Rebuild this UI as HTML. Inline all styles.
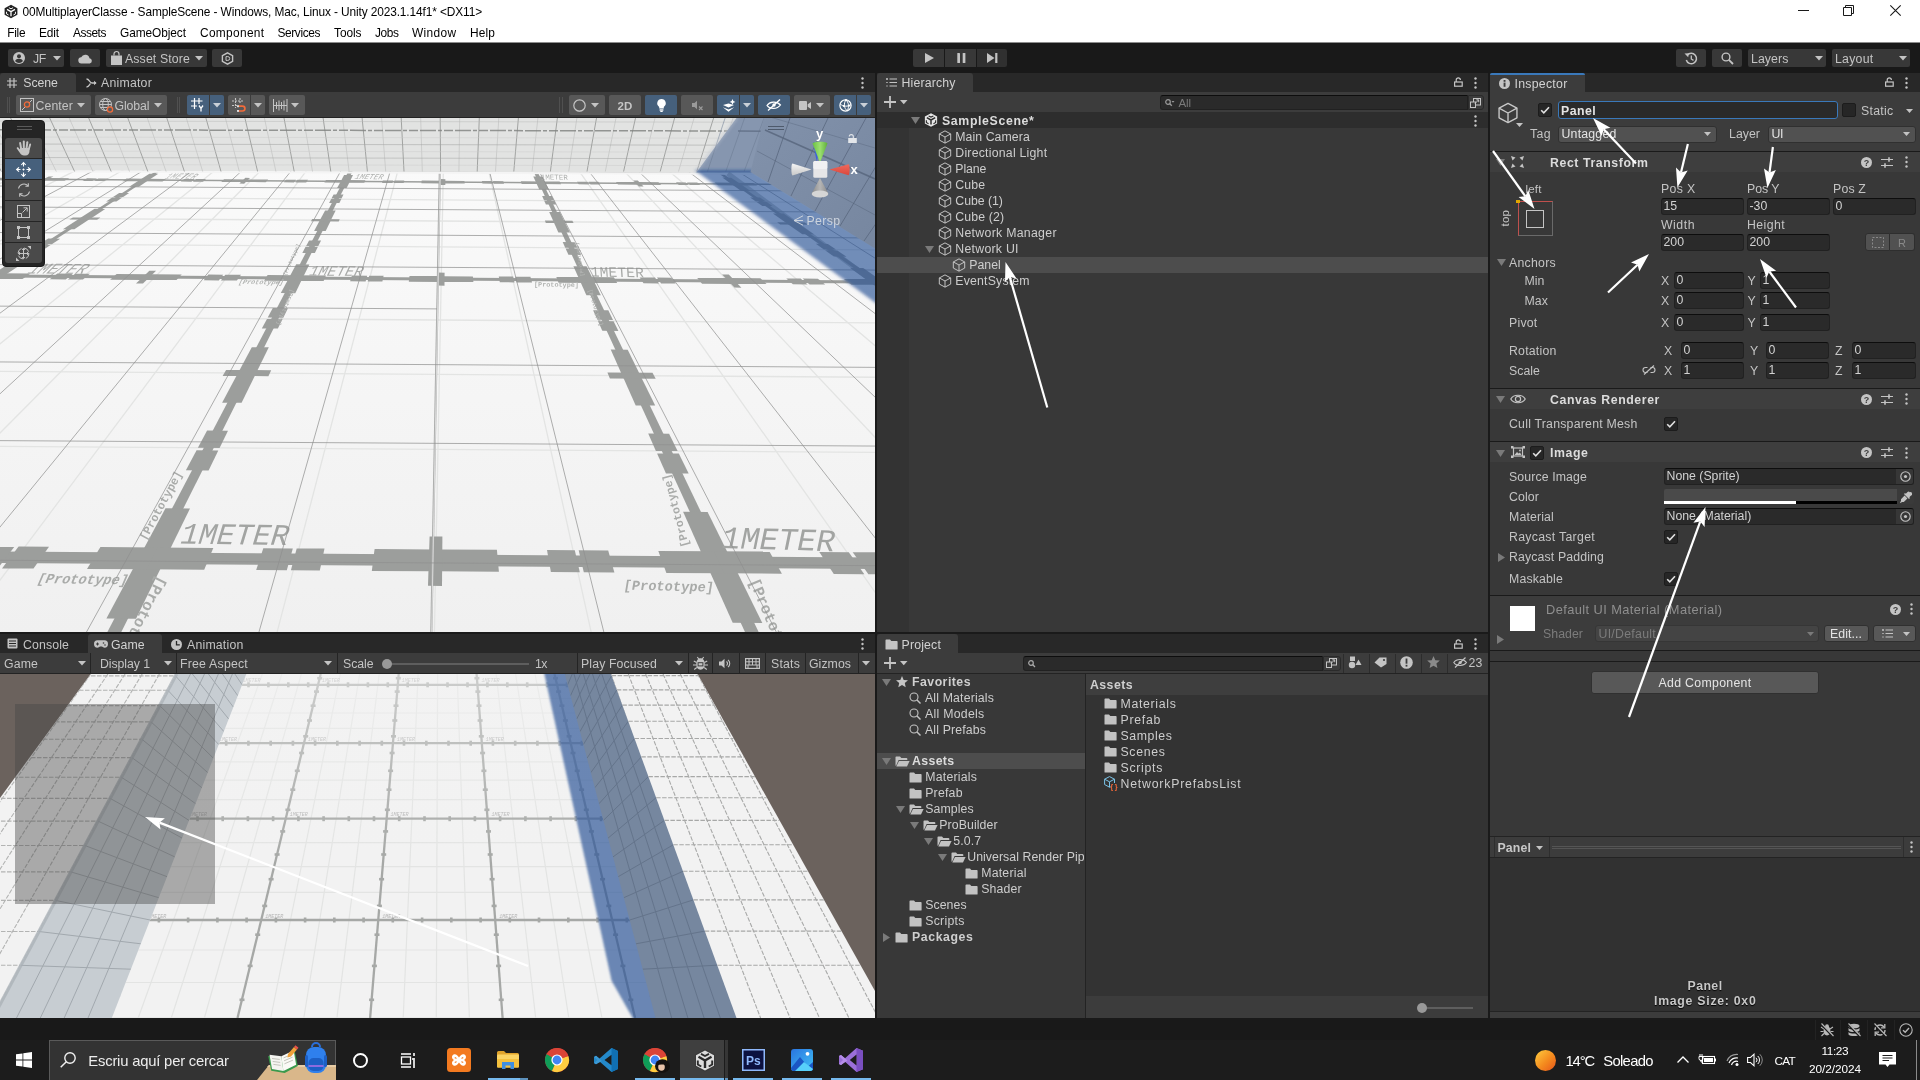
<!DOCTYPE html>
<html><head><meta charset="utf-8"><title>Unity</title>
<style>
*{box-sizing:border-box;margin:0;padding:0}
html,body{width:1920px;height:1080px;overflow:hidden;background:#191919}
body{will-change:transform;font-family:"Liberation Sans",sans-serif;font-size:12px;color:#c8c8c8;position:relative;line-height:1}
.a{position:absolute}
.t{position:absolute;white-space:nowrap;line-height:16px;height:16px;font-size:12.3px;color:#c9c9c9}
.b{font-weight:bold;color:#d4d4d4}
.tb{position:absolute;background:#585858;border-radius:2px}
.tbsel{position:absolute;background:#46607c;border-radius:2px}
.fld{position:absolute;background:#2a2a2a;border:1px solid #212121;border-top-color:#0d0d0d;border-radius:3px;height:17px;font-size:12.3px;line-height:15px;padding-left:2px;color:#d2d2d2;white-space:nowrap;overflow:hidden}
.dd{position:absolute;background:#515151;border:1px solid #303030;border-radius:3px;height:17px;font-size:12.3px;line-height:15px;padding-left:3px;color:#e4e4e4;white-space:nowrap}
.tabbar{position:absolute;background:#282828;height:20px}
.tab{position:absolute;background:#3c3c3c;height:20px;border-radius:3px 3px 0 0}
.panel{position:absolute;background:#383838}
.hdr{position:absolute;left:1490px;width:430px;height:21px;background:#3e3e3e;border-top:1px solid #1a1a1a}
.sep{position:absolute;left:1490px;width:430px;height:1px;background:#1a1a1a}
.cb{position:absolute;width:14px;height:14px;background:#262626;border:1px solid #1c1c1c;border-radius:2px}
svg{position:absolute;overflow:visible}
</style></head><body>
<!-- top -->
<div class="a" style="left:0.0px;top:0.0px;width:1920.0px;height:42.0px;background:#ffffff;"></div>
<div class="a" style="left:0.0px;top:42.0px;width:1920.0px;height:1.0px;background:#8c8c8c;"></div>
<svg style="left:3.5px;top:4.0px;" width="14" height="15" viewBox="0 0 16 16"><path d="M8 .3L15.300 4.200V11.800L8 15.700 .7 11.800V4.200Z" fill="#222"/><path d="M8 8.200V13.300M8 8.200L3.400 5.600M8 8.200L12.600 5.600" stroke="#fff" stroke-width="1.500"/><path d="M5.600 3.600L8 4.900 10.400 3.600M2.900 8.300V10.700L5.200 12M13.100 8.300V10.700L10.800 12" fill="none" stroke="#fff" stroke-width="1.100"/></svg>
<div class="t" style="left:22.5px;top:4.1px;font-size:11.9px;letter-spacing:-0.115px;color:#000;">00MultiplayerClasse - SampleScene - Windows, Mac, Linux - Unity 2023.1.14f1* &lt;DX11&gt;</div>
<div class="a" style="left:1798.0px;top:10.0px;width:11.0px;height:1.0px;background:#1a1a1a;"></div>
<svg style="left:1843.0px;top:5.0px;" width="11" height="11" viewBox="0 0 11 11"><path d="M0.5 2.5H8.5V10.5H0.5Z M2.5 2.5V0.5H10.5V8.5H8.5" fill="none" stroke="#1a1a1a" stroke-width="1"/></svg>
<svg style="left:1890.0px;top:5.0px;" width="11" height="11" viewBox="0 0 11 11"><path d="M0.3 0.3L10.7 10.7M10.7 0.3L0.3 10.7" stroke="#1a1a1a" stroke-width="1.1"/></svg>
<div class="t" style="left:7.3px;top:25.1px;font-size:11.9px;letter-spacing:-0.296px;color:#000;">File</div>
<div class="t" style="left:39.0px;top:25.1px;font-size:11.9px;letter-spacing:-0.128px;color:#000;">Edit</div>
<div class="t" style="left:73.0px;top:25.1px;font-size:11.9px;letter-spacing:-0.453px;color:#000;">Assets</div>
<div class="t" style="left:120.0px;top:25.1px;font-size:11.9px;letter-spacing:-0.081px;color:#000;">GameObject</div>
<div class="t" style="left:200.0px;top:25.1px;font-size:11.9px;letter-spacing:0.329px;color:#000;">Component</div>
<div class="t" style="left:277.5px;top:25.1px;font-size:11.9px;letter-spacing:-0.392px;color:#000;">Services</div>
<div class="t" style="left:334.0px;top:25.1px;font-size:11.9px;letter-spacing:-0.058px;color:#000;">Tools</div>
<div class="t" style="left:375.0px;top:25.1px;font-size:11.9px;letter-spacing:-0.410px;color:#000;">Jobs</div>
<div class="t" style="left:412.0px;top:25.1px;font-size:11.9px;letter-spacing:0.361px;color:#000;">Window</div>
<div class="t" style="left:470.0px;top:25.1px;font-size:11.9px;letter-spacing:0.130px;color:#000;">Help</div>
<div class="a" style="left:0.0px;top:43.0px;width:1920.0px;height:30.0px;background:#191919;"></div>
<div class="a" style="left:8.0px;top:49.0px;width:56.0px;height:18.0px;background:#383838;border-radius:2px"></div>
<div class="a" style="left:70.0px;top:49.0px;width:30.0px;height:18.0px;background:#383838;border-radius:2px"></div>
<div class="a" style="left:106.0px;top:49.0px;width:101.0px;height:18.0px;background:#383838;border-radius:2px"></div>
<div class="a" style="left:212.0px;top:49.0px;width:30.0px;height:18.0px;background:#383838;border-radius:2px"></div>
<svg style="left:13.0px;top:52.0px;" width="12" height="12" viewBox="0 0 12 12"><circle cx="6" cy="6" r="6" fill="#c4c4c4"/><circle cx="6" cy="4.3" r="2" fill="#383838"/><path d="M2.2 9.3 a3.8 2.6 0 0 1 7.6 0 a5 5 0 0 1 -7.6 0Z" fill="#383838"/></svg>
<div class="t" style="left:33.0px;top:50.6px;font-size:12.3px;letter-spacing:-0.332px;color:#c4c4c4;">JF</div>
<svg style="left:52.5px;top:55.8px;" width="8" height="4.5" viewBox="0 0 8 4.5"><path d="M0 0H8 L4 4.5 Z" fill="#c4c4c4"/></svg>
<svg style="left:77.5px;top:52.5px;" width="15" height="11" viewBox="0 0 15 11"><path d="M3.6 10.5 a3.1 3.1 0 0 1 -.4-6.2 a4.4 4.4 0 0 1 8.3 .9 a2.7 2.7 0 0 1 .3 5.3Z" fill="#c4c4c4"/></svg>
<svg style="left:110.5px;top:50.5px;" width="11" height="14" viewBox="0 0 11 14"><path d="M0 4.5H11V14H0Z" fill="#c4c4c4"/><path d="M3 4.5V3a2.5 2.5 0 0 1 5 0V4.5" fill="none" stroke="#c4c4c4" stroke-width="1.2"/></svg>
<div class="t" style="left:125.0px;top:50.6px;font-size:12.3px;letter-spacing:0.130px;color:#c4c4c4;">Asset Store</div>
<svg style="left:194.5px;top:55.8px;" width="8" height="4.5" viewBox="0 0 8 4.5"><path d="M0 0H8 L4 4.5 Z" fill="#c4c4c4"/></svg>
<svg style="left:220.5px;top:52.0px;" width="13" height="13" viewBox="0 0 13 13"><path d="M6.5 0.8 L11.6 3.7 V9.3 L6.5 12.2 L1.4 9.3 V3.7 Z" fill="none" stroke="#c4c4c4" stroke-width="1.4"/><path d="M5 4.6H6.8a1.9 1.9 0 0 1 0 3.8H5Z" fill="none" stroke="#c4c4c4" stroke-width="1"/></svg>
<div class="a" style="left:913.0px;top:49.0px;width:31.0px;height:18.0px;background:#383838;border-radius:2px 0 0 2px"></div>
<div class="a" style="left:945.0px;top:49.0px;width:31.0px;height:18.0px;background:#383838;"></div>
<div class="a" style="left:977.0px;top:49.0px;width:30.0px;height:18.0px;background:#303030;border-radius:0 2px 2px 0"></div>
<svg style="left:924.5px;top:53.0px;" width="9" height="10" viewBox="0 0 9 10"><path d="M0 0 L9 5 L0 10Z" fill="#c4c4c4"/></svg>
<svg style="left:956.5px;top:53.0px;" width="9" height="10" viewBox="0 0 9 10"><rect x="0.3" width="2.7" height="10" rx=".6" fill="#c4c4c4"/><rect x="5.7" width="2.7" height="10" rx=".6" fill="#c4c4c4"/></svg>
<svg style="left:986.5px;top:53.0px;" width="11" height="10" viewBox="0 0 11 10"><path d="M0 0 L7.5 5 L0 10Z" fill="#c4c4c4"/><rect x="8.2" width="2.2" height="10" fill="#c4c4c4"/></svg>
<div class="a" style="left:1676.0px;top:49.0px;width:30.0px;height:18.0px;background:#383838;border-radius:2px"></div>
<div class="a" style="left:1712.0px;top:49.0px;width:30.0px;height:18.0px;background:#383838;border-radius:2px"></div>
<div class="a" style="left:1748.0px;top:49.0px;width:78.0px;height:18.0px;background:#383838;border-radius:2px"></div>
<div class="a" style="left:1832.0px;top:49.0px;width:78.0px;height:18.0px;background:#383838;border-radius:2px"></div>
<svg style="left:1684.0px;top:51.5px;" width="14" height="13" viewBox="0 0 14 13"><path d="M3.2 3.3 A5.2 5.2 0 1 1 2.3 8" fill="none" stroke="#c4c4c4" stroke-width="1.5"/><path d="M0.5 1.5 L4.8 1.2 L4.2 5.3Z" fill="#c4c4c4"/><path d="M7.3 3.6V7l2.2 1.4" fill="none" stroke="#c4c4c4" stroke-width="1.3"/></svg>
<svg style="left:1720.5px;top:52.0px;" width="13" height="13" viewBox="0 0 13 13"><circle cx="5" cy="5" r="3.9" fill="none" stroke="#c4c4c4" stroke-width="1.4"/><path d="M7.9 7.9 L12 12" stroke="#c4c4c4" stroke-width="1.8"/></svg>
<div class="t" style="left:1751.0px;top:50.6px;font-size:12.3px;letter-spacing:0.097px;color:#c4c4c4;">Layers</div>
<svg style="left:1814.5px;top:55.8px;" width="8" height="4.5" viewBox="0 0 8 4.5"><path d="M0 0H8 L4 4.5 Z" fill="#c4c4c4"/></svg>
<div class="t" style="left:1835.0px;top:50.6px;font-size:12.3px;letter-spacing:0.262px;color:#c4c4c4;">Layout</div>
<svg style="left:1898.5px;top:55.8px;" width="8" height="4.5" viewBox="0 0 8 4.5"><path d="M0 0H8 L4 4.5 Z" fill="#c4c4c4"/></svg>
<!-- scene -->
<div class="a" style="left:0.0px;top:73.0px;width:875.0px;height:19.0px;background:#282828;"></div>
<div class="a" style="left:0.0px;top:73.0px;width:76.0px;height:19.0px;background:#3c3c3c;border-radius:3px 3px 0 0"></div>
<svg style="left:6.5px;top:77.5px;" width="10" height="10" viewBox="0 0 10 10"><path d="M3 0V10M7 0V10M0 3H10M0 7H10" stroke="#c4c4c4" stroke-width="1.2"/></svg>
<div class="t" style="left:23.3px;top:75.1px;font-size:12.3px;letter-spacing:-0.075px;color:#d2d2d2;">Scene</div>
<svg style="left:86.0px;top:77.5px;" width="11" height="10" viewBox="0 0 11 10"><path d="M0.5 1 C3.5 1 3.5 5 6 5 H10 M0.5 9 C3 9 3.5 6.5 4.5 5.5" fill="none" stroke="#c4c4c4" stroke-width="1.3"/><path d="M8 2.8 L10.6 5 L8 7.2Z" fill="#c4c4c4"/></svg>
<div class="t" style="left:101.0px;top:75.1px;font-size:12.3px;letter-spacing:0.223px;color:#c4c4c4;">Animator</div>
<svg style="left:860.5px;top:76.5px;" width="3" height="12" viewBox="0 0 3 12"><circle cx="1.5" cy="1.5" r="1.2" fill="#c4c4c4"/><circle cx="1.5" cy="6" r="1.2" fill="#c4c4c4"/><circle cx="1.5" cy="10.5" r="1.2" fill="#c4c4c4"/></svg>
<div class="a" style="left:0.0px;top:92.0px;width:875.0px;height:26.0px;background:#3c3c3c;"></div>
<div class="a" style="left:0.0px;top:117.0px;width:875.0px;height:1.0px;background:#232323;"></div>
<div class="a" style="left:6.5px;top:97.0px;width:1.0px;height:16.0px;background:#505050;"></div>
<div class="a" style="left:9.0px;top:97.0px;width:1.0px;height:16.0px;background:#505050;"></div>
<div class="a" style="left:176.5px;top:97.0px;width:1.0px;height:16.0px;background:#505050;"></div>
<div class="a" style="left:179.0px;top:97.0px;width:1.0px;height:16.0px;background:#505050;"></div>
<div class="a" style="left:559.0px;top:97.0px;width:1.0px;height:16.0px;background:#505050;"></div>
<div class="a" style="left:562.0px;top:97.0px;width:1.0px;height:16.0px;background:#505050;"></div>
<div class="a" style="left:16.0px;top:95.0px;width:75.0px;height:20.0px;background:#585858;border-radius:2px"></div>
<div class="a" style="left:95.0px;top:95.0px;width:72.0px;height:20.0px;background:#585858;border-radius:2px"></div>
<div class="a" style="left:187.0px;top:95.0px;width:22.0px;height:20.0px;background:#46607c;border-radius:2px 0 0 2px"></div>
<div class="a" style="left:210.0px;top:95.0px;width:14.0px;height:20.0px;background:#46607c;border-radius:0 2px 2px 0"></div>
<div class="a" style="left:228.0px;top:95.0px;width:22.0px;height:20.0px;background:#585858;border-radius:2px 0 0 2px"></div>
<div class="a" style="left:251.0px;top:95.0px;width:14.0px;height:20.0px;background:#585858;border-radius:0 2px 2px 0"></div>
<div class="a" style="left:269.0px;top:95.0px;width:36.0px;height:20.0px;background:#585858;border-radius:2px"></div>
<svg style="left:20.0px;top:98.0px;" width="14" height="14" viewBox="0 0 14 14"><rect x=".5" y=".5" width="13" height="13" fill="none" stroke="#c4c4c4" stroke-width="1"/><path d="M2 12L12 2" stroke="#c4c4c4" stroke-width="1"/><circle cx="7" cy="6.5" r="2.6" fill="#585858" stroke="#f26b3a" stroke-width="1.3"/></svg>
<div class="t" style="left:35.5px;top:97.6px;font-size:12.3px;letter-spacing:0.097px;color:#c4c4c4;">Center</div>
<svg style="left:77.0px;top:102.8px;" width="8" height="4.5" viewBox="0 0 8 4.5"><path d="M0 0H8 L4 4.5 Z" fill="#c4c4c4"/></svg>
<svg style="left:99.0px;top:98.0px;" width="15" height="15" viewBox="0 0 15 15"><circle cx="6.5" cy="6.5" r="6" fill="none" stroke="#c4c4c4" stroke-width="1"/><ellipse cx="6.5" cy="6.5" rx="2.8" ry="6" fill="none" stroke="#c4c4c4" stroke-width="1"/><path d="M.5 6.5H12.5M1.5 3.5H11.5M1.5 9.5H11.5" stroke="#c4c4c4" stroke-width="1"/><circle cx="11" cy="11.5" r="2.6" fill="#585858" stroke="#f26b3a" stroke-width="1.3"/></svg>
<div class="t" style="left:114.5px;top:97.6px;font-size:12.3px;letter-spacing:-0.092px;color:#c4c4c4;">Global</div>
<svg style="left:153.5px;top:102.8px;" width="8" height="4.5" viewBox="0 0 8 4.5"><path d="M0 0H8 L4 4.5 Z" fill="#c4c4c4"/></svg>
<svg style="left:191.0px;top:98.0px;" width="14" height="14" viewBox="0 0 14 14"><path d="M3.5 0V11M8 0V6M0 3H11.5M0 8H6" stroke="#fff" stroke-width="1.2"/><path d="M8 7.5l2 2.8 2-2.8M10 10.3V13.5" fill="none" stroke="#fff" stroke-width="1.3"/></svg>
<svg style="left:213.0px;top:102.8px;" width="8" height="4.5" viewBox="0 0 8 4.5"><path d="M0 0H8 L4 4.5 Z" fill="#c9d0d8"/></svg>
<svg style="left:232.0px;top:98.0px;" width="14" height="14" viewBox="0 0 14 14"><path d="M3.5 0V10M8 0V5M0 3H11.5M0 7.5H5" stroke="#c4c4c4" stroke-width="1.1" stroke-dasharray="2 1"/><path d="M6.5 8.2H10.5a2.4 2.4 0 0 1 0 4.8H6.5" fill="none" stroke="#f26b3a" stroke-width="1.7"/><rect x="5" y="7.3" width="2" height="1.9" fill="#ddd"/><rect x="5" y="12" width="2" height="1.9" fill="#ddd"/></svg>
<svg style="left:254.0px;top:102.8px;" width="8" height="4.5" viewBox="0 0 8 4.5"><path d="M0 0H8 L4 4.5 Z" fill="#c4c4c4"/></svg>
<svg style="left:272.5px;top:98.5px;" width="15" height="13" viewBox="0 0 15 13"><path d="M.5 0V13M14 0V13M3.5 3V10M6 1.5V11.5M8.5 3V10M11 1.5V11.5M.5 6.5H14" stroke="#c4c4c4" stroke-width="1"/></svg>
<svg style="left:291.0px;top:102.8px;" width="8" height="4.5" viewBox="0 0 8 4.5"><path d="M0 0H8 L4 4.5 Z" fill="#c4c4c4"/></svg>
<div class="a" style="left:569.0px;top:95.0px;width:36.0px;height:20.0px;background:#585858;border-radius:2px"></div>
<div class="a" style="left:609.0px;top:95.0px;width:32.0px;height:20.0px;background:#585858;border-radius:2px"></div>
<div class="a" style="left:645.0px;top:95.0px;width:32.0px;height:20.0px;background:#46607c;border-radius:2px"></div>
<div class="a" style="left:681.0px;top:95.0px;width:32.0px;height:20.0px;background:#585858;border-radius:2px"></div>
<div class="a" style="left:717.0px;top:95.0px;width:22.0px;height:20.0px;background:#46607c;border-radius:2px 0 0 2px"></div>
<div class="a" style="left:740.0px;top:95.0px;width:14.0px;height:20.0px;background:#46607c;border-radius:0 2px 2px 0"></div>
<div class="a" style="left:758.0px;top:95.0px;width:32.0px;height:20.0px;background:#46607c;border-radius:2px"></div>
<div class="a" style="left:794.0px;top:95.0px;width:36.0px;height:20.0px;background:#585858;border-radius:2px"></div>
<div class="a" style="left:834.0px;top:95.0px;width:22.0px;height:20.0px;background:#46607c;border-radius:2px 0 0 2px"></div>
<div class="a" style="left:857.0px;top:95.0px;width:14.0px;height:20.0px;background:#46607c;border-radius:0 2px 2px 0"></div>
<svg style="left:573.0px;top:98.5px;" width="14" height="13" viewBox="0 0 14 13"><circle cx="6.500" cy="6.500" r="5.700" fill="none" stroke="#c4c4c4" stroke-width="1.200"/><path d="M12.200 5.500A5.800 5.800 0 0 1 3.500 11.500 6.200 5.400 0 0 0 12.200 5.500Z" fill="#c4c4c4"/></svg>
<svg style="left:591.0px;top:102.8px;" width="8" height="4.5" viewBox="0 0 8 4.5"><path d="M0 0H8 L4 4.5 Z" fill="#c4c4c4"/></svg>
<div class="t" style="left:617.5px;top:97.6px;font-size:11.5px;font-weight:bold;letter-spacing:0.150px;color:#c4c4c4;">2D</div>
<svg style="left:656.5px;top:98.5px;" width="9" height="13" viewBox="0 0 9 13"><path d="M4.5 0a4.3 4.3 0 0 1 2.3 7.9V9.5H2.2V7.9A4.3 4.3 0 0 1 4.5 0Z" fill="#fff"/><rect x="2.6" y="10.3" width="3.8" height="1.4" fill="#fff"/><rect x="3.3" y="12" width="2.4" height="1" fill="#fff"/></svg>
<svg style="left:691.5px;top:100.0px;" width="13" height="11" viewBox="0 0 13 11"><path d="M0 3H2.5L5 .8V9.2L2.5 7H0Z" fill="#9a9a9a"/><path d="M7 6.5l3.5 3.5M10.5 6.5L7 10" stroke="#9a9a9a" stroke-width="1.1"/></svg>
<svg style="left:721.5px;top:98.5px;" width="14" height="13" viewBox="0 0 14 13"><path d="M.8 8.2L6.5 10.5 12.2 8.2 6.5 12.8Z M1 6L6.5 8.5 12 6 6.5 4.5Z" fill="#fff"/><path d="M10.5 0l.9 2 2 .9-2 .9-.9 2-.9-2-2-.9 2-.9Z" fill="#fff"/></svg>
<svg style="left:743.0px;top:102.8px;" width="8" height="4.5" viewBox="0 0 8 4.5"><path d="M0 0H8 L4 4.5 Z" fill="#c9d0d8"/></svg>
<svg style="left:766.0px;top:99.0px;" width="16" height="12" viewBox="0 0 16 12"><path d="M1 6.5C3.5 2.5 10.5 1.5 14.5 6 11 10.5 4 10.5 1 6.5Z" fill="none" stroke="#fff" stroke-width="1.2"/><circle cx="8" cy="6" r="1.7" fill="#fff"/><path d="M2 11.5L14 .5" stroke="#fff" stroke-width="1.3"/></svg>
<svg style="left:799.0px;top:100.5px;" width="12" height="9" viewBox="0 0 12 9"><rect width="8" height="9" rx="1" fill="#c4c4c4"/><path d="M8.7 3.2L12 1V8L8.7 5.8Z" fill="#c4c4c4"/></svg>
<svg style="left:816.0px;top:102.8px;" width="8" height="4.5" viewBox="0 0 8 4.5"><path d="M0 0H8 L4 4.5 Z" fill="#c4c4c4"/></svg>
<svg style="left:838.5px;top:98.5px;" width="13" height="13" viewBox="0 0 13 13"><circle cx="6.5" cy="6.5" r="5.6" fill="none" stroke="#fff" stroke-width="1.2"/><path d="M1.2 5C4 7.5 9 8 12 5.5M7 1C4.5 4 5 9.5 8.2 11.8M7 1C9.5 3 10.5 8 8.2 11.8" fill="none" stroke="#fff" stroke-width="1"/><circle cx="7" cy="1.2" r="1.1" fill="#fff"/><circle cx="4.8" cy="7" r="1.1" fill="#fff"/><circle cx="10.2" cy="6.6" r="1.1" fill="#fff"/></svg>
<svg style="left:860.0px;top:102.8px;" width="8" height="4.5" viewBox="0 0 8 4.5"><path d="M0 0H8 L4 4.5 Z" fill="#c9d0d8"/></svg>
<svg style="left:0.0px;top:118.0px;" width="875" height="514" viewBox="0 0 875 514"><defs><clipPath id="scl"><rect width="875" height="514"/></clipPath><linearGradient id="flg" x1="0" y1="0" x2="0" y2="1"><stop offset="0" stop-color="#fbfbfb"/><stop offset="1" stop-color="#f0f0f0"/></linearGradient><filter id="sblur" x="-10%" y="-10%" width="120%" height="120%"><feGaussianBlur stdDeviation="1.6"/></filter></defs><g clip-path="url(#scl)"><rect width="875" height="514" fill="url(#flg)"/><path d="M-291.5 38.7 L-2691.4 603.4" stroke="#e3e4e3" stroke-width="1.3"/><path d="M-248.2 39.0 L-2507.7 604.7" stroke="#e3e4e3" stroke-width="1.3"/><path d="M-205.0 39.3 L-2324.0 605.9" stroke="#e3e4e3" stroke-width="1.3"/><path d="M-118.5 39.9 L-1956.4 608.4" stroke="#e3e4e3" stroke-width="1.3"/><path d="M-75.3 40.2 L-1772.7 609.7" stroke="#e3e4e3" stroke-width="1.3"/><path d="M-32.0 40.5 L-1588.9 610.9" stroke="#e3e4e3" stroke-width="1.3"/><path d="M54.4 41.1 L-1221.4 613.4" stroke="#e3e4e3" stroke-width="1.3"/><path d="M97.7 41.4 L-1037.7 614.7" stroke="#e3e4e3" stroke-width="1.3"/><path d="M140.9 41.7 L-853.9 615.9" stroke="#e3e4e3" stroke-width="1.3"/><path d="M227.4 42.3 L-486.4 618.4" stroke="#e3e4e3" stroke-width="1.3"/><path d="M270.6 42.6 L-302.7 619.7" stroke="#e3e4e3" stroke-width="1.3"/><path d="M313.8 42.9 L-118.9 620.9" stroke="#e3e4e3" stroke-width="1.3"/><path d="M400.3 43.4 L248.5 623.4" stroke="#e3e4e3" stroke-width="1.3"/><path d="M443.5 43.7 L432.3 624.7" stroke="#e3e4e3" stroke-width="1.3"/><path d="M486.8 44.0 L616.0 625.9" stroke="#e3e4e3" stroke-width="1.3"/><path d="M573.2 44.6 L983.5 628.4" stroke="#e3e4e3" stroke-width="1.3"/><path d="M616.5 44.9 L1167.3 629.6" stroke="#e3e4e3" stroke-width="1.3"/><path d="M659.7 45.2 L1351.0 630.9" stroke="#e3e4e3" stroke-width="1.3"/><path d="M746.2 45.8 L1718.5 633.4" stroke="#e3e4e3" stroke-width="1.3"/><path d="M789.4 46.1 L1902.3 634.6" stroke="#e3e4e3" stroke-width="1.3"/><path d="M832.7 46.4 L2086.1 635.9" stroke="#e3e4e3" stroke-width="1.3"/><path d="M919.1 47.0 L2453.6 638.4" stroke="#e3e4e3" stroke-width="1.3"/><path d="M962.4 47.3 L2637.3 639.6" stroke="#e3e4e3" stroke-width="1.3"/><path d="M1005.6 47.6 L2821.0 640.9" stroke="#e3e4e3" stroke-width="1.3"/><path d="M-5 618.8 L880 624.9" stroke="#e3e4e3" stroke-width="1.3"/><path d="M-5 328.4 L880 334.4" stroke="#e3e4e3" stroke-width="1.3"/><path d="M-5 253.3 L880 259.3" stroke="#e3e4e3" stroke-width="1.3"/><path d="M-5 199.0 L880 205.0" stroke="#e3e4e3" stroke-width="1.3"/><path d="M-5 125.8 L880 131.9" stroke="#e3e4e3" stroke-width="1.3"/><path d="M-5 100.0 L880 106.0" stroke="#e3e4e3" stroke-width="1.3"/><path d="M-5 78.8 L880 84.8" stroke="#e3e4e3" stroke-width="1.3"/><path d="M-5 45.9 L880 52.0" stroke="#e3e4e3" stroke-width="1.3"/><path d="M-4.5 40.7 L-0.7 40.7 L-1455.9 611.8 L-1472.1 611.7Z" fill="#9c9e9c"/><path d="M173.2 41.9 L177.0 41.9 L-700.3 616.9 L-716.5 616.8Z" fill="#9c9e9c"/><path d="M353.8 43.1 L357.6 43.2 L67.0 622.2 L50.8 622.1Z" fill="#9c9e9c"/><path d="M529.3 44.3 L533.1 44.4 L813.0 627.2 L796.9 627.1Z" fill="#9c9e9c"/><path d="M704.5 45.5 L708.3 45.5 L1557.6 632.3 L1541.4 632.2Z" fill="#9c9e9c"/><path d="M-5.0 433.4 L880.0 439.5 L880.0 451.0 L-5.0 444.9Z" fill="#9c9e9c"/><path d="M-5.0 156.5 L880.0 162.5 L880.0 165.5 L-5.0 159.5Z" fill="#9c9e9c"/><path d="M-5.0 60.3 L880.0 66.3 L880.0 67.7 L-5.0 61.7Z" fill="#9c9e9c"/><path d="M-366.9 386.6 L-342.4 386.8 L-417.4 436.3 L-444.2 436.1Z" fill="#9c9e9c"/><path d="M-277.1 329.1 L-255.3 329.2 L-285.3 349.0 L-308.0 348.8Z" fill="#9c9e9c"/><path d="M-246.6 309.5 L-225.7 309.6 L-251.6 326.7 L-273.2 326.6Z" fill="#9c9e9c"/><path d="M-159.2 253.5 L-141.0 253.6 L-183.8 281.9 L-203.3 281.8Z" fill="#9c9e9c"/><path d="M-117.3 226.6 L-100.3 226.8 L-137.2 251.1 L-155.3 251.0Z" fill="#9c9e9c"/><path d="M-73.5 198.6 L-57.8 198.7 L-72.2 208.2 L-88.3 208.1Z" fill="#9c9e9c"/><path d="M-56.7 187.8 L-41.6 187.9 L-55.9 197.4 L-71.5 197.3Z" fill="#9c9e9c"/><path d="M-10.1 157.9 L3.6 158.0 L-19.1 173.0 L-33.5 172.9Z" fill="#9c9e9c"/><path d="M11.1 144.3 L24.2 144.4 L3.6 158.0 L-10.1 157.9Z" fill="#9c9e9c"/><path d="M38.3 126.9 L50.6 127.0 L41.2 133.2 L28.6 133.1Z" fill="#9c9e9c"/><path d="M48.2 120.6 L60.2 120.7 L51.8 126.2 L39.5 126.1Z" fill="#9c9e9c"/><path d="M78.7 101.0 L89.8 101.1 L74.4 111.3 L62.9 111.2Z" fill="#9c9e9c"/><path d="M94.6 90.8 L105.2 90.9 L91.2 100.2 L80.1 100.1Z" fill="#9c9e9c"/><path d="M112.2 79.6 L122.3 79.6 L116.4 83.5 L106.1 83.5Z" fill="#9c9e9c"/><path d="M119.2 75.1 L129.1 75.1 L123.1 79.1 L113.0 79.0Z" fill="#9c9e9c"/><path d="M139.6 62.0 L148.9 62.1 L138.8 68.7 L129.2 68.7Z" fill="#9c9e9c"/><path d="M149.4 55.7 L158.3 55.8 L148.9 62.1 L139.6 62.0Z" fill="#9c9e9c"/><path d="M162.3 47.5 L170.8 47.5 L166.3 50.5 L157.6 50.5Z" fill="#9c9e9c"/><path d="M167.1 44.4 L175.5 44.4 L171.4 47.1 L162.9 47.1Z" fill="#9c9e9c"/><path d="M182.5 34.5 L190.5 34.6 L182.6 39.7 L174.4 39.7Z" fill="#9c9e9c"/><path d="M190.8 29.2 L198.5 29.2 L191.2 34.1 L183.2 34.0Z" fill="#9c9e9c"/><path d="M200.2 23.1 L207.7 23.2 L204.5 25.3 L196.9 25.3Z" fill="#9c9e9c"/><path d="M204.1 20.7 L211.4 20.7 L208.1 22.9 L200.7 22.9Z" fill="#9c9e9c"/><path d="M215.5 13.4 L222.4 13.4 L216.7 17.2 L209.6 17.1Z" fill="#9c9e9c"/><path d="M-968.5 772.1 L-925.9 772.4 L-1184.2 943.2 L-1234.8 942.8Z" fill="#9c9e9c"/><path d="M-721.7 614.0 L-686.5 614.2 L-761.8 664.0 L-799.3 663.7Z" fill="#9c9e9c"/><path d="M-640.4 561.9 L-607.7 562.1 L-676.7 607.7 L-711.6 607.5Z" fill="#9c9e9c"/><path d="M-444.2 436.1 L-417.4 436.3 L-508.1 496.3 L-537.7 496.1Z" fill="#9c9e9c"/><path d="M-166.2 249.2 L-121.1 249.5 L-129.9 255.5 L-175.7 255.2Z" fill="#9c9e9c"/><path d="M72.9 99.4 L100.4 99.6 L97.1 101.8 L69.3 101.6Z" fill="#9c9e9c"/><path d="M165.5 390.2 L190.0 390.4 L165.6 440.3 L138.8 440.1Z" fill="#9c9e9c"/><path d="M196.6 332.3 L218.3 332.4 L208.6 352.4 L185.9 352.2Z" fill="#9c9e9c"/><path d="M207.1 312.6 L228.0 312.7 L219.6 329.9 L197.9 329.8Z" fill="#9c9e9c"/><path d="M237.3 256.2 L255.6 256.3 L241.6 284.8 L222.1 284.7Z" fill="#9c9e9c"/><path d="M251.8 229.2 L268.8 229.3 L256.8 253.8 L238.7 253.7Z" fill="#9c9e9c"/><path d="M267.0 200.9 L282.6 201.0 L277.9 210.6 L261.8 210.5Z" fill="#9c9e9c"/><path d="M272.8 190.1 L287.9 190.2 L283.3 199.7 L267.7 199.6Z" fill="#9c9e9c"/><path d="M288.9 160.0 L302.6 160.1 L295.3 175.2 L280.8 175.1Z" fill="#9c9e9c"/><path d="M296.2 146.3 L309.4 146.4 L302.6 160.1 L288.9 160.0Z" fill="#9c9e9c"/><path d="M305.6 128.8 L317.9 128.8 L314.9 135.1 L302.3 135.0Z" fill="#9c9e9c"/><path d="M309.1 122.4 L321.1 122.5 L318.3 128.0 L306.1 128.0Z" fill="#9c9e9c"/><path d="M319.6 102.7 L330.7 102.7 L325.7 113.0 L314.1 112.9Z" fill="#9c9e9c"/><path d="M325.1 92.4 L335.7 92.5 L331.1 101.8 L320.1 101.7Z" fill="#9c9e9c"/><path d="M331.2 81.1 L341.3 81.1 L339.4 85.0 L329.1 85.0Z" fill="#9c9e9c"/><path d="M333.6 76.5 L343.5 76.6 L341.5 80.6 L331.5 80.5Z" fill="#9c9e9c"/><path d="M340.7 63.4 L349.9 63.4 L346.6 70.1 L337.1 70.1Z" fill="#9c9e9c"/><path d="M344.1 57.1 L353.0 57.1 L349.9 63.4 L340.7 63.4Z" fill="#9c9e9c"/><path d="M348.5 48.7 L357.1 48.8 L355.6 51.8 L346.9 51.7Z" fill="#9c9e9c"/><path d="M350.2 45.6 L358.6 45.7 L357.3 48.4 L348.7 48.3Z" fill="#9c9e9c"/><path d="M355.5 35.7 L363.5 35.7 L360.9 40.9 L352.7 40.9Z" fill="#9c9e9c"/><path d="M358.4 30.3 L366.1 30.4 L363.7 35.3 L355.8 35.2Z" fill="#9c9e9c"/><path d="M361.7 24.2 L369.1 24.3 L368.0 26.4 L360.5 26.4Z" fill="#9c9e9c"/><path d="M363.0 21.8 L370.3 21.8 L369.2 24.0 L361.8 23.9Z" fill="#9c9e9c"/><path d="M366.9 14.4 L373.9 14.5 L372.0 18.2 L364.9 18.2Z" fill="#9c9e9c"/><path d="M-42.6 778.4 L0.0 778.7 L-84.1 950.6 L-134.7 950.3Z" fill="#9c9e9c"/><path d="M42.8 619.2 L77.9 619.4 L53.4 669.5 L16.0 669.2Z" fill="#9c9e9c"/><path d="M70.9 566.7 L103.6 567.0 L81.1 612.9 L46.3 612.6Z" fill="#9c9e9c"/><path d="M138.8 440.1 L165.6 440.3 L136.0 500.7 L106.4 500.5Z" fill="#9c9e9c"/><path d="M226.1 251.9 L271.2 252.2 L268.4 258.2 L222.6 257.9Z" fill="#9c9e9c"/><path d="M312.2 101.0 L339.7 101.2 L338.7 103.5 L310.9 103.3Z" fill="#9c9e9c"/><path d="M683.1 393.8 L707.6 393.9 L732.3 444.1 L705.5 444.0Z" fill="#9c9e9c"/><path d="M657.1 335.4 L678.8 335.6 L688.7 355.6 L666.0 355.5Z" fill="#9c9e9c"/><path d="M648.2 315.6 L669.1 315.7 L677.6 333.0 L655.9 332.9Z" fill="#9c9e9c"/><path d="M622.9 258.8 L641.1 259.0 L655.2 287.6 L635.7 287.5Z" fill="#9c9e9c"/><path d="M610.7 231.6 L627.7 231.7 L639.9 256.4 L621.7 256.3Z" fill="#9c9e9c"/><path d="M598.0 203.1 L613.6 203.2 L618.4 212.9 L602.3 212.8Z" fill="#9c9e9c"/><path d="M593.1 192.2 L608.3 192.3 L613.0 201.9 L597.4 201.8Z" fill="#9c9e9c"/><path d="M579.6 162.0 L593.4 162.0 L600.8 177.3 L586.4 177.2Z" fill="#9c9e9c"/><path d="M573.4 148.2 L586.6 148.3 L593.4 162.0 L579.6 162.0Z" fill="#9c9e9c"/><path d="M565.6 130.5 L577.9 130.6 L581.0 136.9 L568.4 136.8Z" fill="#9c9e9c"/><path d="M562.7 124.1 L574.7 124.2 L577.5 129.8 L565.2 129.7Z" fill="#9c9e9c"/><path d="M553.8 104.3 L564.9 104.3 L570.0 114.6 L558.4 114.6Z" fill="#9c9e9c"/><path d="M549.2 93.9 L559.8 94.0 L564.5 103.4 L553.4 103.3Z" fill="#9c9e9c"/><path d="M544.1 82.5 L554.2 82.6 L556.1 86.5 L545.9 86.4Z" fill="#9c9e9c"/><path d="M542.1 77.9 L551.9 78.0 L553.9 82.0 L543.9 82.0Z" fill="#9c9e9c"/><path d="M536.2 64.7 L545.4 64.8 L548.8 71.5 L539.2 71.5Z" fill="#9c9e9c"/><path d="M533.3 58.4 L542.3 58.4 L545.4 64.8 L536.2 64.7Z" fill="#9c9e9c"/><path d="M529.6 50.0 L538.2 50.0 L539.7 53.0 L530.9 53.0Z" fill="#9c9e9c"/><path d="M528.2 46.8 L536.6 46.9 L538.0 49.6 L529.4 49.6Z" fill="#9c9e9c"/><path d="M523.7 36.8 L531.7 36.9 L534.3 42.1 L526.1 42.1Z" fill="#9c9e9c"/><path d="M521.3 31.4 L529.0 31.5 L531.4 36.4 L523.5 36.3Z" fill="#9c9e9c"/><path d="M518.6 25.3 L526.0 25.4 L527.1 27.5 L519.5 27.4Z" fill="#9c9e9c"/><path d="M517.5 22.8 L524.8 22.9 L525.9 25.1 L518.5 25.0Z" fill="#9c9e9c"/><path d="M514.2 15.4 L521.1 15.5 L523.0 19.3 L515.9 19.2Z" fill="#9c9e9c"/><path d="M857.6 784.5 L900.2 784.8 L985.5 957.9 L934.9 957.6Z" fill="#9c9e9c"/><path d="M786.0 624.2 L821.2 624.5 L846.0 674.9 L808.5 674.6Z" fill="#9c9e9c"/><path d="M762.5 571.4 L795.2 571.7 L817.9 617.9 L783.1 617.7Z" fill="#9c9e9c"/><path d="M705.5 444.0 L732.3 444.1 L762.3 504.9 L732.7 504.7Z" fill="#9c9e9c"/><path d="M607.4 254.5 L652.5 254.8 L655.7 260.8 L609.9 260.5Z" fill="#9c9e9c"/><path d="M544.9 102.6 L572.4 102.8 L573.6 105.1 L545.8 104.9Z" fill="#9c9e9c"/><path d="M1199.7 397.3 L1224.2 397.4 L1298.0 448.0 L1271.2 447.8Z" fill="#9c9e9c"/><path d="M1116.7 338.5 L1138.4 338.7 L1167.9 358.9 L1145.2 358.7Z" fill="#9c9e9c"/><path d="M1088.5 318.6 L1109.3 318.7 L1134.7 336.1 L1113.1 336.0Z" fill="#9c9e9c"/><path d="M1007.7 261.4 L1025.9 261.6 L1068.0 290.4 L1048.4 290.3Z" fill="#9c9e9c"/><path d="M968.9 234.0 L985.9 234.1 L1022.2 259.0 L1004.1 258.9Z" fill="#9c9e9c"/><path d="M928.4 205.4 L944.0 205.5 L958.2 215.2 L942.1 215.1Z" fill="#9c9e9c"/><path d="M912.9 194.4 L928.0 194.5 L942.1 204.2 L926.5 204.1Z" fill="#9c9e9c"/><path d="M869.7 163.9 L883.5 164.0 L905.8 179.3 L891.4 179.2Z" fill="#9c9e9c"/><path d="M850.1 150.0 L863.2 150.1 L883.5 164.0 L869.7 163.9Z" fill="#9c9e9c"/><path d="M825.0 132.3 L837.3 132.4 L846.5 138.7 L833.9 138.6Z" fill="#9c9e9c"/><path d="M815.8 125.8 L827.8 125.9 L836.1 131.6 L823.9 131.5Z" fill="#9c9e9c"/><path d="M787.6 105.9 L798.7 105.9 L813.8 116.3 L802.3 116.2Z" fill="#9c9e9c"/><path d="M772.9 95.5 L783.5 95.5 L797.3 105.0 L786.3 104.9Z" fill="#9c9e9c"/><path d="M756.6 83.9 L766.7 84.0 L772.5 88.0 L762.3 87.9Z" fill="#9c9e9c"/><path d="M750.1 79.4 L760.0 79.4 L765.9 83.5 L755.9 83.4Z" fill="#9c9e9c"/><path d="M731.3 66.0 L740.5 66.1 L750.5 72.9 L740.9 72.8Z" fill="#9c9e9c"/><path d="M722.3 59.6 L731.2 59.7 L740.5 66.1 L731.3 66.0Z" fill="#9c9e9c"/><path d="M710.3 51.2 L718.9 51.3 L723.3 54.3 L714.6 54.2Z" fill="#9c9e9c"/><path d="M705.8 48.0 L714.3 48.1 L718.3 50.9 L709.8 50.8Z" fill="#9c9e9c"/><path d="M691.6 38.0 L699.6 38.0 L707.3 43.3 L699.1 43.2Z" fill="#9c9e9c"/><path d="M683.9 32.5 L691.6 32.6 L698.9 37.5 L690.9 37.5Z" fill="#9c9e9c"/><path d="M675.2 26.4 L682.6 26.4 L685.8 28.6 L678.3 28.5Z" fill="#9c9e9c"/><path d="M671.7 23.9 L679.0 23.9 L682.2 26.1 L674.8 26.1Z" fill="#9c9e9c"/><path d="M661.1 16.4 L668.1 16.5 L673.7 20.3 L666.6 20.2Z" fill="#9c9e9c"/><path d="M1756.0 790.6 L1798.6 790.9 L2052.9 965.2 L2002.4 964.8Z" fill="#9c9e9c"/><path d="M1527.8 629.3 L1563.0 629.5 L1637.1 680.3 L1599.6 680.0Z" fill="#9c9e9c"/><path d="M1452.7 576.1 L1485.4 576.3 L1553.3 622.9 L1518.5 622.7Z" fill="#9c9e9c"/><path d="M1271.2 447.8 L1298.0 448.0 L1387.3 509.2 L1357.7 509.0Z" fill="#9c9e9c"/><path d="M988.0 257.0 L1033.1 257.4 L1042.2 263.5 L996.5 263.2Z" fill="#9c9e9c"/><path d="M777.1 104.2 L804.6 104.4 L808.0 106.7 L780.2 106.5Z" fill="#9c9e9c"/><path d="M-977.8 421.8 L-921.5 422.1 L-974.4 443.7 L-1033.0 443.3Z" fill="#9c9e9c"/><path d="M-870.8 422.5 L-840.9 422.7 L-890.8 444.3 L-921.8 444.1Z" fill="#9c9e9c"/><path d="M-837.0 422.7 L-808.8 422.9 L-857.4 444.5 L-886.7 444.3Z" fill="#9c9e9c"/><path d="M-758.1 423.3 L-698.9 423.7 L-743.3 445.3 L-804.8 444.9Z" fill="#9c9e9c"/><path d="M-693.3 423.7 L-634.2 424.1 L-676.0 445.7 L-737.5 445.3Z" fill="#9c9e9c"/><path d="M-583.5 424.4 L-555.3 424.6 L-594.1 446.3 L-623.4 446.1Z" fill="#9c9e9c"/><path d="M-551.3 424.7 L-521.5 424.9 L-559.0 446.5 L-590.0 446.3Z" fill="#9c9e9c"/><path d="M-470.8 425.2 L-414.5 425.6 L-447.8 447.3 L-506.3 446.9Z" fill="#9c9e9c"/><path d="M-676.5 410.9 L-663.7 411.0 L-762.8 459.7 L-776.8 459.7Z" fill="#9c9e9c"/><path d="M-414.5 425.6 L-357.2 426.0 L-388.4 447.7 L-447.8 447.3Z" fill="#9c9e9c"/><path d="M-305.7 426.3 L-275.4 426.5 L-303.4 448.3 L-334.9 448.1Z" fill="#9c9e9c"/><path d="M-271.4 426.6 L-242.8 426.8 L-269.5 448.5 L-299.2 448.3Z" fill="#9c9e9c"/><path d="M-191.3 427.1 L-131.3 427.5 L-153.6 449.3 L-216.0 448.9Z" fill="#9c9e9c"/><path d="M-125.5 427.6 L-65.5 428.0 L-85.3 449.8 L-147.7 449.3Z" fill="#9c9e9c"/><path d="M-14.0 428.3 L14.6 428.5 L-2.1 450.3 L-31.8 450.1Z" fill="#9c9e9c"/><path d="M18.6 428.5 L49.0 428.7 L33.5 450.6 L2.0 450.4Z" fill="#9c9e9c"/><path d="M100.4 429.1 L157.7 429.5 L146.5 451.3 L87.0 450.9Z" fill="#9c9e9c"/><path d="M-121.7 414.7 L-108.9 414.8 L-158.5 463.9 L-172.5 463.8Z" fill="#9c9e9c"/><path d="M157.7 429.5 L213.3 429.9 L204.2 451.7 L146.5 451.3Z" fill="#9c9e9c"/><path d="M263.3 430.2 L292.8 430.4 L286.8 452.3 L256.2 452.1Z" fill="#9c9e9c"/><path d="M296.7 430.4 L324.5 430.6 L319.8 452.5 L290.9 452.3Z" fill="#9c9e9c"/><path d="M374.6 431.0 L433.0 431.4 L432.4 453.3 L371.8 452.9Z" fill="#9c9e9c"/><path d="M438.5 431.4 L496.9 431.8 L498.9 453.7 L438.2 453.3Z" fill="#9c9e9c"/><path d="M547.0 432.1 L574.8 432.3 L579.8 454.3 L550.9 454.1Z" fill="#9c9e9c"/><path d="M578.7 432.3 L608.2 432.5 L614.4 454.5 L583.8 454.3Z" fill="#9c9e9c"/><path d="M658.3 432.9 L713.9 433.3 L724.2 455.3 L666.4 454.9Z" fill="#9c9e9c"/><path d="M429.6 418.4 L442.4 418.5 L442.0 467.9 L428.0 467.8Z" fill="#9c9e9c"/><path d="M713.9 433.3 L769.4 433.6 L781.9 455.7 L724.2 455.3Z" fill="#9c9e9c"/><path d="M819.3 434.0 L848.8 434.2 L864.3 456.2 L833.8 456.0Z" fill="#9c9e9c"/><path d="M852.7 434.2 L880.4 434.4 L897.2 456.4 L868.4 456.2Z" fill="#9c9e9c"/><path d="M930.4 434.7 L988.7 435.1 L1009.6 457.2 L949.1 456.8Z" fill="#9c9e9c"/><path d="M994.2 435.2 L1052.5 435.6 L1075.9 457.7 L1015.4 457.2Z" fill="#9c9e9c"/><path d="M1102.5 435.9 L1130.2 436.1 L1156.7 458.2 L1127.8 458.0Z" fill="#9c9e9c"/><path d="M1134.1 436.1 L1163.5 436.3 L1191.3 458.4 L1160.7 458.2Z" fill="#9c9e9c"/><path d="M1213.5 436.7 L1269.0 437.0 L1300.8 459.2 L1243.2 458.8Z" fill="#9c9e9c"/><path d="M972.6 422.1 L985.5 422.2 L1033.5 472.0 L1019.5 471.9Z" fill="#9c9e9c"/><path d="M1269.0 437.0 L1323.8 437.4 L1357.7 459.6 L1300.8 459.2Z" fill="#9c9e9c"/><path d="M1373.1 437.7 L1402.2 437.9 L1439.1 460.1 L1409.0 459.9Z" fill="#9c9e9c"/><path d="M1406.0 438.0 L1433.4 438.2 L1471.6 460.4 L1443.1 460.2Z" fill="#9c9e9c"/><path d="M1482.7 438.5 L1540.3 438.9 L1582.6 461.1 L1522.8 460.7Z" fill="#9c9e9c"/><path d="M1545.7 438.9 L1603.3 439.3 L1648.0 461.6 L1588.3 461.1Z" fill="#9c9e9c"/><path d="M1652.6 439.6 L1680.0 439.8 L1727.7 462.1 L1699.3 461.9Z" fill="#9c9e9c"/><path d="M1683.8 439.9 L1712.9 440.1 L1761.9 462.3 L1731.7 462.1Z" fill="#9c9e9c"/><path d="M1762.2 440.4 L1817.0 440.8 L1870.0 463.1 L1813.1 462.7Z" fill="#9c9e9c"/><path d="M-290.5 153.2 L-261.3 153.4 L-275.3 159.1 L-305.0 158.9Z" fill="#9c9e9c"/><path d="M-235.1 153.6 L-219.6 153.7 L-232.7 159.3 L-248.5 159.2Z" fill="#9c9e9c"/><path d="M-217.6 153.7 L-203.0 153.8 L-215.8 159.5 L-230.7 159.4Z" fill="#9c9e9c"/><path d="M-176.8 154.0 L-146.1 154.2 L-157.8 159.9 L-189.0 159.6Z" fill="#9c9e9c"/><path d="M-143.2 154.2 L-112.6 154.4 L-123.6 160.1 L-154.8 159.9Z" fill="#9c9e9c"/><path d="M-86.4 154.6 L-71.8 154.7 L-82.0 160.4 L-96.9 160.3Z" fill="#9c9e9c"/><path d="M-69.7 154.7 L-54.3 154.8 L-64.2 160.5 L-79.9 160.4Z" fill="#9c9e9c"/><path d="M-28.1 155.0 L1.1 155.2 L-7.7 160.9 L-37.4 160.7Z" fill="#9c9e9c"/><path d="M-141.0 150.7 L-134.3 150.8 L-160.3 163.6 L-167.4 163.5Z" fill="#9c9e9c"/><path d="M1.1 155.2 L30.7 155.4 L22.5 161.1 L-7.7 160.9Z" fill="#9c9e9c"/><path d="M57.4 155.5 L73.1 155.7 L65.7 161.4 L49.7 161.3Z" fill="#9c9e9c"/><path d="M75.1 155.7 L89.9 155.8 L82.9 161.5 L67.8 161.4Z" fill="#9c9e9c"/><path d="M116.6 156.0 L147.7 156.2 L141.8 161.9 L110.1 161.7Z" fill="#9c9e9c"/><path d="M150.7 156.2 L181.7 156.4 L176.5 162.1 L144.8 161.9Z" fill="#9c9e9c"/><path d="M208.4 156.6 L223.2 156.7 L218.8 162.4 L203.7 162.3Z" fill="#9c9e9c"/><path d="M225.3 156.7 L241.0 156.8 L236.9 162.5 L220.9 162.4Z" fill="#9c9e9c"/><path d="M267.6 157.0 L297.2 157.2 L294.3 162.9 L264.1 162.7Z" fill="#9c9e9c"/><path d="M149.4 152.7 L156.1 152.7 L143.0 165.6 L136.0 165.6Z" fill="#9c9e9c"/><path d="M297.2 157.2 L326.0 157.4 L323.6 163.1 L294.3 162.9Z" fill="#9c9e9c"/><path d="M351.9 157.6 L367.2 157.7 L365.6 163.4 L350.1 163.3Z" fill="#9c9e9c"/><path d="M369.2 157.7 L383.6 157.8 L382.4 163.5 L367.7 163.4Z" fill="#9c9e9c"/><path d="M409.5 157.9 L439.7 158.1 L439.6 163.9 L408.8 163.7Z" fill="#9c9e9c"/><path d="M442.6 158.2 L472.9 158.4 L473.4 164.1 L442.5 163.9Z" fill="#9c9e9c"/><path d="M498.8 158.6 L513.2 158.6 L514.5 164.4 L499.8 164.3Z" fill="#9c9e9c"/><path d="M515.2 158.7 L530.4 158.8 L532.1 164.5 L516.5 164.4Z" fill="#9c9e9c"/><path d="M556.3 158.9 L585.1 159.1 L587.9 164.9 L558.5 164.7Z" fill="#9c9e9c"/><path d="M437.9 154.6 L444.6 154.7 L444.5 167.7 L437.5 167.6Z" fill="#9c9e9c"/><path d="M585.1 159.1 L613.9 159.3 L617.2 165.1 L587.9 164.9Z" fill="#9c9e9c"/><path d="M639.7 159.5 L655.0 159.6 L659.0 165.4 L643.5 165.3Z" fill="#9c9e9c"/><path d="M657.0 159.6 L671.3 159.7 L675.8 165.5 L661.1 165.4Z" fill="#9c9e9c"/><path d="M697.2 159.9 L727.4 160.1 L732.9 165.9 L702.1 165.7Z" fill="#9c9e9c"/><path d="M730.2 160.1 L760.4 160.3 L766.6 166.1 L735.8 165.9Z" fill="#9c9e9c"/><path d="M786.3 160.5 L800.6 160.6 L807.6 166.4 L792.9 166.3Z" fill="#9c9e9c"/><path d="M802.6 160.6 L817.9 160.7 L825.2 166.5 L809.6 166.4Z" fill="#9c9e9c"/><path d="M843.7 160.9 L872.5 161.1 L880.8 166.9 L851.5 166.7Z" fill="#9c9e9c"/><path d="M722.1 156.6 L728.8 156.6 L741.4 169.7 L734.4 169.6Z" fill="#9c9e9c"/><path d="M872.5 161.1 L900.8 161.3 L909.8 167.1 L880.8 166.9Z" fill="#9c9e9c"/><path d="M926.4 161.5 L941.4 161.6 L951.1 167.4 L935.8 167.3Z" fill="#9c9e9c"/><path d="M943.4 161.6 L957.6 161.7 L967.6 167.5 L953.1 167.4Z" fill="#9c9e9c"/><path d="M983.1 161.8 L1012.9 162.0 L1024.0 167.9 L993.6 167.7Z" fill="#9c9e9c"/><path d="M1015.7 162.1 L1045.5 162.3 L1057.3 168.1 L1026.9 167.9Z" fill="#9c9e9c"/><path d="M1071.0 162.4 L1085.2 162.5 L1097.8 168.4 L1083.3 168.3Z" fill="#9c9e9c"/><path d="M1087.2 162.6 L1102.2 162.7 L1115.1 168.5 L1099.8 168.4Z" fill="#9c9e9c"/><path d="M1127.8 162.8 L1156.1 163.0 L1170.1 168.9 L1141.1 168.7Z" fill="#9c9e9c"/><path d="M-50.5 59.4 L-30.8 59.5 L-37.1 62.1 L-57.1 62.0Z" fill="#9c9e9c"/><path d="M-13.1 59.7 L-2.7 59.7 L-8.6 62.3 L-19.2 62.2Z" fill="#9c9e9c"/><path d="M-1.3 59.7 L8.5 59.8 L2.7 62.4 L-7.2 62.3Z" fill="#9c9e9c"/><path d="M26.2 59.9 L46.9 60.1 L41.6 62.6 L20.7 62.5Z" fill="#9c9e9c"/><path d="M48.8 60.1 L69.5 60.2 L64.5 62.8 L43.6 62.7Z" fill="#9c9e9c"/><path d="M87.2 60.3 L97.0 60.4 L92.4 63.0 L82.5 62.9Z" fill="#9c9e9c"/><path d="M98.4 60.4 L108.8 60.5 L104.4 63.1 L93.8 63.0Z" fill="#9c9e9c"/><path d="M126.5 60.6 L146.2 60.7 L142.2 63.3 L122.3 63.2Z" fill="#9c9e9c"/><path d="M48.8 58.5 L53.4 58.5 L41.6 64.3 L36.9 64.3Z" fill="#9c9e9c"/><path d="M146.2 60.7 L166.2 60.9 L162.5 63.5 L142.2 63.3Z" fill="#9c9e9c"/><path d="M184.2 61.0 L194.7 61.1 L191.4 63.7 L180.7 63.6Z" fill="#9c9e9c"/><path d="M196.1 61.1 L206.1 61.1 L203.0 63.7 L192.8 63.7Z" fill="#9c9e9c"/><path d="M224.1 61.3 L245.1 61.4 L242.4 64.0 L221.2 63.9Z" fill="#9c9e9c"/><path d="M247.1 61.4 L268.1 61.6 L265.7 64.2 L244.5 64.0Z" fill="#9c9e9c"/><path d="M286.0 61.7 L296.0 61.8 L294.0 64.4 L283.9 64.3Z" fill="#9c9e9c"/><path d="M297.4 61.8 L308.0 61.8 L306.2 64.4 L295.5 64.4Z" fill="#9c9e9c"/><path d="M326.0 62.0 L346.0 62.1 L344.6 64.7 L324.4 64.6Z" fill="#9c9e9c"/><path d="M245.4 59.8 L250.0 59.9 L244.1 65.7 L239.4 65.6Z" fill="#9c9e9c"/><path d="M346.0 62.1 L365.4 62.2 L364.3 64.8 L344.6 64.7Z" fill="#9c9e9c"/><path d="M382.9 62.4 L393.2 62.4 L392.5 65.0 L382.0 65.0Z" fill="#9c9e9c"/><path d="M394.5 62.4 L404.2 62.5 L403.7 65.1 L393.8 65.0Z" fill="#9c9e9c"/><path d="M421.7 62.6 L442.1 62.8 L442.0 65.4 L421.4 65.2Z" fill="#9c9e9c"/><path d="M444.0 62.8 L464.4 62.9 L464.7 65.5 L444.0 65.4Z" fill="#9c9e9c"/><path d="M481.9 63.0 L491.6 63.1 L492.2 65.7 L482.4 65.6Z" fill="#9c9e9c"/><path d="M493.0 63.1 L503.3 63.2 L504.0 65.8 L493.6 65.7Z" fill="#9c9e9c"/><path d="M520.8 63.3 L540.2 63.4 L541.4 66.0 L521.7 65.9Z" fill="#9c9e9c"/><path d="M440.8 61.1 L445.4 61.2 L445.3 67.0 L440.6 67.0Z" fill="#9c9e9c"/><path d="M540.2 63.4 L559.6 63.6 L561.1 66.2 L541.4 66.0Z" fill="#9c9e9c"/><path d="M577.0 63.7 L587.3 63.7 L589.1 66.4 L578.7 66.3Z" fill="#9c9e9c"/><path d="M588.6 63.8 L598.3 63.8 L600.3 66.4 L590.5 66.4Z" fill="#9c9e9c"/><path d="M615.8 63.9 L636.1 64.1 L638.6 66.7 L618.0 66.6Z" fill="#9c9e9c"/><path d="M638.1 64.1 L658.4 64.2 L661.2 66.9 L640.6 66.7Z" fill="#9c9e9c"/><path d="M675.9 64.3 L685.6 64.4 L688.7 67.0 L678.9 67.0Z" fill="#9c9e9c"/><path d="M686.9 64.4 L697.2 64.5 L700.5 67.1 L690.1 67.0Z" fill="#9c9e9c"/><path d="M714.6 64.6 L734.0 64.7 L737.8 67.4 L718.2 67.2Z" fill="#9c9e9c"/><path d="M633.3 62.5 L637.8 62.5 L643.6 68.4 L638.9 68.4Z" fill="#9c9e9c"/><path d="M734.0 64.7 L753.2 64.9 L757.2 67.5 L737.8 67.4Z" fill="#9c9e9c"/><path d="M770.4 65.0 L780.5 65.1 L784.9 67.7 L774.6 67.6Z" fill="#9c9e9c"/><path d="M781.9 65.1 L791.4 65.1 L796.0 67.8 L786.3 67.7Z" fill="#9c9e9c"/><path d="M808.6 65.2 L828.7 65.4 L833.8 68.0 L813.4 67.9Z" fill="#9c9e9c"/><path d="M830.6 65.4 L850.7 65.5 L856.1 68.2 L835.7 68.0Z" fill="#9c9e9c"/><path d="M868.0 65.6 L877.5 65.7 L883.2 68.4 L873.5 68.3Z" fill="#9c9e9c"/><path d="M878.9 65.7 L889.0 65.8 L894.8 68.4 L884.6 68.4Z" fill="#9c9e9c"/><path d="M906.2 65.9 L925.4 66.0 L931.7 68.7 L912.3 68.6Z" fill="#9c9e9c"/><text transform="translate(178.5 425.5) rotate(0.8) skewX(-16)" font-family="Liberation Mono" font-size="30"  fill="#a2a4a2" letter-spacing="0">1METER</text><text transform="translate(720.0 430.0) rotate(1.6) skewX(-10)" font-family="Liberation Mono" font-size="31.5"  fill="#a2a4a2" letter-spacing="0">1METER</text><text transform="translate(308.0 157.5) rotate(0.5) skewX(-25)" font-family="Liberation Mono" font-size="14.5"  fill="#a8aaa8" letter-spacing="0.2">1METER</text><text transform="translate(591.0 158.5) rotate(1) skewX(5)" font-family="Liberation Mono" font-size="14.5"  fill="#a8aaa8" letter-spacing="0.2">1METER</text><text transform="translate(26.0 155.5) rotate(0.3) skewX(-45)" font-family="Liberation Mono" font-size="15"  fill="#a8aaa8" letter-spacing="0.5">1METER</text><text transform="translate(354.0 61.0) rotate(0.5) skewX(-30)" font-family="Liberation Mono" font-size="7.5"  fill="#b0b2b0" letter-spacing="0.2">1METER</text><text transform="translate(541.0 61.5) rotate(0.5) skewX(5)" font-family="Liberation Mono" font-size="7.5"  fill="#b0b2b0" letter-spacing="0">1METER</text><text transform="translate(164.0 60.5) rotate(0.3) skewX(-50)" font-family="Liberation Mono" font-size="7.5"  fill="#b0b2b0" letter-spacing="0.6">1METER</text><text transform="translate(36.0 465.0) rotate(0.8) skewX(-22)" font-family="Liberation Mono" font-size="13.7" font-weight="bold" fill="#a9aba9" letter-spacing="0">[Prototype]</text><text transform="translate(623.0 471.5) rotate(1.4) skewX(-8)" font-family="Liberation Mono" font-size="13.7" font-weight="bold" fill="#a9aba9" letter-spacing="0">[Prototype]</text><text transform="translate(146.0 423.0) rotate(-61.6) skewX(0)" font-family="Liberation Mono" font-size="11.6" font-weight="bold" fill="#a9aba9" letter-spacing="0">[Prototype]</text><text transform="translate(689.0 428.0) rotate(-105) skewX(0)" font-family="Liberation Mono" font-size="11.4" font-weight="bold" fill="#a9aba9" letter-spacing="0">[Prototype]</text><text transform="translate(158.0 457.0) rotate(116.6) skewX(0)" font-family="Liberation Mono" font-size="15.5" font-weight="bold" fill="#a9aba9" letter-spacing="0">[Prototype]</text><text transform="translate(749.0 463.0) rotate(67) skewX(0)" font-family="Liberation Mono" font-size="15.5" font-weight="bold" fill="#a9aba9" letter-spacing="0">[Prototype]</text><text transform="translate(238.0 166.0) rotate(0.5) skewX(-25)" font-family="Liberation Mono" font-size="6.8" font-weight="bold" fill="#b2b4b2" letter-spacing="0">[Prototype]</text><text transform="translate(534.0 168.5) rotate(0.8) skewX(0)" font-family="Liberation Mono" font-size="6.8" font-weight="bold" fill="#b2b4b2" letter-spacing="0">[Prototype]</text><text transform="translate(286.0 158.0) rotate(-66) skewX(0)" font-family="Liberation Mono" font-size="5.2" font-weight="bold" fill="#b2b4b2" letter-spacing="0">[Prototype]</text><text transform="translate(584.0 158.0) rotate(-100) skewX(0)" font-family="Liberation Mono" font-size="5.2" font-weight="bold" fill="#b2b4b2" letter-spacing="0">[Prototype]</text><text transform="translate(291.0 171.0) rotate(112) skewX(0)" font-family="Liberation Mono" font-size="5.8" font-weight="bold" fill="#b2b4b2" letter-spacing="0">[Prototype]</text><text transform="translate(588.0 172.0) rotate(72) skewX(0)" font-family="Liberation Mono" font-size="5.8" font-weight="bold" fill="#b2b4b2" letter-spacing="0">[Prototype]</text><path d="M339.7 -78.0 L-790.7 522.0" stroke="#8f908f" stroke-width="0.9" opacity=".8"/><path d="M354.3 -78.0 L-616.1 522.0" stroke="#8f908f" stroke-width="0.9" opacity=".8"/><path d="M369.0 -78.0 L-441.5 522.0" stroke="#8f908f" stroke-width="0.9" opacity=".8"/><path d="M383.7 -78.0 L-267.0 522.0" stroke="#8f908f" stroke-width="0.9" opacity=".8"/><path d="M398.3 -78.0 L-92.4 522.0" stroke="#8f908f" stroke-width="0.9" opacity=".8"/><path d="M413.0 -78.0 L82.1 522.0" stroke="#8f908f" stroke-width="0.9" opacity=".8"/><path d="M427.6 -78.0 L256.7 522.0" stroke="#8f908f" stroke-width="0.9" opacity=".8"/><path d="M456.9 -78.0 L605.8 522.0" stroke="#8f908f" stroke-width="0.9" opacity=".8"/><path d="M471.6 -78.0 L780.4 522.0" stroke="#8f908f" stroke-width="0.9" opacity=".8"/><path d="M486.3 -78.0 L954.9 522.0" stroke="#8f908f" stroke-width="0.9" opacity=".8"/><path d="M500.9 -78.0 L1129.5 522.0" stroke="#8f908f" stroke-width="0.9" opacity=".8"/><path d="M515.6 -78.0 L1304.0 522.0" stroke="#8f908f" stroke-width="0.9" opacity=".8"/><path d="M530.2 -78.0 L1478.6 522.0" stroke="#8f908f" stroke-width="0.9" opacity=".8"/><path d="M442.3 -78.0 L431.2 522.0" stroke="#a9aaa9" stroke-width="2.2"/><path d="M442.6 -78.0 L431.5 522.0" stroke="#e9e9e9" stroke-width="0.8"/><path d="M-5 442.2 L880 447.7" stroke="#8f908f" stroke-width="0.9" opacity=".8"/><path d="M-5 322.6 L880 328.1" stroke="#8f908f" stroke-width="0.9" opacity=".8"/><path d="M-5 243.9 L880 249.4" stroke="#8f908f" stroke-width="0.9" opacity=".8"/><path d="M-5 188.1 L437 190.9" stroke="#8f908f" stroke-width="0.9" opacity=".8"/><path d="M-5 146.6 L880 152.1" stroke="#8f908f" stroke-width="0.9" opacity=".8"/><path d="M-5 114.5 L880 120.0" stroke="#8f908f" stroke-width="0.9" opacity=".8"/><path d="M-5 88.9 L880 94.3" stroke="#8f908f" stroke-width="0.9" opacity=".8"/><path d="M-5 68.0 L880 73.4" stroke="#8f908f" stroke-width="0.9" opacity=".8"/><path d="M-5 50.6 L880 56.1" stroke="#8f908f" stroke-width="0.9" opacity=".8"/><path d="M-5 35.9 L880 41.4" stroke="#8f908f" stroke-width="0.9" opacity=".8"/><path d="M0 0H875V55.3 L0 52.3 Z" fill="#e2e3e2"/><path d="M0 53.3 L875 56.3" stroke="#f4f4f4" stroke-width="2"/><path d="M-106.6 0L-71.8 53.5" stroke="#868886" stroke-width="1" opacity=".7"/><path d="M-87.1 0L-53.5 53.5" stroke="#c6c7c6" stroke-width="1" opacity=".8"/><path d="M-67.5 0L-35.2 53.5" stroke="#868886" stroke-width="1" opacity=".7"/><path d="M-48.0 0L-16.9 53.5" stroke="#c6c7c6" stroke-width="1" opacity=".8"/><path d="M-28.5 0L1.4 53.5" stroke="#868886" stroke-width="1" opacity=".7"/><path d="M-9.0 0L19.7 53.5" stroke="#c6c7c6" stroke-width="1" opacity=".8"/><path d="M10.6 0L38.0 53.5" stroke="#868886" stroke-width="1" opacity=".7"/><path d="M30.1 0L56.3 53.5" stroke="#c6c7c6" stroke-width="1" opacity=".8"/><path d="M49.7 0L74.6 53.5" stroke="#868886" stroke-width="1" opacity=".7"/><path d="M69.2 0L92.9 53.5" stroke="#c6c7c6" stroke-width="1" opacity=".8"/><path d="M88.7 0L111.2 53.5" stroke="#868886" stroke-width="1" opacity=".7"/><path d="M108.2 0L129.5 53.5" stroke="#c6c7c6" stroke-width="1" opacity=".8"/><path d="M127.8 0L147.8 53.5" stroke="#868886" stroke-width="1" opacity=".7"/><path d="M147.3 0L166.1 53.5" stroke="#c6c7c6" stroke-width="1" opacity=".8"/><path d="M166.8 0L184.4 53.5" stroke="#868886" stroke-width="1" opacity=".7"/><path d="M186.3 0L202.7 53.5" stroke="#c6c7c6" stroke-width="1" opacity=".8"/><path d="M205.9 0L221.0 53.5" stroke="#868886" stroke-width="1" opacity=".7"/><path d="M225.4 0L239.3 53.5" stroke="#c6c7c6" stroke-width="1" opacity=".8"/><path d="M244.9 0L257.6 53.5" stroke="#868886" stroke-width="1" opacity=".7"/><path d="M264.4 0L275.9 53.5" stroke="#c6c7c6" stroke-width="1" opacity=".8"/><path d="M284.0 0L294.2 53.5" stroke="#868886" stroke-width="1" opacity=".7"/><path d="M303.5 0L312.5 53.5" stroke="#c6c7c6" stroke-width="1" opacity=".8"/><path d="M323.1 0L330.8 53.5" stroke="#868886" stroke-width="1" opacity=".7"/><path d="M342.6 0L349.1 53.5" stroke="#c6c7c6" stroke-width="1" opacity=".8"/><path d="M362.1 0L367.4 53.5" stroke="#868886" stroke-width="1" opacity=".7"/><path d="M381.6 0L385.7 53.5" stroke="#c6c7c6" stroke-width="1" opacity=".8"/><path d="M401.2 0L404.0 53.5" stroke="#868886" stroke-width="1" opacity=".7"/><path d="M420.7 0L422.3 53.5" stroke="#c6c7c6" stroke-width="1" opacity=".8"/><path d="M440.2 0L440.6 53.5" stroke="#868886" stroke-width="1" opacity=".7"/><path d="M459.7 0L458.9 53.5" stroke="#c6c7c6" stroke-width="1" opacity=".8"/><path d="M479.3 0L477.2 53.5" stroke="#868886" stroke-width="1" opacity=".7"/><path d="M498.8 0L495.5 53.5" stroke="#c6c7c6" stroke-width="1" opacity=".8"/><path d="M518.4 0L513.8 53.5" stroke="#868886" stroke-width="1" opacity=".7"/><path d="M537.9 0L532.1 53.5" stroke="#c6c7c6" stroke-width="1" opacity=".8"/><path d="M557.4 0L550.4 53.5" stroke="#868886" stroke-width="1" opacity=".7"/><path d="M576.9 0L568.7 53.5" stroke="#c6c7c6" stroke-width="1" opacity=".8"/><path d="M596.5 0L587.0 53.5" stroke="#868886" stroke-width="1" opacity=".7"/><path d="M616.0 0L605.3 53.5" stroke="#c6c7c6" stroke-width="1" opacity=".8"/><path d="M635.5 0L623.6 53.5" stroke="#868886" stroke-width="1" opacity=".7"/><path d="M655.0 0L641.9 53.5" stroke="#c6c7c6" stroke-width="1" opacity=".8"/><path d="M674.6 0L660.2 53.5" stroke="#868886" stroke-width="1" opacity=".7"/><path d="M694.1 0L678.5 53.5" stroke="#c6c7c6" stroke-width="1" opacity=".8"/><path d="M713.6 0L696.8 53.5" stroke="#868886" stroke-width="1" opacity=".7"/><path d="M733.1 0L715.1 53.5" stroke="#c6c7c6" stroke-width="1" opacity=".8"/><path d="M752.7 0L733.4 53.5" stroke="#868886" stroke-width="1" opacity=".7"/><path d="M772.2 0L751.7 53.5" stroke="#c6c7c6" stroke-width="1" opacity=".8"/><path d="M791.8 0L770.0 53.5" stroke="#868886" stroke-width="1" opacity=".7"/><path d="M811.3 0L788.3 53.5" stroke="#c6c7c6" stroke-width="1" opacity=".8"/><path d="M830.8 0L806.6 53.5" stroke="#868886" stroke-width="1" opacity=".7"/><path d="M850.3 0L824.9 53.5" stroke="#c6c7c6" stroke-width="1" opacity=".8"/><path d="M869.9 0L843.2 53.5" stroke="#868886" stroke-width="1" opacity=".7"/><path d="M889.4 0L861.5 53.5" stroke="#c6c7c6" stroke-width="1" opacity=".8"/><path d="M908.9 0L879.8 53.5" stroke="#868886" stroke-width="1" opacity=".7"/><path d="M928.4 0L898.1 53.5" stroke="#c6c7c6" stroke-width="1" opacity=".8"/><path d="M948.0 0L916.4 53.5" stroke="#868886" stroke-width="1" opacity=".7"/><path d="M967.5 0L934.7 53.5" stroke="#c6c7c6" stroke-width="1" opacity=".8"/><path d="M0 11.8L875 13.2" stroke="#7f817f" stroke-width="1.5" stroke-dasharray="16 2 4 2 9 2" opacity=".8"/><path d="M0 3 L875 4.4" stroke="#b4b5b4" stroke-width="0.9" opacity="0.5"/><path d="M0 26 L875 27.4" stroke="#a2a3a2" stroke-width="0.9" opacity="0.6"/><path d="M0 39.5 L875 40.9" stroke="#a2a3a2" stroke-width="0.9" opacity="0.55"/><path d="M0 19 L875 20.4" stroke="#c9cac9" stroke-width="0.9" opacity="0.5"/><path d="M0 33 L875 34.4" stroke="#c9cac9" stroke-width="0.9" opacity="0.5"/><path d="M0 46.5 L875 47.9" stroke="#c9cac9" stroke-width="0.9" opacity="0.5"/><path d="M738 -2H768L752 54.5 H696.3Z" fill="#8696af"/><path d="M725.1 0L707.5 53.5" stroke="#6b7a92" stroke-width="0.9" opacity=".6"/><path d="M744.6 0L725.8 53.5" stroke="#6b7a92" stroke-width="0.9" opacity=".6"/><path d="M764.1 0L744.1 53.5" stroke="#6b7a92" stroke-width="0.9" opacity=".6"/><path d="M738 13L764 13.3" stroke="#5f6d84" stroke-width="1.4" opacity=".8"/><path d="M694.5 52L752 52L885 133V192Z" fill="rgb(30,76,146)" fill-opacity=".62" filter="url(#sblur)"/><path d="M727.8 55.4L875 164.7" stroke="#4e6b96" stroke-width="5" opacity=".55"/><defs><linearGradient id="rwg" x1="0" y1="0" x2="1" y2="1"><stop offset="0" stop-color="#8292ab"/><stop offset="1" stop-color="#76869f"/></linearGradient></defs><path d="M764.5 -2H880V133.5L750.5 54 Z" fill="url(#rwg)"/><path d="M738 -2L696.3 53.5" stroke="#b9c0cc" stroke-width="2.5" opacity=".55" filter="url(#sblur)"/><path d="M790 0 L768 64" stroke="#57657c" stroke-width="1" opacity=".75"/><path d="M828 0 L791 78" stroke="#57657c" stroke-width="1" opacity=".75"/><path d="M866 0 L815 93" stroke="#57657c" stroke-width="1" opacity=".75"/><path d="M905 0 L840 108" stroke="#57657c" stroke-width="1" opacity=".75"/><path d="M948 0 L864 123" stroke="#57657c" stroke-width="1" opacity=".75"/><path d="M995 0 L890 139" stroke="#57657c" stroke-width="1" opacity=".75"/><path d="M765 12L875 61" stroke="#57657c" stroke-width="1.6" opacity=".8"/><path d="M757 33L875 97" stroke="#57657c" stroke-width="0.9" opacity=".55"/><path d="M770 -1L875 30" stroke="#57657c" stroke-width="0.9" opacity=".45"/></g></svg>
<div class="a" style="left:875.0px;top:73.0px;width:2.0px;height:560.0px;background:#1a1a1a;"></div>
<div class="a" style="left:0.0px;top:632.0px;width:877.0px;height:2.0px;background:#1a1a1a;"></div>
<div class="a" style="left:2.0px;top:120.0px;width:43.0px;height:146.5px;background:#252525;border-radius:4px;border:1px solid #1b1b1b"></div>
<div class="a" style="left:16.5px;top:126.0px;width:15.5px;height:1.0px;background:#5a5a5a;"></div>
<div class="a" style="left:16.5px;top:129.0px;width:15.5px;height:1.0px;background:#5a5a5a;"></div>
<div class="a" style="left:5.0px;top:138.0px;width:37.0px;height:20.0px;background:#4a4a4a;border-radius:3px 3px 0 0"></div>
<div class="a" style="left:5.0px;top:159.0px;width:37.0px;height:20.0px;background:#46607c;border-radius:0"></div>
<div class="a" style="left:5.0px;top:180.0px;width:37.0px;height:20.0px;background:#4a4a4a;border-radius:0"></div>
<div class="a" style="left:5.0px;top:201.0px;width:37.0px;height:20.0px;background:#4a4a4a;border-radius:0"></div>
<div class="a" style="left:5.0px;top:222.0px;width:37.0px;height:20.0px;background:#4a4a4a;border-radius:0"></div>
<div class="a" style="left:5.0px;top:243.0px;width:37.0px;height:20.0px;background:#4a4a4a;border-radius:0 0 3px 3px"></div>
<svg style="left:15.5px;top:140.0px;" width="16" height="16" viewBox="0 0 16 16"><g fill="#c4c4c4"><rect x="4.200" y="1.800" width="2" height="8" rx="1" transform="rotate(-10 5.200 9)"/><rect x="6.800" y=".5" width="2" height="9" rx="1"/><rect x="9.400" y="1.300" width="2" height="8.500" rx="1" transform="rotate(8 10.400 9)"/><rect x="11.900" y="3.300" width="1.900" height="7" rx=".95" transform="rotate(16 12.800 9)"/><path d="M4 8H13.500V11C13.500 13.500 12 15.500 9.500 15.500H8C6 15.500 5 14.500 3.800 12.800L.8 8.600C.3 7.600 1.600 6.800 2.500 7.700L4 9.500Z"/></g></svg>
<svg style="left:16.0px;top:161.5px;" width="15" height="15" viewBox="0 0 15 15"><path d="M7.500 1V14M1 7.500H14" stroke="#fff" stroke-width="1.1" stroke-dasharray="3.5 2 2 2 3.5 0"/><path d="M5.300 3L7.500 .6 9.700 3M5.300 12L7.500 14.400 9.700 12M3 5.300L.6 7.500 3 9.700M12 5.300L14.400 7.500 12 9.700" fill="none" stroke="#fff" stroke-width="1.1"/></svg>
<svg style="left:16.5px;top:183.0px;" width="14" height="14" viewBox="0 0 14 14"><path d="M12.500 8.500A5.600 5.600 0 0 1 3 11.200M1.500 5.500A5.600 5.600 0 0 1 11 2.800" fill="none" stroke="#c4c4c4" stroke-width="1.1"/><path d="M11.300 .3V3.200H8.400M2.700 13.700V10.800H5.600" fill="none" stroke="#c4c4c4" stroke-width="1.1"/></svg>
<svg style="left:17.0px;top:204.5px;" width="13" height="13" viewBox="0 0 13 13"><rect x=".5" y=".5" width="12" height="12" fill="none" stroke="#c4c4c4" stroke-width="1"/><path d="M.5 8.500H4.500V12.500M5.500 7.500L10 3M6.500 2.800H10.200V6.500" fill="none" stroke="#c4c4c4" stroke-width="1"/></svg>
<svg style="left:17.0px;top:225.5px;" width="13" height="13" viewBox="0 0 13 13"><path d="M1.500 3V10M11.500 3V10M3 1.500H10M3 11.500H10" stroke="#c4c4c4" stroke-width="1"/><rect width="3" height="3" fill="#c4c4c4"/><rect x="10" width="3" height="3" fill="#c4c4c4"/><rect y="10" width="3" height="3" fill="#c4c4c4"/><rect x="10" y="10" width="3" height="3" fill="#c4c4c4"/></svg>
<svg style="left:16.0px;top:245.5px;" width="15" height="15" viewBox="0 0 15 15"><circle cx="7.500" cy="7.500" r="5.500" fill="none" stroke="#c4c4c4" stroke-width="1" stroke-dasharray="6 2.600"/><path d="M7.500 2.500V12.500M2.500 7.500H12.500" stroke="#c4c4c4" stroke-width="1"/><path d="M6 4L7.500 2.300 9 4M6 11L7.500 12.700 9 11M4 6L2.300 7.500 4 9M11 6L12.700 7.500 11 9" fill="none" stroke="#c4c4c4" stroke-width="1"/><path d="M0 15V11.500L3.500 15Z" fill="#c4c4c4"/><path d="M15 0H11.500L15 3.500Z" fill="#c4c4c4"/></svg>
<div class="a" style="left:768.0px;top:126.0px;width:16.0px;height:1.0px;background:#4e5a6c;"></div>
<div class="a" style="left:768.0px;top:129.0px;width:16.0px;height:1.0px;background:#4e5a6c;"></div>
<svg style="left:791.0px;top:116.0px;" width="64" height="84" viewBox="0 0 64 84"><defs><linearGradient id="gg" x1="0" x2="1"><stop offset="0" stop-color="#6dc043"/><stop offset=".5" stop-color="#9be070"/><stop offset="1" stop-color="#5fae3a"/></linearGradient><linearGradient id="gr" y1="0" y2="1" x2="0"><stop offset="0" stop-color="#f0695c"/><stop offset="1" stop-color="#d9473c"/></linearGradient><linearGradient id="gw" y1="0" y2="1" x2="0"><stop offset="0" stop-color="#f4f4f4"/><stop offset="1" stop-color="#c9c9c9"/></linearGradient><linearGradient id="gd" x1="0" x2="1"><stop offset="0" stop-color="#8a8a8a"/><stop offset=".5" stop-color="#b5b5b5"/><stop offset="1" stop-color="#8a8a8a"/></linearGradient></defs><path d="M22 26.500L29.600 26.500 25.800 46Z" fill="#3d62d8"/><path d="M21.500 27.500C21.500 25 36.500 25 36.500 27.500L29.400 45.500C29.200 46.500 28.800 46.500 28.600 45.500Z" fill="url(#gg)"/><rect x="22.300" y="45" width="14" height="16.800" rx="1.500" fill="#e6e6e8"/><rect x="22.300" y="45" width="14" height="8" rx="1.500" fill="#f0f0f2"/><path d="M38.500 53.500L57.500 48.200C59 48 59 59 57.500 59.200Z" fill="url(#gr)"/><path d="M20.500 53.500L1.500 47.600C0 47.400 0 59.600 1.500 59.400Z" fill="url(#gw)"/><path d="M29 62L37.300 77.500C37.300 82 20.700 82 20.700 77.500Z" fill="url(#gd)"/><ellipse cx="29" cy="78" rx="8.300" ry="3.400" fill="#d6d6d6"/></svg>
<div class="t" style="left:816.0px;top:126.1px;font-size:13.0px;font-weight:bold;color:#fff;">y</div>
<div class="t" style="left:850.5px;top:161.6px;font-size:13.0px;font-weight:bold;color:#fff;">x</div>
<svg style="left:847.5px;top:134.0px;" width="9" height="9" viewBox="0 0 9 9"><rect x=".2" y="4" width="8.600" height="5" fill="#e3e6ea"/><path d="M5.300 4V2.600a2 2 0 0 0-4 0" fill="none" stroke="#e3e6ea" stroke-width="1.100"/></svg>
<svg style="left:792.5px;top:214.5px;" width="11" height="11" viewBox="0 0 11 11"><path d="M10 .8L1 5.500 10 10.200M1 5.500H10" fill="none" stroke="#ccd3dd" stroke-width="1"/></svg>
<div class="t" style="left:806.5px;top:213.1px;font-size:12.3px;letter-spacing:0.374px;color:#ccd3dd;">Persp</div>
<!-- game -->
<div class="a" style="left:0.0px;top:634.0px;width:875.0px;height:19.0px;background:#282828;"></div>
<div class="a" style="left:88.0px;top:634.0px;width:73.5px;height:19.0px;background:#3c3c3c;border-radius:3px 3px 0 0"></div>
<svg style="left:7.0px;top:638.0px;" width="11" height="11" viewBox="0 0 11 11"><rect x=".5" y=".5" width="10" height="10" rx="1" fill="#c4c4c4"/><path d="M2 3H9M2 5.500H9M2 8H9" stroke="#282828" stroke-width="1"/></svg>
<div class="t" style="left:23.0px;top:636.6px;font-size:12.3px;letter-spacing:0.124px;color:#c4c4c4;">Console</div>
<svg style="left:94.0px;top:639.5px;" width="14" height="8" viewBox="0 0 14 8"><path d="M3.500 .3H10.500A3.500 3.700 0 0 1 10.500 7.700 3.500 3.500 0 0 1 8 6.500H6A3.500 3.500 0 0 1 3.500 7.700 3.500 3.700 0 0 1 3.500 .3Z" fill="#c4c4c4"/><path d="M2 4H5M3.500 2.500V5.500" stroke="#3c3c3c" stroke-width="1"/><circle cx="9.500" cy="3" r=".8" fill="#3c3c3c"/><circle cx="11" cy="5" r=".8" fill="#3c3c3c"/></svg>
<div class="t" style="left:111.0px;top:636.6px;font-size:12.3px;letter-spacing:0.002px;color:#d2d2d2;">Game</div>
<svg style="left:171.0px;top:638.5px;" width="11" height="11" viewBox="0 0 11 11"><circle cx="5.500" cy="5.500" r="5.500" fill="#c4c4c4"/><path d="M5.500 2V5.800H8.800" fill="none" stroke="#282828" stroke-width="1.300"/></svg>
<div class="t" style="left:187.0px;top:636.6px;font-size:12.3px;letter-spacing:0.201px;color:#c4c4c4;">Animation</div>
<svg style="left:860.5px;top:638.0px;" width="3" height="12" viewBox="0 0 3 12"><circle cx="1.5" cy="1.5" r="1.2" fill="#c4c4c4"/><circle cx="1.5" cy="6" r="1.2" fill="#c4c4c4"/><circle cx="1.5" cy="10.5" r="1.2" fill="#c4c4c4"/></svg>
<div class="a" style="left:0.0px;top:653.0px;width:875.0px;height:21.0px;background:#3c3c3c;"></div>
<div class="a" style="left:0.0px;top:673.0px;width:875.0px;height:1.0px;background:#232323;"></div>
<div class="a" style="left:89.5px;top:653.0px;width:1.0px;height:20.0px;background:#242424;"></div>
<div class="a" style="left:175.5px;top:653.0px;width:1.0px;height:20.0px;background:#242424;"></div>
<div class="a" style="left:337.0px;top:653.0px;width:1.0px;height:20.0px;background:#242424;"></div>
<div class="a" style="left:576.5px;top:653.0px;width:1.0px;height:20.0px;background:#242424;"></div>
<div class="a" style="left:687.5px;top:653.0px;width:1.0px;height:20.0px;background:#242424;"></div>
<div class="a" style="left:712.0px;top:653.0px;width:1.0px;height:20.0px;background:#242424;"></div>
<div class="a" style="left:738.5px;top:653.0px;width:1.0px;height:20.0px;background:#242424;"></div>
<div class="a" style="left:765.0px;top:653.0px;width:1.0px;height:20.0px;background:#242424;"></div>
<div class="a" style="left:805.0px;top:653.0px;width:1.0px;height:20.0px;background:#242424;"></div>
<div class="a" style="left:857.5px;top:653.0px;width:1.0px;height:20.0px;background:#242424;"></div>
<div class="t" style="left:4.0px;top:655.6px;font-size:12.3px;letter-spacing:0.127px;color:#c4c4c4;">Game</div>
<svg style="left:77.5px;top:661.2px;" width="8" height="4.5" viewBox="0 0 8 4.5"><path d="M0 0H8 L4 4.5 Z" fill="#c4c4c4"/></svg>
<div class="t" style="left:100.0px;top:655.6px;font-size:12.3px;letter-spacing:-0.065px;color:#c4c4c4;">Display 1</div>
<svg style="left:163.5px;top:661.2px;" width="8" height="4.5" viewBox="0 0 8 4.5"><path d="M0 0H8 L4 4.5 Z" fill="#c4c4c4"/></svg>
<div class="t" style="left:180.0px;top:655.6px;font-size:12.3px;letter-spacing:0.215px;color:#c4c4c4;">Free Aspect</div>
<svg style="left:323.5px;top:661.2px;" width="8" height="4.5" viewBox="0 0 8 4.5"><path d="M0 0H8 L4 4.5 Z" fill="#c4c4c4"/></svg>
<div class="t" style="left:343.0px;top:655.6px;font-size:12.3px;letter-spacing:-0.054px;color:#c4c4c4;">Scale</div>
<div class="a" style="left:388.0px;top:663.0px;width:141.0px;height:1.5px;background:#5e5e5e;"></div>
<div class="a" style="left:381.500px;top:658.500px;width:10px;height:10px;border-radius:5px;background:#999"></div>
<div class="t" style="left:535.0px;top:655.6px;font-size:12.3px;letter-spacing:-0.495px;color:#c4c4c4;">1x</div>
<div class="t" style="left:581.0px;top:655.6px;font-size:12.3px;letter-spacing:0.123px;color:#c4c4c4;">Play Focused</div>
<svg style="left:674.5px;top:661.2px;" width="8" height="4.5" viewBox="0 0 8 4.5"><path d="M0 0H8 L4 4.5 Z" fill="#c4c4c4"/></svg>
<svg style="left:693.0px;top:656.0px;" width="15" height="14" viewBox="0 0 15 14"><path d="M4.300 1L5.800 3M10.700 1L9.200 3M.8 5L3.600 6.500M14.200 5L11.400 6.500M0 9H3.200M15 9H11.800M1.200 13.500L3.800 11.500M13.800 13.500L11.200 11.500" stroke="#c4c4c4" stroke-width="1.100" fill="none"/><path d="M7.500 2.300C10.200 2.300 11.800 5 11.800 8.500 11.800 11.500 10 13.700 7.500 13.700 5 13.700 3.200 11.500 3.200 8.500 3.200 5 4.800 2.300 7.500 2.300Z" fill="#c4c4c4"/><rect x="4.600" y="6.200" width="5.800" height="4.200" fill="#3c3c3c"/><rect x="5.600" y="7.200" width="3.800" height="2.200" fill="#c4c4c4"/></svg>
<svg style="left:719.0px;top:657.5px;" width="13" height="11" viewBox="0 0 13 11"><path d="M0 3.500H2.500L5.500 .8V10.200L2.500 7.500H0Z" fill="#c4c4c4"/><path d="M7.500 3.500a2.500 2.500 0 0 1 0 4M9 1.800a4.800 4.800 0 0 1 0 7.400" fill="none" stroke="#c4c4c4" stroke-width="1.100"/></svg>
<svg style="left:745.0px;top:658.0px;" width="15" height="11" viewBox="0 0 15 11"><rect x=".6" y=".6" width="13.800" height="9.800" fill="none" stroke="#c4c4c4" stroke-width="1.200"/><path d="M.6 3.800H14.400M.6 7H14.400M4 .6V7M7.500 .6V7M11 .6V7M3 7V10.400M12 7V10.400" stroke="#c4c4c4" stroke-width="1"/></svg>
<div class="t" style="left:771.0px;top:655.6px;font-size:12.3px;letter-spacing:0.194px;color:#c4c4c4;">Stats</div>
<div class="t" style="left:809.0px;top:655.6px;font-size:12.3px;letter-spacing:0.052px;color:#c4c4c4;">Gizmos</div>
<svg style="left:862.0px;top:661.2px;" width="8" height="4.5" viewBox="0 0 8 4.5"><path d="M0 0H8 L4 4.5 Z" fill="#c4c4c4"/></svg>
<svg style="left:0.0px;top:674.0px;" width="875" height="344" viewBox="0 0 875 344"><defs><clipPath id="gcl"><rect width="875" height="344"/></clipPath><clipPath id="gfloor"><path d="M90.700 0H697.600L875 317V344H0V124Z"/></clipPath><clipPath id="gmid"><path d="M246.300 0H564.800L655.500 344H111.800Z"/></clipPath></defs><g clip-path="url(#gcl)"><rect width="875" height="344" fill="#6b625d"/><path d="M90.700 0H697.600L875 317V344H0V124Z" fill="#f2f2f2"/><g clip-path="url(#gmid)"><path d="M106.5 0L-126.9 344" stroke="#e3e4e3" stroke-width="1.2"/><path d="M125.9 0L-93.7 344" stroke="#e3e4e3" stroke-width="1.2"/><path d="M145.4 0L-60.6 344" stroke="#e3e4e3" stroke-width="1.2"/><path d="M184.4 0L5.6 344" stroke="#e3e4e3" stroke-width="1.2"/><path d="M203.9 0L38.8 344" stroke="#e3e4e3" stroke-width="1.2"/><path d="M223.3 0L71.9 344" stroke="#e3e4e3" stroke-width="1.2"/><path d="M262.3 0L138.2 344" stroke="#e3e4e3" stroke-width="1.2"/><path d="M281.8 0L171.3 344" stroke="#e3e4e3" stroke-width="1.2"/><path d="M301.3 0L204.4 344" stroke="#e3e4e3" stroke-width="1.2"/><path d="M340.2 0L270.7 344" stroke="#e3e4e3" stroke-width="1.2"/><path d="M359.7 0L303.8 344" stroke="#e3e4e3" stroke-width="1.2"/><path d="M379.2 0L336.9 344" stroke="#e3e4e3" stroke-width="1.2"/><path d="M418.1 0L403.2 344" stroke="#e3e4e3" stroke-width="1.2"/><path d="M437.6 0L436.3 344" stroke="#e3e4e3" stroke-width="1.2"/><path d="M457.1 0L469.4 344" stroke="#e3e4e3" stroke-width="1.2"/><path d="M496.1 0L535.7 344" stroke="#e3e4e3" stroke-width="1.2"/><path d="M515.6 0L568.8 344" stroke="#e3e4e3" stroke-width="1.2"/><path d="M535.0 0L602.0 344" stroke="#e3e4e3" stroke-width="1.2"/><path d="M0 343.9H875" stroke="#e3e4e3" stroke-width="1.2"/><path d="M0 308.5H875" stroke="#e3e4e3" stroke-width="1.2"/><path d="M0 276.0H875" stroke="#e3e4e3" stroke-width="1.2"/><path d="M0 218.3H875" stroke="#e3e4e3" stroke-width="1.2"/><path d="M0 192.6H875" stroke="#e3e4e3" stroke-width="1.2"/><path d="M0 168.7H875" stroke="#e3e4e3" stroke-width="1.2"/><path d="M0 125.6H875" stroke="#e3e4e3" stroke-width="1.2"/><path d="M0 106.1H875" stroke="#e3e4e3" stroke-width="1.2"/><path d="M0 87.8H875" stroke="#e3e4e3" stroke-width="1.2"/><path d="M0 54.3H875" stroke="#e3e4e3" stroke-width="1.2"/><path d="M0 39.0H875" stroke="#e3e4e3" stroke-width="1.2"/><path d="M0 24.5H875" stroke="#e3e4e3" stroke-width="1.2"/><path d="M0 -2.2H875" stroke="#e3e4e3" stroke-width="1.2"/><path d="M0 -14.5H875" stroke="#e3e4e3" stroke-width="1.2"/><path d="M0 -26.3H875" stroke="#e3e4e3" stroke-width="1.2"/><path d="M87.0 0L-160.0 344" stroke="#a6a8a6" stroke-width="2.300"/><rect x="-149.4" y="324.5" width="5" height="2.600" fill="#a6a8a6"/><rect x="-125.1" y="290.6" width="5" height="2.600" fill="#a6a8a6"/><rect x="-102.7" y="259.4" width="5" height="2.600" fill="#a6a8a6"/><rect x="-82.0" y="230.6" width="5" height="2.600" fill="#a6a8a6"/><rect x="-62.9" y="203.9" width="5" height="2.600" fill="#a6a8a6"/><rect x="-45.1" y="179.2" width="5" height="2.600" fill="#a6a8a6"/><rect x="-28.5" y="156.1" width="5" height="2.600" fill="#a6a8a6"/><rect x="-13.0" y="134.5" width="5" height="2.600" fill="#a6a8a6"/><rect x="1.4" y="114.4" width="5" height="2.600" fill="#a6a8a6"/><rect x="15.0" y="95.5" width="5" height="2.600" fill="#a6a8a6"/><rect x="27.7" y="77.7" width="5" height="2.600" fill="#a6a8a6"/><rect x="39.7" y="61.0" width="5" height="2.600" fill="#a6a8a6"/><rect x="51.1" y="45.2" width="5" height="2.600" fill="#a6a8a6"/><rect x="61.8" y="30.4" width="5" height="2.600" fill="#a6a8a6"/><rect x="71.9" y="16.3" width="5" height="2.600" fill="#a6a8a6"/><rect x="81.5" y="2.9" width="5" height="2.600" fill="#a6a8a6"/><path d="M164.9 0L-27.5 344" stroke="#a6a8a6" stroke-width="2.300"/><rect x="-19.8" y="324.5" width="5" height="2.600" fill="#a6a8a6"/><rect x="-0.8" y="290.6" width="5" height="2.600" fill="#a6a8a6"/><rect x="16.6" y="259.4" width="5" height="2.600" fill="#a6a8a6"/><rect x="32.7" y="230.6" width="5" height="2.600" fill="#a6a8a6"/><rect x="47.6" y="203.9" width="5" height="2.600" fill="#a6a8a6"/><rect x="61.5" y="179.2" width="5" height="2.600" fill="#a6a8a6"/><rect x="74.4" y="156.1" width="5" height="2.600" fill="#a6a8a6"/><rect x="86.4" y="134.5" width="5" height="2.600" fill="#a6a8a6"/><rect x="97.7" y="114.4" width="5" height="2.600" fill="#a6a8a6"/><rect x="108.3" y="95.5" width="5" height="2.600" fill="#a6a8a6"/><rect x="118.2" y="77.7" width="5" height="2.600" fill="#a6a8a6"/><rect x="127.6" y="61.0" width="5" height="2.600" fill="#a6a8a6"/><rect x="136.4" y="45.2" width="5" height="2.600" fill="#a6a8a6"/><rect x="144.7" y="30.4" width="5" height="2.600" fill="#a6a8a6"/><rect x="152.6" y="16.3" width="5" height="2.600" fill="#a6a8a6"/><rect x="160.0" y="2.9" width="5" height="2.600" fill="#a6a8a6"/><path d="M242.8 0L105.0 344" stroke="#a6a8a6" stroke-width="2.300"/><rect x="109.8" y="324.5" width="5" height="2.600" fill="#a6a8a6"/><rect x="123.4" y="290.6" width="5" height="2.600" fill="#a6a8a6"/><rect x="135.9" y="259.4" width="5" height="2.600" fill="#a6a8a6"/><rect x="147.4" y="230.6" width="5" height="2.600" fill="#a6a8a6"/><rect x="158.1" y="203.9" width="5" height="2.600" fill="#a6a8a6"/><rect x="168.0" y="179.2" width="5" height="2.600" fill="#a6a8a6"/><rect x="177.3" y="156.1" width="5" height="2.600" fill="#a6a8a6"/><rect x="185.9" y="134.5" width="5" height="2.600" fill="#a6a8a6"/><rect x="194.0" y="114.4" width="5" height="2.600" fill="#a6a8a6"/><rect x="201.6" y="95.5" width="5" height="2.600" fill="#a6a8a6"/><rect x="208.7" y="77.7" width="5" height="2.600" fill="#a6a8a6"/><rect x="215.4" y="61.0" width="5" height="2.600" fill="#a6a8a6"/><rect x="221.7" y="45.2" width="5" height="2.600" fill="#a6a8a6"/><rect x="227.6" y="30.4" width="5" height="2.600" fill="#a6a8a6"/><rect x="233.3" y="16.3" width="5" height="2.600" fill="#a6a8a6"/><rect x="238.6" y="2.9" width="5" height="2.600" fill="#a6a8a6"/><path d="M320.7 0L237.5 344" stroke="#a6a8a6" stroke-width="2.300"/><rect x="239.5" y="324.5" width="5" height="2.600" fill="#a6a8a6"/><rect x="247.6" y="290.6" width="5" height="2.600" fill="#a6a8a6"/><rect x="255.2" y="259.4" width="5" height="2.600" fill="#a6a8a6"/><rect x="262.2" y="230.6" width="5" height="2.600" fill="#a6a8a6"/><rect x="268.6" y="203.9" width="5" height="2.600" fill="#a6a8a6"/><rect x="274.6" y="179.2" width="5" height="2.600" fill="#a6a8a6"/><rect x="280.2" y="156.1" width="5" height="2.600" fill="#a6a8a6"/><rect x="285.4" y="134.5" width="5" height="2.600" fill="#a6a8a6"/><rect x="290.3" y="114.4" width="5" height="2.600" fill="#a6a8a6"/><rect x="294.8" y="95.5" width="5" height="2.600" fill="#a6a8a6"/><rect x="299.1" y="77.7" width="5" height="2.600" fill="#a6a8a6"/><rect x="303.2" y="61.0" width="5" height="2.600" fill="#a6a8a6"/><rect x="307.0" y="45.2" width="5" height="2.600" fill="#a6a8a6"/><rect x="310.6" y="30.4" width="5" height="2.600" fill="#a6a8a6"/><rect x="314.0" y="16.3" width="5" height="2.600" fill="#a6a8a6"/><rect x="317.2" y="2.9" width="5" height="2.600" fill="#a6a8a6"/><path d="M398.7 0L370.1 344" stroke="#a6a8a6" stroke-width="2.300"/><rect x="369.1" y="324.5" width="5" height="2.600" fill="#a6a8a6"/><rect x="371.9" y="290.6" width="5" height="2.600" fill="#a6a8a6"/><rect x="374.5" y="259.4" width="5" height="2.600" fill="#a6a8a6"/><rect x="376.9" y="230.6" width="5" height="2.600" fill="#a6a8a6"/><rect x="379.1" y="203.9" width="5" height="2.600" fill="#a6a8a6"/><rect x="381.2" y="179.2" width="5" height="2.600" fill="#a6a8a6"/><rect x="383.1" y="156.1" width="5" height="2.600" fill="#a6a8a6"/><rect x="384.9" y="134.5" width="5" height="2.600" fill="#a6a8a6"/><rect x="386.5" y="114.4" width="5" height="2.600" fill="#a6a8a6"/><rect x="388.1" y="95.5" width="5" height="2.600" fill="#a6a8a6"/><rect x="389.6" y="77.7" width="5" height="2.600" fill="#a6a8a6"/><rect x="391.0" y="61.0" width="5" height="2.600" fill="#a6a8a6"/><rect x="392.3" y="45.2" width="5" height="2.600" fill="#a6a8a6"/><rect x="393.5" y="30.4" width="5" height="2.600" fill="#a6a8a6"/><rect x="394.7" y="16.3" width="5" height="2.600" fill="#a6a8a6"/><rect x="395.8" y="2.9" width="5" height="2.600" fill="#a6a8a6"/><path d="M476.6 0L502.6 344" stroke="#a6a8a6" stroke-width="2.300"/><rect x="498.7" y="324.5" width="5" height="2.600" fill="#a6a8a6"/><rect x="496.1" y="290.6" width="5" height="2.600" fill="#a6a8a6"/><rect x="493.8" y="259.4" width="5" height="2.600" fill="#a6a8a6"/><rect x="491.6" y="230.6" width="5" height="2.600" fill="#a6a8a6"/><rect x="489.6" y="203.9" width="5" height="2.600" fill="#a6a8a6"/><rect x="487.7" y="179.2" width="5" height="2.600" fill="#a6a8a6"/><rect x="486.0" y="156.1" width="5" height="2.600" fill="#a6a8a6"/><rect x="484.4" y="134.5" width="5" height="2.600" fill="#a6a8a6"/><rect x="482.8" y="114.4" width="5" height="2.600" fill="#a6a8a6"/><rect x="481.4" y="95.5" width="5" height="2.600" fill="#a6a8a6"/><rect x="480.1" y="77.7" width="5" height="2.600" fill="#a6a8a6"/><rect x="478.8" y="61.0" width="5" height="2.600" fill="#a6a8a6"/><rect x="477.6" y="45.2" width="5" height="2.600" fill="#a6a8a6"/><rect x="476.5" y="30.4" width="5" height="2.600" fill="#a6a8a6"/><rect x="475.4" y="16.3" width="5" height="2.600" fill="#a6a8a6"/><rect x="474.4" y="2.9" width="5" height="2.600" fill="#a6a8a6"/><path d="M554.5 0L635.1 344" stroke="#a6a8a6" stroke-width="2.300"/><rect x="628.3" y="324.5" width="5" height="2.600" fill="#a6a8a6"/><rect x="620.4" y="290.6" width="5" height="2.600" fill="#a6a8a6"/><rect x="613.1" y="259.4" width="5" height="2.600" fill="#a6a8a6"/><rect x="606.3" y="230.6" width="5" height="2.600" fill="#a6a8a6"/><rect x="600.1" y="203.9" width="5" height="2.600" fill="#a6a8a6"/><rect x="594.3" y="179.2" width="5" height="2.600" fill="#a6a8a6"/><rect x="588.9" y="156.1" width="5" height="2.600" fill="#a6a8a6"/><rect x="583.8" y="134.5" width="5" height="2.600" fill="#a6a8a6"/><rect x="579.1" y="114.4" width="5" height="2.600" fill="#a6a8a6"/><rect x="574.7" y="95.5" width="5" height="2.600" fill="#a6a8a6"/><rect x="570.5" y="77.7" width="5" height="2.600" fill="#a6a8a6"/><rect x="566.6" y="61.0" width="5" height="2.600" fill="#a6a8a6"/><rect x="562.9" y="45.2" width="5" height="2.600" fill="#a6a8a6"/><rect x="559.4" y="30.4" width="5" height="2.600" fill="#a6a8a6"/><rect x="556.1" y="16.3" width="5" height="2.600" fill="#a6a8a6"/><rect x="553.0" y="2.9" width="5" height="2.600" fill="#a6a8a6"/><path d="M0 382.5H875" stroke="#a6a8a6" stroke-width="2.300"/><rect x="-310.2" y="380.0" width="2.600" height="5" fill="#a6a8a6"/><rect x="-275.6" y="380.0" width="2.600" height="5" fill="#a6a8a6"/><rect x="-240.9" y="380.0" width="2.600" height="5" fill="#a6a8a6"/><rect x="-206.3" y="380.0" width="2.600" height="5" fill="#a6a8a6"/><rect x="-171.6" y="380.0" width="2.600" height="5" fill="#a6a8a6"/><rect x="-137.0" y="380.0" width="2.600" height="5" fill="#a6a8a6"/><rect x="-102.3" y="380.0" width="2.600" height="5" fill="#a6a8a6"/><rect x="-67.7" y="380.0" width="2.600" height="5" fill="#a6a8a6"/><rect x="-33.0" y="380.0" width="2.600" height="5" fill="#a6a8a6"/><rect x="1.7" y="380.0" width="2.600" height="5" fill="#a6a8a6"/><rect x="36.3" y="380.0" width="2.600" height="5" fill="#a6a8a6"/><rect x="71.0" y="380.0" width="2.600" height="5" fill="#a6a8a6"/><rect x="105.6" y="380.0" width="2.600" height="5" fill="#a6a8a6"/><rect x="140.3" y="380.0" width="2.600" height="5" fill="#a6a8a6"/><rect x="174.9" y="380.0" width="2.600" height="5" fill="#a6a8a6"/><rect x="209.6" y="380.0" width="2.600" height="5" fill="#a6a8a6"/><rect x="244.3" y="380.0" width="2.600" height="5" fill="#a6a8a6"/><rect x="278.9" y="380.0" width="2.600" height="5" fill="#a6a8a6"/><rect x="313.6" y="380.0" width="2.600" height="5" fill="#a6a8a6"/><rect x="348.2" y="380.0" width="2.600" height="5" fill="#a6a8a6"/><rect x="382.9" y="380.0" width="2.600" height="5" fill="#a6a8a6"/><rect x="417.5" y="380.0" width="2.600" height="5" fill="#a6a8a6"/><rect x="452.2" y="380.0" width="2.600" height="5" fill="#a6a8a6"/><rect x="486.9" y="380.0" width="2.600" height="5" fill="#a6a8a6"/><rect x="521.5" y="380.0" width="2.600" height="5" fill="#a6a8a6"/><rect x="556.2" y="380.0" width="2.600" height="5" fill="#a6a8a6"/><rect x="590.8" y="380.0" width="2.600" height="5" fill="#a6a8a6"/><rect x="625.5" y="380.0" width="2.600" height="5" fill="#a6a8a6"/><rect x="660.1" y="380.0" width="2.600" height="5" fill="#a6a8a6"/><rect x="694.8" y="380.0" width="2.600" height="5" fill="#a6a8a6"/><rect x="729.5" y="380.0" width="2.600" height="5" fill="#a6a8a6"/><rect x="764.1" y="380.0" width="2.600" height="5" fill="#a6a8a6"/><text x="-183.7" y="380.0" font-family="Liberation Mono" font-size="5" font-style="italic" fill="#b4b4b4">1METER</text><text x="-45.0" y="380.0" font-family="Liberation Mono" font-size="5" font-style="italic" fill="#b4b4b4">1METER</text><text x="93.6" y="380.0" font-family="Liberation Mono" font-size="5" font-style="italic" fill="#b4b4b4">1METER</text><text x="232.2" y="380.0" font-family="Liberation Mono" font-size="5" font-style="italic" fill="#b4b4b4">1METER</text><text x="370.9" y="380.0" font-family="Liberation Mono" font-size="5" font-style="italic" fill="#b4b4b4">1METER</text><text x="509.5" y="380.0" font-family="Liberation Mono" font-size="5" font-style="italic" fill="#b4b4b4">1METER</text><path d="M0 246.0H875" stroke="#a6a8a6" stroke-width="2.300"/><rect x="-193.3" y="243.5" width="2.600" height="5" fill="#a6a8a6"/><rect x="-164.1" y="243.5" width="2.600" height="5" fill="#a6a8a6"/><rect x="-134.8" y="243.5" width="2.600" height="5" fill="#a6a8a6"/><rect x="-105.6" y="243.5" width="2.600" height="5" fill="#a6a8a6"/><rect x="-76.3" y="243.5" width="2.600" height="5" fill="#a6a8a6"/><rect x="-47.1" y="243.5" width="2.600" height="5" fill="#a6a8a6"/><rect x="-17.9" y="243.5" width="2.600" height="5" fill="#a6a8a6"/><rect x="11.4" y="243.5" width="2.600" height="5" fill="#a6a8a6"/><rect x="40.6" y="243.5" width="2.600" height="5" fill="#a6a8a6"/><rect x="69.9" y="243.5" width="2.600" height="5" fill="#a6a8a6"/><rect x="99.1" y="243.5" width="2.600" height="5" fill="#a6a8a6"/><rect x="128.4" y="243.5" width="2.600" height="5" fill="#a6a8a6"/><rect x="157.6" y="243.5" width="2.600" height="5" fill="#a6a8a6"/><rect x="186.8" y="243.5" width="2.600" height="5" fill="#a6a8a6"/><rect x="216.1" y="243.5" width="2.600" height="5" fill="#a6a8a6"/><rect x="245.3" y="243.5" width="2.600" height="5" fill="#a6a8a6"/><rect x="274.6" y="243.5" width="2.600" height="5" fill="#a6a8a6"/><rect x="303.8" y="243.5" width="2.600" height="5" fill="#a6a8a6"/><rect x="333.0" y="243.5" width="2.600" height="5" fill="#a6a8a6"/><rect x="362.3" y="243.5" width="2.600" height="5" fill="#a6a8a6"/><rect x="391.5" y="243.5" width="2.600" height="5" fill="#a6a8a6"/><rect x="420.8" y="243.5" width="2.600" height="5" fill="#a6a8a6"/><rect x="450.0" y="243.5" width="2.600" height="5" fill="#a6a8a6"/><rect x="479.3" y="243.5" width="2.600" height="5" fill="#a6a8a6"/><rect x="508.5" y="243.5" width="2.600" height="5" fill="#a6a8a6"/><rect x="537.7" y="243.5" width="2.600" height="5" fill="#a6a8a6"/><rect x="567.0" y="243.5" width="2.600" height="5" fill="#a6a8a6"/><rect x="596.2" y="243.5" width="2.600" height="5" fill="#a6a8a6"/><rect x="625.5" y="243.5" width="2.600" height="5" fill="#a6a8a6"/><rect x="654.7" y="243.5" width="2.600" height="5" fill="#a6a8a6"/><rect x="683.9" y="243.5" width="2.600" height="5" fill="#a6a8a6"/><rect x="713.2" y="243.5" width="2.600" height="5" fill="#a6a8a6"/><text x="-85.7" y="243.5" font-family="Liberation Mono" font-size="5" font-style="italic" fill="#b4b4b4">1METER</text><text x="31.3" y="243.5" font-family="Liberation Mono" font-size="5" font-style="italic" fill="#b4b4b4">1METER</text><text x="148.3" y="243.5" font-family="Liberation Mono" font-size="5" font-style="italic" fill="#b4b4b4">1METER</text><text x="265.2" y="243.5" font-family="Liberation Mono" font-size="5" font-style="italic" fill="#b4b4b4">1METER</text><text x="382.2" y="243.5" font-family="Liberation Mono" font-size="5" font-style="italic" fill="#b4b4b4">1METER</text><text x="499.2" y="243.5" font-family="Liberation Mono" font-size="5" font-style="italic" fill="#b4b4b4">1METER</text><path d="M0 144.7H875" stroke="#a6a8a6" stroke-width="2.300"/><rect x="-106.5" y="142.2" width="2.600" height="5" fill="#a6a8a6"/><rect x="-81.3" y="142.2" width="2.600" height="5" fill="#a6a8a6"/><rect x="-56.0" y="142.2" width="2.600" height="5" fill="#a6a8a6"/><rect x="-30.8" y="142.2" width="2.600" height="5" fill="#a6a8a6"/><rect x="-5.6" y="142.2" width="2.600" height="5" fill="#a6a8a6"/><rect x="19.6" y="142.2" width="2.600" height="5" fill="#a6a8a6"/><rect x="44.8" y="142.2" width="2.600" height="5" fill="#a6a8a6"/><rect x="70.1" y="142.2" width="2.600" height="5" fill="#a6a8a6"/><rect x="95.3" y="142.2" width="2.600" height="5" fill="#a6a8a6"/><rect x="120.5" y="142.2" width="2.600" height="5" fill="#a6a8a6"/><rect x="145.7" y="142.2" width="2.600" height="5" fill="#a6a8a6"/><rect x="170.9" y="142.2" width="2.600" height="5" fill="#a6a8a6"/><rect x="196.2" y="142.2" width="2.600" height="5" fill="#a6a8a6"/><rect x="221.4" y="142.2" width="2.600" height="5" fill="#a6a8a6"/><rect x="246.6" y="142.2" width="2.600" height="5" fill="#a6a8a6"/><rect x="271.8" y="142.2" width="2.600" height="5" fill="#a6a8a6"/><rect x="297.1" y="142.2" width="2.600" height="5" fill="#a6a8a6"/><rect x="322.3" y="142.2" width="2.600" height="5" fill="#a6a8a6"/><rect x="347.5" y="142.2" width="2.600" height="5" fill="#a6a8a6"/><rect x="372.7" y="142.2" width="2.600" height="5" fill="#a6a8a6"/><rect x="397.9" y="142.2" width="2.600" height="5" fill="#a6a8a6"/><rect x="423.2" y="142.2" width="2.600" height="5" fill="#a6a8a6"/><rect x="448.4" y="142.2" width="2.600" height="5" fill="#a6a8a6"/><rect x="473.6" y="142.2" width="2.600" height="5" fill="#a6a8a6"/><rect x="498.8" y="142.2" width="2.600" height="5" fill="#a6a8a6"/><rect x="524.1" y="142.2" width="2.600" height="5" fill="#a6a8a6"/><rect x="549.3" y="142.2" width="2.600" height="5" fill="#a6a8a6"/><rect x="574.5" y="142.2" width="2.600" height="5" fill="#a6a8a6"/><rect x="599.7" y="142.2" width="2.600" height="5" fill="#a6a8a6"/><rect x="624.9" y="142.2" width="2.600" height="5" fill="#a6a8a6"/><rect x="650.2" y="142.2" width="2.600" height="5" fill="#a6a8a6"/><rect x="675.4" y="142.2" width="2.600" height="5" fill="#a6a8a6"/><text x="-12.9" y="142.2" font-family="Liberation Mono" font-size="5" font-style="italic" fill="#b4b4b4">1METER</text><text x="88.0" y="142.2" font-family="Liberation Mono" font-size="5" font-style="italic" fill="#b4b4b4">1METER</text><text x="188.9" y="142.2" font-family="Liberation Mono" font-size="5" font-style="italic" fill="#b4b4b4">1METER</text><text x="289.7" y="142.2" font-family="Liberation Mono" font-size="5" font-style="italic" fill="#b4b4b4">1METER</text><text x="390.6" y="142.2" font-family="Liberation Mono" font-size="5" font-style="italic" fill="#b4b4b4">1METER</text><text x="491.5" y="142.2" font-family="Liberation Mono" font-size="5" font-style="italic" fill="#b4b4b4">1METER</text><path d="M0 69.2H875" stroke="#a6a8a6" stroke-width="2.300"/><rect x="-41.8" y="66.7" width="2.600" height="5" fill="#a6a8a6"/><rect x="-19.6" y="66.7" width="2.600" height="5" fill="#a6a8a6"/><rect x="2.6" y="66.7" width="2.600" height="5" fill="#a6a8a6"/><rect x="24.9" y="66.7" width="2.600" height="5" fill="#a6a8a6"/><rect x="47.1" y="66.7" width="2.600" height="5" fill="#a6a8a6"/><rect x="69.3" y="66.7" width="2.600" height="5" fill="#a6a8a6"/><rect x="91.6" y="66.7" width="2.600" height="5" fill="#a6a8a6"/><rect x="113.8" y="66.7" width="2.600" height="5" fill="#a6a8a6"/><rect x="136.0" y="66.7" width="2.600" height="5" fill="#a6a8a6"/><rect x="158.2" y="66.7" width="2.600" height="5" fill="#a6a8a6"/><rect x="180.5" y="66.7" width="2.600" height="5" fill="#a6a8a6"/><rect x="202.7" y="66.7" width="2.600" height="5" fill="#a6a8a6"/><rect x="224.9" y="66.7" width="2.600" height="5" fill="#a6a8a6"/><rect x="247.1" y="66.7" width="2.600" height="5" fill="#a6a8a6"/><rect x="269.4" y="66.7" width="2.600" height="5" fill="#a6a8a6"/><rect x="291.6" y="66.7" width="2.600" height="5" fill="#a6a8a6"/><rect x="313.8" y="66.7" width="2.600" height="5" fill="#a6a8a6"/><rect x="336.0" y="66.7" width="2.600" height="5" fill="#a6a8a6"/><rect x="358.3" y="66.7" width="2.600" height="5" fill="#a6a8a6"/><rect x="380.5" y="66.7" width="2.600" height="5" fill="#a6a8a6"/><rect x="402.7" y="66.7" width="2.600" height="5" fill="#a6a8a6"/><rect x="425.0" y="66.7" width="2.600" height="5" fill="#a6a8a6"/><rect x="447.2" y="66.7" width="2.600" height="5" fill="#a6a8a6"/><rect x="469.4" y="66.7" width="2.600" height="5" fill="#a6a8a6"/><rect x="491.6" y="66.7" width="2.600" height="5" fill="#a6a8a6"/><rect x="513.9" y="66.7" width="2.600" height="5" fill="#a6a8a6"/><rect x="536.1" y="66.7" width="2.600" height="5" fill="#a6a8a6"/><rect x="558.3" y="66.7" width="2.600" height="5" fill="#a6a8a6"/><rect x="580.5" y="66.7" width="2.600" height="5" fill="#a6a8a6"/><rect x="602.8" y="66.7" width="2.600" height="5" fill="#a6a8a6"/><rect x="625.0" y="66.7" width="2.600" height="5" fill="#a6a8a6"/><rect x="647.2" y="66.7" width="2.600" height="5" fill="#a6a8a6"/><text x="41.3" y="66.7" font-family="Liberation Mono" font-size="5" font-style="italic" fill="#b4b4b4">1METER</text><text x="130.2" y="66.7" font-family="Liberation Mono" font-size="5" font-style="italic" fill="#b4b4b4">1METER</text><text x="219.1" y="66.7" font-family="Liberation Mono" font-size="5" font-style="italic" fill="#b4b4b4">1METER</text><text x="308.0" y="66.7" font-family="Liberation Mono" font-size="5" font-style="italic" fill="#b4b4b4">1METER</text><text x="396.9" y="66.7" font-family="Liberation Mono" font-size="5" font-style="italic" fill="#b4b4b4">1METER</text><text x="485.8" y="66.7" font-family="Liberation Mono" font-size="5" font-style="italic" fill="#b4b4b4">1METER</text><path d="M0 10.8H875" stroke="#a6a8a6" stroke-width="2.300"/><rect x="8.2" y="8.3" width="2.600" height="5" fill="#a6a8a6"/><rect x="28.1" y="8.3" width="2.600" height="5" fill="#a6a8a6"/><rect x="48.1" y="8.3" width="2.600" height="5" fill="#a6a8a6"/><rect x="68.0" y="8.3" width="2.600" height="5" fill="#a6a8a6"/><rect x="87.9" y="8.3" width="2.600" height="5" fill="#a6a8a6"/><rect x="107.8" y="8.3" width="2.600" height="5" fill="#a6a8a6"/><rect x="127.7" y="8.3" width="2.600" height="5" fill="#a6a8a6"/><rect x="147.6" y="8.3" width="2.600" height="5" fill="#a6a8a6"/><rect x="167.5" y="8.3" width="2.600" height="5" fill="#a6a8a6"/><rect x="187.4" y="8.3" width="2.600" height="5" fill="#a6a8a6"/><rect x="207.3" y="8.3" width="2.600" height="5" fill="#a6a8a6"/><rect x="227.2" y="8.3" width="2.600" height="5" fill="#a6a8a6"/><rect x="247.2" y="8.3" width="2.600" height="5" fill="#a6a8a6"/><rect x="267.1" y="8.3" width="2.600" height="5" fill="#a6a8a6"/><rect x="287.0" y="8.3" width="2.600" height="5" fill="#a6a8a6"/><rect x="306.9" y="8.3" width="2.600" height="5" fill="#a6a8a6"/><rect x="326.8" y="8.3" width="2.600" height="5" fill="#a6a8a6"/><rect x="346.7" y="8.3" width="2.600" height="5" fill="#a6a8a6"/><rect x="366.6" y="8.3" width="2.600" height="5" fill="#a6a8a6"/><rect x="386.5" y="8.3" width="2.600" height="5" fill="#a6a8a6"/><rect x="406.4" y="8.3" width="2.600" height="5" fill="#a6a8a6"/><rect x="426.3" y="8.3" width="2.600" height="5" fill="#a6a8a6"/><rect x="446.2" y="8.3" width="2.600" height="5" fill="#a6a8a6"/><rect x="466.2" y="8.3" width="2.600" height="5" fill="#a6a8a6"/><rect x="486.1" y="8.3" width="2.600" height="5" fill="#a6a8a6"/><rect x="506.0" y="8.3" width="2.600" height="5" fill="#a6a8a6"/><rect x="525.9" y="8.3" width="2.600" height="5" fill="#a6a8a6"/><rect x="545.8" y="8.3" width="2.600" height="5" fill="#a6a8a6"/><rect x="565.7" y="8.3" width="2.600" height="5" fill="#a6a8a6"/><rect x="585.6" y="8.3" width="2.600" height="5" fill="#a6a8a6"/><rect x="605.5" y="8.3" width="2.600" height="5" fill="#a6a8a6"/><rect x="625.4" y="8.3" width="2.600" height="5" fill="#a6a8a6"/><text x="83.2" y="8.3" font-family="Liberation Mono" font-size="5" font-style="italic" fill="#b4b4b4">1METER</text><text x="162.9" y="8.3" font-family="Liberation Mono" font-size="5" font-style="italic" fill="#b4b4b4">1METER</text><text x="242.5" y="8.3" font-family="Liberation Mono" font-size="5" font-style="italic" fill="#b4b4b4">1METER</text><text x="322.1" y="8.3" font-family="Liberation Mono" font-size="5" font-style="italic" fill="#b4b4b4">1METER</text><text x="401.8" y="8.3" font-family="Liberation Mono" font-size="5" font-style="italic" fill="#b4b4b4">1METER</text><text x="481.4" y="8.3" font-family="Liberation Mono" font-size="5" font-style="italic" fill="#b4b4b4">1METER</text></g><defs><linearGradient id="gfade" x1="0" y1="0" x2="0" y2="1"><stop offset="0" stop-color="#f3f3f3" stop-opacity=".5"/><stop offset="1" stop-color="#f3f3f3" stop-opacity="0"/></linearGradient></defs><rect x="180" y="0" width="420" height="190" fill="url(#gfade)"/><clipPath id="glt"><path d="M90.700 0H176.600L0 330V124Z"/></clipPath><g clip-path="url(#glt)" opacity="0.8"><path d="M90.7 0.0L-153.7 344.0" stroke="#a3a4a3" stroke-width="1.1" stroke-dasharray="4.500 1.500"/><path d="M107.9 0.0L-124.5 344.0" stroke="#a3a4a3" stroke-width="1.1" stroke-dasharray="4.500 1.500"/><path d="M125.1 0.0L-95.2 344.0" stroke="#a3a4a3" stroke-width="1.1" stroke-dasharray="4.500 1.500"/><path d="M142.2 0.0L-66.0 344.0" stroke="#a3a4a3" stroke-width="1.1" stroke-dasharray="4.500 1.500"/><path d="M159.4 0.0L-36.8 344.0" stroke="#a3a4a3" stroke-width="1.1" stroke-dasharray="4.500 1.500"/><path d="M176.6 0.0L-7.6 344.0" stroke="#a3a4a3" stroke-width="1.1" stroke-dasharray="4.500 1.500"/><path d="M193.8 0.0L21.6 344.0" stroke="#a3a4a3" stroke-width="1.1" stroke-dasharray="4.500 1.500"/><path d="M-5.0 -400.0L2224.2 -400.0" stroke="#a3a4a3" stroke-width="1.1" stroke-dasharray="4.500 1.500"/><path d="M-5.0 -400.0L2721.3 -400.0" stroke="#a3a4a3" stroke-width="1.1" stroke-dasharray="4.500 1.500"/><path d="M-5.0 -400.0L3602.0 -400.0" stroke="#a3a4a3" stroke-width="1.1" stroke-dasharray="4.500 1.500"/><path d="M-5.0 -400.0L5588.9 -400.0" stroke="#a3a4a3" stroke-width="1.1" stroke-dasharray="4.500 1.500"/><path d="M-5.0 -400.0L14285.7 -400.0" stroke="#a3a4a3" stroke-width="1.1" stroke-dasharray="4.500 1.500"/><path d="M-5.0 291.3L20.9 291.3" stroke="#a3a4a3" stroke-width="1.1" stroke-dasharray="4.500 1.500"/><path d="M-5.0 257.5L39.0 257.5" stroke="#a3a4a3" stroke-width="1.1" stroke-dasharray="4.500 1.500"/><path d="M-5.0 226.4L55.5 226.4" stroke="#a3a4a3" stroke-width="1.1" stroke-dasharray="4.500 1.500"/><path d="M-5.0 197.9L70.8 197.9" stroke="#a3a4a3" stroke-width="1.1" stroke-dasharray="4.500 1.500"/><path d="M-5.0 171.5L84.9 171.5" stroke="#a3a4a3" stroke-width="1.1" stroke-dasharray="4.500 1.500"/><path d="M-5.0 147.1L98.0 147.1" stroke="#a3a4a3" stroke-width="1.1" stroke-dasharray="4.500 1.500"/><path d="M-5.0 124.4L110.1 124.4" stroke="#a3a4a3" stroke-width="1.1" stroke-dasharray="4.500 1.500"/><path d="M-5.0 103.3L121.4 103.3" stroke="#a3a4a3" stroke-width="1.1" stroke-dasharray="4.500 1.500"/><path d="M-5.0 83.6L131.9 83.6" stroke="#a3a4a3" stroke-width="1.1" stroke-dasharray="4.500 1.500"/><path d="M-5.0 65.2L141.8 65.2" stroke="#a3a4a3" stroke-width="1.1" stroke-dasharray="4.500 1.500"/><path d="M-5.0 47.9L151.0 47.9" stroke="#a3a4a3" stroke-width="1.1" stroke-dasharray="4.500 1.500"/><path d="M-5.0 31.6L159.7 31.6" stroke="#a3a4a3" stroke-width="1.1" stroke-dasharray="4.500 1.500"/><path d="M-5.0 16.3L167.9 16.3" stroke="#a3a4a3" stroke-width="1.1" stroke-dasharray="4.500 1.500"/><path d="M-5.0 1.9L175.6 1.9" stroke="#a3a4a3" stroke-width="1.1" stroke-dasharray="4.500 1.500"/><path d="M-5.0 -11.7L182.9 -11.7" stroke="#a3a4a3" stroke-width="1.1" stroke-dasharray="4.500 1.500"/><path d="M-5.0 -24.6L189.8 -24.6" stroke="#a3a4a3" stroke-width="1.1" stroke-dasharray="4.500 1.500"/><path d="M-5.0 -36.8L196.3 -36.8" stroke="#a3a4a3" stroke-width="1.1" stroke-dasharray="4.500 1.500"/><path d="M-5.0 -48.4L202.5 -48.4" stroke="#a3a4a3" stroke-width="1.1" stroke-dasharray="4.500 1.500"/><path d="M-5.0 -59.4L208.4 -59.4" stroke="#a3a4a3" stroke-width="1.1" stroke-dasharray="4.500 1.500"/><path d="M-5.0 -69.9L214.0 -69.9" stroke="#a3a4a3" stroke-width="1.1" stroke-dasharray="4.500 1.500"/><path d="M-5.0 -79.9L219.3 -79.9" stroke="#a3a4a3" stroke-width="1.1" stroke-dasharray="4.500 1.500"/><path d="M-5.0 -89.4L224.4 -89.4" stroke="#a3a4a3" stroke-width="1.1" stroke-dasharray="4.500 1.500"/><path d="M-5.0 -98.4L229.2 -98.4" stroke="#a3a4a3" stroke-width="1.1" stroke-dasharray="4.500 1.500"/><path d="M-5.0 -107.1L233.9 -107.1" stroke="#a3a4a3" stroke-width="1.1" stroke-dasharray="4.500 1.500"/><path d="M-5.0 -115.4L238.3 -115.4" stroke="#a3a4a3" stroke-width="1.1" stroke-dasharray="4.500 1.500"/><path d="M-5.0 -123.4L242.5 -123.4" stroke="#a3a4a3" stroke-width="1.1" stroke-dasharray="4.500 1.500"/><path d="M-5.0 -131.0L246.6 -131.0" stroke="#a3a4a3" stroke-width="1.1" stroke-dasharray="4.500 1.500"/><path d="M-5.0 -138.3L250.5 -138.3" stroke="#a3a4a3" stroke-width="1.1" stroke-dasharray="4.500 1.500"/><path d="M-5.0 -145.3L254.3 -145.3" stroke="#a3a4a3" stroke-width="1.1" stroke-dasharray="4.500 1.500"/><path d="M-5.0 -152.0L257.9 -152.0" stroke="#a3a4a3" stroke-width="1.1" stroke-dasharray="4.500 1.500"/><path d="M-5.0 -158.5L261.3 -158.5" stroke="#a3a4a3" stroke-width="1.1" stroke-dasharray="4.500 1.500"/><path d="M-5.0 -164.8L264.7 -164.8" stroke="#a3a4a3" stroke-width="1.1" stroke-dasharray="4.500 1.500"/><path d="M-5.0 -170.8L267.9 -170.8" stroke="#a3a4a3" stroke-width="1.1" stroke-dasharray="4.500 1.500"/><path d="M-5.0 -176.5L271.0 -176.5" stroke="#a3a4a3" stroke-width="1.1" stroke-dasharray="4.500 1.500"/><path d="M-5.0 -182.1L274.0 -182.1" stroke="#a3a4a3" stroke-width="1.1" stroke-dasharray="4.500 1.500"/></g><path d="M176.600 0H246.300L111.800 344H-8Z" fill="#c7cdd2"/><clipPath id="gls"><path d="M176.600 0H246.300L111.800 344H-8Z"/></clipPath><g clip-path="url(#gls)" opacity="0.62"><path d="M190.5 0.0L16.5 344.0" stroke="#8b9298" stroke-width="1" /><path d="M204.5 0.0L40.3 344.0" stroke="#8b9298" stroke-width="1" /><path d="M218.4 0.0L64.2 344.0" stroke="#8b9298" stroke-width="1" /><path d="M232.4 0.0L88.0 344.0" stroke="#8b9298" stroke-width="1" /><path d="M2224.2 -400.0L69.4 452.4" stroke="#8b9298" stroke-width="1" /><path d="M2721.3 -400.0L83.6 416.1" stroke="#8b9298" stroke-width="1" /><path d="M3602.0 -400.0L96.7 382.5" stroke="#8b9298" stroke-width="1" /><path d="M5588.9 -400.0L108.9 351.3" stroke="#8b9298" stroke-width="1" /><path d="M14285.7 -400.0L120.3 322.3" stroke="#8b9298" stroke-width="1" /><path d="M20.9 291.3L130.9 295.2" stroke="#8b9298" stroke-width="1" /><path d="M39.0 257.5L140.8 269.8" stroke="#8b9298" stroke-width="1" /><path d="M55.5 226.4L150.1 246.0" stroke="#8b9298" stroke-width="1" /><path d="M70.8 197.9L158.8 223.7" stroke="#8b9298" stroke-width="1" /><path d="M84.9 171.5L167.1 202.7" stroke="#8b9298" stroke-width="1" /><path d="M98.0 147.1L174.8 182.9" stroke="#8b9298" stroke-width="1" /><path d="M110.1 124.4L182.1 164.1" stroke="#8b9298" stroke-width="1" /><path d="M121.4 103.3L189.0 146.4" stroke="#8b9298" stroke-width="1" /><path d="M131.9 83.6L195.6 129.7" stroke="#8b9298" stroke-width="1" /><path d="M141.8 65.2L201.8 113.7" stroke="#8b9298" stroke-width="1" /><path d="M151.0 47.9L207.7 98.6" stroke="#8b9298" stroke-width="1" /><path d="M159.7 31.6L213.4 84.2" stroke="#8b9298" stroke-width="1" /><path d="M167.9 16.3L218.7 70.5" stroke="#8b9298" stroke-width="1" /><path d="M175.6 1.9L223.8 57.5" stroke="#8b9298" stroke-width="1" /><path d="M182.9 -11.7L228.7 45.0" stroke="#8b9298" stroke-width="1" /><path d="M189.8 -24.6L233.4 33.1" stroke="#8b9298" stroke-width="1" /><path d="M196.3 -36.8L237.8 21.7" stroke="#8b9298" stroke-width="1" /><path d="M202.5 -48.4L242.1 10.8" stroke="#8b9298" stroke-width="1" /><path d="M208.4 -59.4L246.2 0.4" stroke="#8b9298" stroke-width="1" /><path d="M214.0 -69.9L250.1 -9.7" stroke="#8b9298" stroke-width="1" /><path d="M219.3 -79.9L253.8 -19.3" stroke="#8b9298" stroke-width="1" /><path d="M224.4 -89.4L257.5 -28.5" stroke="#8b9298" stroke-width="1" /><path d="M229.2 -98.4L260.9 -37.4" stroke="#8b9298" stroke-width="1" /><path d="M233.9 -107.1L264.3 -46.0" stroke="#8b9298" stroke-width="1" /><path d="M238.3 -115.4L267.5 -54.2" stroke="#8b9298" stroke-width="1" /><path d="M242.5 -123.4L270.6 -62.2" stroke="#8b9298" stroke-width="1" /><path d="M246.6 -131.0L273.6 -69.8" stroke="#8b9298" stroke-width="1" /><path d="M250.5 -138.3L276.5 -77.2" stroke="#8b9298" stroke-width="1" /><path d="M254.3 -145.3L279.3 -84.4" stroke="#8b9298" stroke-width="1" /><path d="M257.9 -152.0L282.0 -91.3" stroke="#8b9298" stroke-width="1" /><path d="M261.3 -158.5L284.6 -97.9" stroke="#8b9298" stroke-width="1" /><path d="M264.7 -164.8L287.1 -104.4" stroke="#8b9298" stroke-width="1" /><path d="M267.9 -170.8L289.5 -110.6" stroke="#8b9298" stroke-width="1" /><path d="M271.0 -176.5L291.9 -116.6" stroke="#8b9298" stroke-width="1" /><path d="M274.0 -182.1L294.2 -122.5" stroke="#8b9298" stroke-width="1" /></g><path d="M176.600 0L-7.300 344" stroke="#aab1b7" stroke-width="3.500" opacity=".75"/><filter id="gblur" x="-20%" y="-5%" width="140%" height="110%"><feGaussianBlur stdDeviation="1.300"/></filter><path d="M543.700 -3H570L660 347H634.400L611.700 307Z" fill="rgb(42,84,150)" fill-opacity=".68" filter="url(#gblur)"/><path d="M564.800 0H611L736.500 344H655.500Z" fill="#76879f"/><clipPath id="grs"><path d="M564.800 0H611L736.500 344H655.500Z"/></clipPath><g clip-path="url(#grs)" opacity="0.55"><path d="M574.0 0.0L671.7 344.0" stroke="#56657b" stroke-width="1" /><path d="M583.3 0.0L687.9 344.0" stroke="#56657b" stroke-width="1" /><path d="M592.5 0.0L704.1 344.0" stroke="#56657b" stroke-width="1" /><path d="M601.8 0.0L720.3 344.0" stroke="#56657b" stroke-width="1" /><path d="M684.1 452.4L-740.0 -400.0" stroke="#56657b" stroke-width="1" /><path d="M674.5 416.1L-1067.3 -400.0" stroke="#56657b" stroke-width="1" /><path d="M665.7 382.5L-1647.1 -400.0" stroke="#56657b" stroke-width="1" /><path d="M657.4 351.3L-2955.3 -400.0" stroke="#56657b" stroke-width="1" /><path d="M649.8 322.3L-8681.5 -400.0" stroke="#56657b" stroke-width="1" /><path d="M642.6 295.2L717.2 291.2" stroke="#56657b" stroke-width="1" /><path d="M635.9 269.8L704.8 257.1" stroke="#56657b" stroke-width="1" /><path d="M629.7 246.0L693.4 225.9" stroke="#56657b" stroke-width="1" /><path d="M623.8 223.7L683.0 197.3" stroke="#56657b" stroke-width="1" /><path d="M618.2 202.7L673.3 170.8" stroke="#56657b" stroke-width="1" /><path d="M613.0 182.9L664.4 146.4" stroke="#56657b" stroke-width="1" /><path d="M608.1 164.1L656.1 123.7" stroke="#56657b" stroke-width="1" /><path d="M603.4 146.4L648.4 102.6" stroke="#56657b" stroke-width="1" /><path d="M599.0 129.7L641.3 82.9" stroke="#56657b" stroke-width="1" /><path d="M594.8 113.7L634.5 64.5" stroke="#56657b" stroke-width="1" /><path d="M590.8 98.6L628.3 47.3" stroke="#56657b" stroke-width="1" /><path d="M587.0 84.2L622.4 31.1" stroke="#56657b" stroke-width="1" /><path d="M583.4 70.5L616.8 15.9" stroke="#56657b" stroke-width="1" /><path d="M580.0 57.5L611.6 1.6" stroke="#56657b" stroke-width="1" /><path d="M576.7 45.0L606.6 -12.0" stroke="#56657b" stroke-width="1" /><path d="M573.5 33.1L602.0 -24.8" stroke="#56657b" stroke-width="1" /><path d="M570.5 21.7L597.5 -36.9" stroke="#56657b" stroke-width="1" /><path d="M567.6 10.8L593.3 -48.4" stroke="#56657b" stroke-width="1" /><path d="M564.9 0.4L589.4 -59.3" stroke="#56657b" stroke-width="1" /><path d="M562.2 -9.7L585.6 -69.7" stroke="#56657b" stroke-width="1" /><path d="M559.7 -19.3L582.0 -79.6" stroke="#56657b" stroke-width="1" /><path d="M557.3 -28.5L578.5 -89.0" stroke="#56657b" stroke-width="1" /><path d="M554.9 -37.4L575.3 -98.0" stroke="#56657b" stroke-width="1" /><path d="M552.7 -46.0L572.1 -106.5" stroke="#56657b" stroke-width="1" /><path d="M550.5 -54.2L569.1 -114.7" stroke="#56657b" stroke-width="1" /><path d="M548.4 -62.2L566.3 -122.6" stroke="#56657b" stroke-width="1" /><path d="M546.4 -69.8L563.5 -130.1" stroke="#56657b" stroke-width="1" /><path d="M544.4 -77.2L560.9 -137.3" stroke="#56657b" stroke-width="1" /><path d="M542.6 -84.4L558.4 -144.3" stroke="#56657b" stroke-width="1" /><path d="M540.7 -91.3L555.9 -150.9" stroke="#56657b" stroke-width="1" /><path d="M539.0 -97.9L553.6 -157.3" stroke="#56657b" stroke-width="1" /><path d="M537.3 -104.4L551.4 -163.5" stroke="#56657b" stroke-width="1" /><path d="M535.6 -110.6L549.2 -169.4" stroke="#56657b" stroke-width="1" /><path d="M534.0 -116.6L547.1 -175.1" stroke="#56657b" stroke-width="1" /><path d="M532.5 -122.5L545.1 -180.6" stroke="#56657b" stroke-width="1" /></g><clipPath id="grt"><path d="M611 0H697.600L875 317V344H736.500Z"/></clipPath><g clip-path="url(#grt)" opacity="0.85"><path d="M611.0 0.0L731.2 344.0" stroke="#9b9c9b" stroke-width="1.1" stroke-dasharray="4.500 1.500"/><path d="M628.3 0.0L760.6 344.0" stroke="#9b9c9b" stroke-width="1.1" stroke-dasharray="4.500 1.500"/><path d="M645.6 0.0L790.1 344.0" stroke="#9b9c9b" stroke-width="1.1" stroke-dasharray="4.500 1.500"/><path d="M663.0 0.0L819.5 344.0" stroke="#9b9c9b" stroke-width="1.1" stroke-dasharray="4.500 1.500"/><path d="M680.3 0.0L849.0 344.0" stroke="#9b9c9b" stroke-width="1.1" stroke-dasharray="4.500 1.500"/><path d="M697.6 0.0L878.4 344.0" stroke="#9b9c9b" stroke-width="1.1" stroke-dasharray="4.500 1.500"/><path d="M714.9 0.0L907.9 344.0" stroke="#9b9c9b" stroke-width="1.1" stroke-dasharray="4.500 1.500"/><path d="M-740.0 -400.0L890.0 -400.0" stroke="#9b9c9b" stroke-width="1.1" stroke-dasharray="4.500 1.500"/><path d="M-1067.3 -400.0L890.0 -400.0" stroke="#9b9c9b" stroke-width="1.1" stroke-dasharray="4.500 1.500"/><path d="M-1647.1 -400.0L890.0 -400.0" stroke="#9b9c9b" stroke-width="1.1" stroke-dasharray="4.500 1.500"/><path d="M-2955.3 -400.0L890.0 -400.0" stroke="#9b9c9b" stroke-width="1.1" stroke-dasharray="4.500 1.500"/><path d="M-8681.5 -400.0L890.0 -400.0" stroke="#9b9c9b" stroke-width="1.1" stroke-dasharray="4.500 1.500"/><path d="M717.2 291.2L890.0 291.2" stroke="#9b9c9b" stroke-width="1.1" stroke-dasharray="4.500 1.500"/><path d="M704.8 257.1L890.0 257.1" stroke="#9b9c9b" stroke-width="1.1" stroke-dasharray="4.500 1.500"/><path d="M693.4 225.9L890.0 225.9" stroke="#9b9c9b" stroke-width="1.1" stroke-dasharray="4.500 1.500"/><path d="M683.0 197.3L890.0 197.3" stroke="#9b9c9b" stroke-width="1.1" stroke-dasharray="4.500 1.500"/><path d="M673.3 170.8L890.0 170.8" stroke="#9b9c9b" stroke-width="1.1" stroke-dasharray="4.500 1.500"/><path d="M664.4 146.4L890.0 146.4" stroke="#9b9c9b" stroke-width="1.1" stroke-dasharray="4.500 1.500"/><path d="M656.1 123.7L890.0 123.7" stroke="#9b9c9b" stroke-width="1.1" stroke-dasharray="4.500 1.500"/><path d="M648.4 102.6L890.0 102.6" stroke="#9b9c9b" stroke-width="1.1" stroke-dasharray="4.500 1.500"/><path d="M641.3 82.9L890.0 82.9" stroke="#9b9c9b" stroke-width="1.1" stroke-dasharray="4.500 1.500"/><path d="M634.5 64.5L890.0 64.5" stroke="#9b9c9b" stroke-width="1.1" stroke-dasharray="4.500 1.500"/><path d="M628.3 47.3L890.0 47.3" stroke="#9b9c9b" stroke-width="1.1" stroke-dasharray="4.500 1.500"/><path d="M622.4 31.1L890.0 31.1" stroke="#9b9c9b" stroke-width="1.1" stroke-dasharray="4.500 1.500"/><path d="M616.8 15.9L890.0 15.9" stroke="#9b9c9b" stroke-width="1.1" stroke-dasharray="4.500 1.500"/><path d="M611.6 1.6L890.0 1.6" stroke="#9b9c9b" stroke-width="1.1" stroke-dasharray="4.500 1.500"/><path d="M606.6 -12.0L890.0 -12.0" stroke="#9b9c9b" stroke-width="1.1" stroke-dasharray="4.500 1.500"/><path d="M602.0 -24.8L890.0 -24.8" stroke="#9b9c9b" stroke-width="1.1" stroke-dasharray="4.500 1.500"/><path d="M597.5 -36.9L890.0 -36.9" stroke="#9b9c9b" stroke-width="1.1" stroke-dasharray="4.500 1.500"/><path d="M593.3 -48.4L890.0 -48.4" stroke="#9b9c9b" stroke-width="1.1" stroke-dasharray="4.500 1.500"/><path d="M589.4 -59.3L890.0 -59.3" stroke="#9b9c9b" stroke-width="1.1" stroke-dasharray="4.500 1.500"/><path d="M585.6 -69.7L890.0 -69.7" stroke="#9b9c9b" stroke-width="1.1" stroke-dasharray="4.500 1.500"/><path d="M582.0 -79.6L890.0 -79.6" stroke="#9b9c9b" stroke-width="1.1" stroke-dasharray="4.500 1.500"/><path d="M578.5 -89.0L890.0 -89.0" stroke="#9b9c9b" stroke-width="1.1" stroke-dasharray="4.500 1.500"/><path d="M575.3 -98.0L890.0 -98.0" stroke="#9b9c9b" stroke-width="1.1" stroke-dasharray="4.500 1.500"/><path d="M572.1 -106.5L890.0 -106.5" stroke="#9b9c9b" stroke-width="1.1" stroke-dasharray="4.500 1.500"/><path d="M569.1 -114.7L890.0 -114.7" stroke="#9b9c9b" stroke-width="1.1" stroke-dasharray="4.500 1.500"/><path d="M566.3 -122.6L890.0 -122.6" stroke="#9b9c9b" stroke-width="1.1" stroke-dasharray="4.500 1.500"/><path d="M563.5 -130.1L890.0 -130.1" stroke="#9b9c9b" stroke-width="1.1" stroke-dasharray="4.500 1.500"/><path d="M560.9 -137.3L890.0 -137.3" stroke="#9b9c9b" stroke-width="1.1" stroke-dasharray="4.500 1.500"/><path d="M558.4 -144.3L890.0 -144.3" stroke="#9b9c9b" stroke-width="1.1" stroke-dasharray="4.500 1.500"/><path d="M555.9 -150.9L890.0 -150.9" stroke="#9b9c9b" stroke-width="1.1" stroke-dasharray="4.500 1.500"/><path d="M553.6 -157.3L890.0 -157.3" stroke="#9b9c9b" stroke-width="1.1" stroke-dasharray="4.500 1.500"/><path d="M551.4 -163.5L890.0 -163.5" stroke="#9b9c9b" stroke-width="1.1" stroke-dasharray="4.500 1.500"/><path d="M549.2 -169.4L890.0 -169.4" stroke="#9b9c9b" stroke-width="1.1" stroke-dasharray="4.500 1.500"/><path d="M547.1 -175.1L890.0 -175.1" stroke="#9b9c9b" stroke-width="1.1" stroke-dasharray="4.500 1.500"/><path d="M545.1 -180.6L890.0 -180.6" stroke="#9b9c9b" stroke-width="1.1" stroke-dasharray="4.500 1.500"/></g></g></svg>
<div class="a" style="left:15.0px;top:704.0px;width:200.0px;height:200.0px;background:rgba(70,70,70,0.42);"></div>
<div class="a" style="left:0.0px;top:1018.0px;width:877.0px;height:2.0px;background:#1a1a1a;"></div>
<!-- hier -->
<div class="a" style="left:877.0px;top:73.0px;width:611.0px;height:19.0px;background:#282828;"></div>
<div class="a" style="left:877.0px;top:73.0px;width:96.0px;height:19.0px;background:#3c3c3c;border-radius:3px 3px 0 0"></div>
<svg style="left:885.5px;top:78.0px;" width="11" height="9" viewBox="0 0 11 9"><path d="M3.500 1H11M3.500 4.500H11M3.500 8H11" stroke="#c4c4c4" stroke-width="1.200"/><path d="M0 1H2M1 0V2M.3 4.500H1.700M.3 8H1.700" stroke="#c4c4c4" stroke-width="1"/></svg>
<div class="t" style="left:901.5px;top:75.1px;font-size:12.3px;letter-spacing:0.152px;color:#d2d2d2;">Hierarchy</div>
<svg style="left:1453.5px;top:77.0px;" width="9" height="10" viewBox="0 0 9 10"><rect x="0.6" y="5" width="7.6" height="4.2" fill="none" stroke="#c4c4c4" stroke-width="1.2"/><path d="M2.2 5V3a2.1 2.1 0 0 1 4.2 0" fill="none" stroke="#c4c4c4" stroke-width="1.2"/></svg>
<svg style="left:1474.0px;top:76.5px;" width="3" height="12" viewBox="0 0 3 12"><circle cx="1.5" cy="1.5" r="1.2" fill="#c4c4c4"/><circle cx="1.5" cy="6" r="1.2" fill="#c4c4c4"/><circle cx="1.5" cy="10.5" r="1.2" fill="#c4c4c4"/></svg>
<div class="a" style="left:877.0px;top:92.0px;width:611.0px;height:20.0px;background:#3c3c3c;"></div>
<svg style="left:884.0px;top:96.0px;" width="12" height="12" viewBox="0 0 12 12"><path d="M6 0V12M0 6H12" stroke="#c4c4c4" stroke-width="1.800"/></svg>
<svg style="left:900.2px;top:99.8px;" width="7.5" height="4.3" viewBox="0 0 7.5 4.3"><path d="M0 0H7.5 L3.75 4.3 Z" fill="#c4c4c4"/></svg>
<div class="fld" style="left:1159.500px;top:95px;width:308px;height:15px;border-radius:3px 0 0 3px"></div>
<svg style="left:1165.0px;top:98.5px;" width="10" height="8" viewBox="0 0 10 8"><circle cx="3" cy="3" r="2.300" fill="none" stroke="#9a9a9a" stroke-width="1.200"/><path d="M4.800 4.800L6.800 6.800" stroke="#9a9a9a" stroke-width="1.300"/><path d="M6.500 2H9.500L8 3.800Z" fill="#9a9a9a"/></svg>
<div class="t" style="left:1178.5px;top:95.1px;font-size:11.5px;letter-spacing:-0.094px;color:#7a7a7a;">All</div>
<div class="a" style="left:1467.5px;top:95.0px;width:16.5px;height:15.0px;background:#3c3c3c;border:1px solid #2a2a2a;border-radius:0 3px 3px 0"></div>
<svg style="left:1470.0px;top:97.5px;" width="11" height="10" viewBox="0 0 11 10"><rect x="3.500" y=".5" width="7" height="6.500" fill="none" stroke="#c4c4c4" stroke-width="1"/><rect x=".5" y="4" width="5" height="5.500" fill="#3c3c3c" stroke="#c4c4c4" stroke-width="1"/><path d="M5 5.500L8.500 2M6.300 1.800H8.700V4.200" fill="none" stroke="#c4c4c4" stroke-width="1"/></svg>
<div class="a" style="left:877.0px;top:112.0px;width:611.0px;height:520.0px;background:#383838;"></div>
<div class="a" style="left:877.0px;top:112.0px;width:32.0px;height:520.0px;background:#333333;"></div>
<div class="a" style="left:877.0px;top:112.0px;width:611.0px;height:15.5px;background:#2d2d2d;"></div>
<svg style="left:911.0px;top:117.0px;" width="9" height="7" viewBox="0 0 9 7"><path d="M0 0H9 L4.5 7 Z" fill="#7a7a7a"/></svg>
<svg style="left:924.3px;top:113.0px;" width="14" height="14" viewBox="0 0 16 16"><path d="M8 .3L15 4.100V11.900L8 15.700 1 11.900V4.100Z" fill="#e6e6e6"/><path d="M8 8V13.200M8 8L3.200 5.300M8 8L12.800 5.300" stroke="#2d2d2d" stroke-width="1.700"/><path d="M5.300 3.300L8 4.700 10.700 3.300M2.700 8.200V10.900L5.200 12.300M13.300 8.200V10.900L10.800 12.300" fill="none" stroke="#2d2d2d" stroke-width="1.300"/></svg>
<div class="t" style="left:942.0px;top:113.1px;font-size:12.3px;font-weight:bold;letter-spacing:0.643px;color:#dcdcdc;">SampleScene*</div>
<svg style="left:1474.0px;top:114.5px;" width="3" height="12" viewBox="0 0 3 12"><circle cx="1.5" cy="1.5" r="1.2" fill="#c4c4c4"/><circle cx="1.5" cy="6" r="1.2" fill="#c4c4c4"/><circle cx="1.5" cy="10.5" r="1.2" fill="#c4c4c4"/></svg>
<svg style="left:937.5px;top:129.8px;" width="14" height="14" viewBox="0 0 16 16"><g fill="none" stroke="#c8c8c8" stroke-width="1.1" stroke-linejoin="round"><path d="M8 1 L14.5 4.5 V11.5 L8 15 L1.5 11.5 V4.5 Z"/><path d="M1.5 4.5 L8 8 L14.5 4.5 M8 8 V15"/></g></svg>
<div class="t" style="left:955.3px;top:129.4px;font-size:12.3px;letter-spacing:0.062px;color:#cdcdcd;">Main Camera</div>
<svg style="left:937.5px;top:145.8px;" width="14" height="14" viewBox="0 0 16 16"><g fill="none" stroke="#c8c8c8" stroke-width="1.1" stroke-linejoin="round"><path d="M8 1 L14.5 4.5 V11.5 L8 15 L1.5 11.5 V4.5 Z"/><path d="M1.5 4.5 L8 8 L14.5 4.5 M8 8 V15"/></g></svg>
<div class="t" style="left:955.3px;top:145.4px;font-size:12.3px;letter-spacing:0.224px;color:#cdcdcd;">Directional Light</div>
<svg style="left:937.5px;top:161.8px;" width="14" height="14" viewBox="0 0 16 16"><g fill="none" stroke="#c8c8c8" stroke-width="1.1" stroke-linejoin="round"><path d="M8 1 L14.5 4.5 V11.5 L8 15 L1.5 11.5 V4.5 Z"/><path d="M1.5 4.5 L8 8 L14.5 4.5 M8 8 V15"/></g></svg>
<div class="t" style="left:955.3px;top:161.4px;font-size:12.3px;letter-spacing:-0.092px;color:#cdcdcd;">Plane</div>
<svg style="left:937.5px;top:177.8px;" width="14" height="14" viewBox="0 0 16 16"><g fill="none" stroke="#c8c8c8" stroke-width="1.1" stroke-linejoin="round"><path d="M8 1 L14.5 4.5 V11.5 L8 15 L1.5 11.5 V4.5 Z"/><path d="M1.5 4.5 L8 8 L14.5 4.5 M8 8 V15"/></g></svg>
<div class="t" style="left:955.3px;top:177.4px;font-size:12.3px;letter-spacing:0.149px;color:#cdcdcd;">Cube</div>
<svg style="left:937.5px;top:193.8px;" width="14" height="14" viewBox="0 0 16 16"><g fill="none" stroke="#c8c8c8" stroke-width="1.1" stroke-linejoin="round"><path d="M8 1 L14.5 4.5 V11.5 L8 15 L1.5 11.5 V4.5 Z"/><path d="M1.5 4.5 L8 8 L14.5 4.5 M8 8 V15"/></g></svg>
<div class="t" style="left:955.3px;top:193.4px;font-size:12.3px;letter-spacing:-0.044px;color:#cdcdcd;">Cube (1)</div>
<svg style="left:937.5px;top:209.8px;" width="14" height="14" viewBox="0 0 16 16"><g fill="none" stroke="#c8c8c8" stroke-width="1.1" stroke-linejoin="round"><path d="M8 1 L14.5 4.5 V11.5 L8 15 L1.5 11.5 V4.5 Z"/><path d="M1.5 4.5 L8 8 L14.5 4.5 M8 8 V15"/></g></svg>
<div class="t" style="left:955.3px;top:209.4px;font-size:12.3px;letter-spacing:0.144px;color:#cdcdcd;">Cube (2)</div>
<svg style="left:937.5px;top:225.8px;" width="14" height="14" viewBox="0 0 16 16"><g fill="none" stroke="#c8c8c8" stroke-width="1.1" stroke-linejoin="round"><path d="M8 1 L14.5 4.5 V11.5 L8 15 L1.5 11.5 V4.5 Z"/><path d="M1.5 4.5 L8 8 L14.5 4.5 M8 8 V15"/></g></svg>
<div class="t" style="left:955.3px;top:225.4px;font-size:12.3px;letter-spacing:0.296px;color:#cdcdcd;">Network Manager</div>
<svg style="left:937.5px;top:241.8px;" width="14" height="14" viewBox="0 0 16 16"><g fill="none" stroke="#c8c8c8" stroke-width="1.1" stroke-linejoin="round"><path d="M8 1 L14.5 4.5 V11.5 L8 15 L1.5 11.5 V4.5 Z"/><path d="M1.5 4.5 L8 8 L14.5 4.5 M8 8 V15"/></g></svg>
<div class="t" style="left:955.3px;top:241.4px;font-size:12.3px;letter-spacing:0.267px;color:#cdcdcd;">Network UI</div>
<svg style="left:925.0px;top:245.8px;" width="9" height="7" viewBox="0 0 9 7"><path d="M0 0H9 L4.5 7 Z" fill="#7a7a7a"/></svg>
<div class="a" style="left:877.0px;top:256.7px;width:611.0px;height:16.2px;background:#4d4d4d;"></div>
<svg style="left:951.5px;top:257.8px;" width="14" height="14" viewBox="0 0 16 16"><g fill="none" stroke="#c8c8c8" stroke-width="1.1" stroke-linejoin="round"><path d="M8 1 L14.5 4.5 V11.5 L8 15 L1.5 11.5 V4.5 Z"/><path d="M1.5 4.5 L8 8 L14.5 4.5 M8 8 V15"/></g></svg>
<div class="t" style="left:969.3px;top:257.4px;font-size:12.3px;letter-spacing:0.008px;color:#cdcdcd;">Panel</div>
<svg style="left:937.5px;top:273.8px;" width="14" height="14" viewBox="0 0 16 16"><g fill="none" stroke="#c8c8c8" stroke-width="1.1" stroke-linejoin="round"><path d="M8 1 L14.5 4.5 V11.5 L8 15 L1.5 11.5 V4.5 Z"/><path d="M1.5 4.5 L8 8 L14.5 4.5 M8 8 V15"/></g></svg>
<div class="t" style="left:955.3px;top:273.4px;font-size:12.3px;letter-spacing:0.186px;color:#cdcdcd;">EventSystem</div>
<div class="a" style="left:877.0px;top:632.0px;width:613.0px;height:2.0px;background:#1a1a1a;"></div>
<div class="a" style="left:1488.0px;top:73.0px;width:2.0px;height:945.0px;background:#1a1a1a;"></div>
<!-- project -->
<div class="a" style="left:877.0px;top:634.0px;width:611.0px;height:19.0px;background:#282828;"></div>
<div class="a" style="left:877.0px;top:634.0px;width:81.0px;height:19.0px;background:#3c3c3c;border-radius:3px 3px 0 0"></div>
<svg style="left:885.0px;top:638.5px;" width="13" height="11" viewBox="0 0 13 11"><path d="M0.5 1.2 a0.8 0.8 0 0 1 .8-.8 H5 L6.3 2 H11.8 a0.8 0.8 0 0 1 .8 .8 V10 a0.6 0.6 0 0 1 -.6 .6 H1.1 a0.6 0.6 0 0 1 -.6-.6 Z" fill="#c4c4c4"/></svg>
<div class="t" style="left:901.5px;top:636.6px;font-size:12.3px;letter-spacing:0.174px;color:#d2d2d2;">Project</div>
<svg style="left:1453.5px;top:638.5px;" width="9" height="10" viewBox="0 0 9 10"><rect x="0.6" y="5" width="7.6" height="4.2" fill="none" stroke="#c4c4c4" stroke-width="1.2"/><path d="M2.2 5V3a2.1 2.1 0 0 1 4.2 0" fill="none" stroke="#c4c4c4" stroke-width="1.2"/></svg>
<svg style="left:1474.0px;top:638.0px;" width="3" height="12" viewBox="0 0 3 12"><circle cx="1.5" cy="1.5" r="1.2" fill="#c4c4c4"/><circle cx="1.5" cy="6" r="1.2" fill="#c4c4c4"/><circle cx="1.5" cy="10.5" r="1.2" fill="#c4c4c4"/></svg>
<div class="a" style="left:877.0px;top:653.0px;width:611.0px;height:21.0px;background:#3c3c3c;"></div>
<div class="a" style="left:877.0px;top:673.0px;width:611.0px;height:1.0px;background:#232323;"></div>
<svg style="left:884.0px;top:657.0px;" width="12" height="12" viewBox="0 0 12 12"><path d="M6 0V12M0 6H12" stroke="#c4c4c4" stroke-width="1.800"/></svg>
<svg style="left:900.2px;top:660.9px;" width="7.5" height="4.3" viewBox="0 0 7.5 4.3"><path d="M0 0H7.5 L3.75 4.3 Z" fill="#c4c4c4"/></svg>
<div class="fld" style="left:1022.500px;top:656px;width:300.500px;height:15px;border-radius:3px 0 0 3px"></div>
<svg style="left:1027.5px;top:659.5px;" width="8" height="8" viewBox="0 0 8 8"><circle cx="3" cy="3" r="2.300" fill="none" stroke="#aaa" stroke-width="1.200"/><path d="M4.800 4.800L7 7" stroke="#aaa" stroke-width="1.300"/></svg>
<div class="a" style="left:1323.0px;top:656.0px;width:18.0px;height:15.0px;background:#3c3c3c;border:1px solid #2a2a2a;border-radius:0 3px 3px 0"></div>
<svg style="left:1326.0px;top:657.5px;" width="11" height="10" viewBox="0 0 11 10"><rect x="3.500" y=".5" width="7" height="6.500" fill="none" stroke="#c4c4c4" stroke-width="1"/><rect x=".5" y="4" width="5" height="5.500" fill="#3c3c3c" stroke="#c4c4c4" stroke-width="1"/><path d="M5 5.500L8.500 2M6.300 1.800H8.700V4.200" fill="none" stroke="#c4c4c4" stroke-width="1"/></svg>
<div class="a" style="left:1342.5px;top:654.0px;width:1.0px;height:19.0px;background:#2c2c2c;"></div>
<div class="a" style="left:1368.5px;top:654.0px;width:1.0px;height:19.0px;background:#2c2c2c;"></div>
<div class="a" style="left:1394.5px;top:654.0px;width:1.0px;height:19.0px;background:#2c2c2c;"></div>
<div class="a" style="left:1420.5px;top:654.0px;width:1.0px;height:19.0px;background:#2c2c2c;"></div>
<div class="a" style="left:1446.5px;top:654.0px;width:1.0px;height:19.0px;background:#2c2c2c;"></div>
<svg style="left:1348.0px;top:656.0px;" width="14" height="13" viewBox="0 0 14 13"><circle cx="4" cy="9" r="3.200" fill="#c4c4c4"/><rect x="2" y="0.500" width="5" height="4.500" fill="#c4c4c4"/><path d="M7.500 9L10.500 3.500 13.500 9Z" fill="#c4c4c4"/></svg>
<svg style="left:1374.0px;top:657.0px;" width="13" height="11" viewBox="0 0 13 11"><path d="M5.500 .5H12.500V7L7 10.500 0.500 5.500Z" fill="#c4c4c4"/><circle cx="10" cy="3" r="1.100" fill="#3c3c3c"/></svg>
<svg style="left:1400.0px;top:655.5px;" width="13" height="13" viewBox="0 0 13 13"><circle cx="6.500" cy="6.500" r="6.300" fill="#c4c4c4"/><rect x="5.600" y="2.500" width="1.800" height="5.200" fill="#3c3c3c"/><rect x="5.600" y="8.800" width="1.800" height="1.800" fill="#3c3c3c"/></svg>
<svg style="left:1427.0px;top:656.0px;" width="13" height="12" viewBox="0 0 13 12"><path d="M6.500 0L8.300 4.200 12.800 4.600 9.400 7.600 10.400 12 6.500 9.700 2.600 12 3.600 7.600 .2 4.600 4.700 4.200Z" fill="#8a8a8a"/></svg>
<svg style="left:1452.5px;top:657.0px;" width="15" height="11" viewBox="0 0 15 11"><path d="M.8 5.500C3.500 1.500 10.500 1.500 13.500 5.500 10.500 9.500 3.500 9.500 .8 5.500Z" fill="none" stroke="#c4c4c4" stroke-width="1.100"/><circle cx="7.200" cy="5.500" r="1.600" fill="#c4c4c4"/><path d="M2 10.500L12.500 .5" stroke="#c4c4c4" stroke-width="1.200"/></svg>
<div class="t" style="left:1468.5px;top:655.1px;font-size:12.3px;letter-spacing:0.160px;color:#c4c4c4;">23</div>
<div class="a" style="left:877.0px;top:674.0px;width:208.0px;height:344.0px;background:#383838;"></div>
<div class="a" style="left:1085.0px;top:674.0px;width:1.0px;height:344.0px;background:#232323;"></div>
<div class="a" style="left:1086.0px;top:674.0px;width:402.0px;height:344.0px;background:#333333;"></div>
<div class="a" style="left:1086.0px;top:674.0px;width:402.0px;height:21.0px;background:#3e3e3e;"></div>
<div class="t" style="left:1090.0px;top:676.6px;font-size:12.3px;font-weight:bold;letter-spacing:0.443px;color:#cfcfcf;">Assets</div>
<div class="a" style="left:1086.0px;top:996.0px;width:402.0px;height:22.0px;background:#3c3c3c;"></div>
<div class="a" style="left:1425.0px;top:1007.0px;width:48.0px;height:1.5px;background:#5e5e5e;"></div>
<div class="a" style="left:1416.500px;top:1002.500px;width:10px;height:10px;border-radius:5px;background:#999"></div>
<svg style="left:1103.5px;top:697.5px;" width="13" height="11" viewBox="0 0 13 11"><path d="M0.5 1.2 a0.8 0.8 0 0 1 .8-.8 H5 L6.3 2 H11.8 a0.8 0.8 0 0 1 .8 .8 V10 a0.6 0.6 0 0 1 -.6 .6 H1.1 a0.6 0.6 0 0 1 -.6-.6 Z" fill="#c2c2c2"/></svg>
<div class="t" style="left:1120.5px;top:695.6px;font-size:12.3px;letter-spacing:0.678px;color:#cdcdcd;">Materials</div>
<svg style="left:1103.5px;top:713.5px;" width="13" height="11" viewBox="0 0 13 11"><path d="M0.5 1.2 a0.8 0.8 0 0 1 .8-.8 H5 L6.3 2 H11.8 a0.8 0.8 0 0 1 .8 .8 V10 a0.6 0.6 0 0 1 -.6 .6 H1.1 a0.6 0.6 0 0 1 -.6-.6 Z" fill="#c2c2c2"/></svg>
<div class="t" style="left:1120.5px;top:711.6px;font-size:12.3px;letter-spacing:0.710px;color:#cdcdcd;">Prefab</div>
<svg style="left:1103.5px;top:729.5px;" width="13" height="11" viewBox="0 0 13 11"><path d="M0.5 1.2 a0.8 0.8 0 0 1 .8-.8 H5 L6.3 2 H11.8 a0.8 0.8 0 0 1 .8 .8 V10 a0.6 0.6 0 0 1 -.6 .6 H1.1 a0.6 0.6 0 0 1 -.6-.6 Z" fill="#c2c2c2"/></svg>
<div class="t" style="left:1120.5px;top:727.6px;font-size:12.3px;letter-spacing:0.592px;color:#cdcdcd;">Samples</div>
<svg style="left:1103.5px;top:745.5px;" width="13" height="11" viewBox="0 0 13 11"><path d="M0.5 1.2 a0.8 0.8 0 0 1 .8-.8 H5 L6.3 2 H11.8 a0.8 0.8 0 0 1 .8 .8 V10 a0.6 0.6 0 0 1 -.6 .6 H1.1 a0.6 0.6 0 0 1 -.6-.6 Z" fill="#c2c2c2"/></svg>
<div class="t" style="left:1120.5px;top:743.6px;font-size:12.3px;letter-spacing:0.662px;color:#cdcdcd;">Scenes</div>
<svg style="left:1103.5px;top:761.5px;" width="13" height="11" viewBox="0 0 13 11"><path d="M0.5 1.2 a0.8 0.8 0 0 1 .8-.8 H5 L6.3 2 H11.8 a0.8 0.8 0 0 1 .8 .8 V10 a0.6 0.6 0 0 1 -.6 .6 H1.1 a0.6 0.6 0 0 1 -.6-.6 Z" fill="#c2c2c2"/></svg>
<div class="t" style="left:1120.5px;top:759.6px;font-size:12.3px;letter-spacing:0.701px;color:#cdcdcd;">Scripts</div>
<svg style="left:1103.5px;top:776.0px;" width="14" height="14" viewBox="0 0 14 14"><g fill="none" stroke="#7cc4e8" stroke-width="1"><path d="M5.500 .6L10.500 3.200V8.500L5.500 11.200 .6 8.500V3.200Z"/><path d="M.6 3.200L5.500 5.800 10.500 3.200M5.500 5.800V11.200"/></g><rect x="6.500" y="7" width="7.500" height="7" fill="#333"/><text x="6.300" y="13.300" font-family="Liberation Sans" font-size="7.500" font-weight="bold" fill="#f0683a" letter-spacing="-.3">{ }</text></svg>
<div class="t" style="left:1120.5px;top:775.6px;font-size:12.3px;letter-spacing:0.798px;color:#cdcdcd;">NetworkPrefabsList</div>
<svg style="left:881.5px;top:678.5px;" width="9" height="7" viewBox="0 0 9 7"><path d="M0 0H9 L4.5 7 Z" fill="#7a7a7a"/></svg>
<svg style="left:896.0px;top:675.5px;" width="12" height="12" viewBox="0 0 12 12"><path d="M6 0L7.700 3.900 12 4.300 8.800 7.100 9.700 11.300 6 9.100 2.300 11.300 3.200 7.100 0 4.300 4.300 3.900Z" fill="#c4c4c4"/></svg>
<div class="t" style="left:912.0px;top:674.1px;font-size:12.3px;font-weight:bold;letter-spacing:0.479px;color:#cfcfcf;">Favorites</div>
<svg style="left:909.0px;top:692.0px;" width="12" height="12" viewBox="0 0 12 12"><circle cx="5" cy="5" r="4" fill="none" stroke="#c4c4c4" stroke-width="1.100"/><path d="M8 8L11.500 11.500" stroke="#c4c4c4" stroke-width="1.400"/></svg>
<div class="t" style="left:925.0px;top:690.1px;font-size:12.3px;letter-spacing:0.155px;color:#cdcdcd;">All Materials</div>
<svg style="left:909.0px;top:708.0px;" width="12" height="12" viewBox="0 0 12 12"><circle cx="5" cy="5" r="4" fill="none" stroke="#c4c4c4" stroke-width="1.100"/><path d="M8 8L11.500 11.500" stroke="#c4c4c4" stroke-width="1.400"/></svg>
<div class="t" style="left:925.0px;top:706.1px;font-size:12.3px;letter-spacing:0.276px;color:#cdcdcd;">All Models</div>
<svg style="left:909.0px;top:724.0px;" width="12" height="12" viewBox="0 0 12 12"><circle cx="5" cy="5" r="4" fill="none" stroke="#c4c4c4" stroke-width="1.100"/><path d="M8 8L11.500 11.500" stroke="#c4c4c4" stroke-width="1.400"/></svg>
<div class="t" style="left:925.0px;top:722.1px;font-size:12.3px;letter-spacing:0.139px;color:#cdcdcd;">All Prefabs</div>
<div class="a" style="left:877.0px;top:752.5px;width:208.0px;height:16.0px;background:#4d4d4d;"></div>
<svg style="left:881.5px;top:757.5px;" width="9" height="7" viewBox="0 0 9 7"><path d="M0 0H9 L4.5 7 Z" fill="#7a7a7a"/></svg>
<svg style="left:895.0px;top:755.5px;" width="15" height="11" viewBox="0 0 15 11"><path d="M0.5 1.2a.8.8 0 0 1 .8-.8H5L6.3 2h5.2a.8.8 0 0 1 .8.8V4H3.6L1.2 9.5 .5 9.8Z" fill="#c2c2c2"/><path d="M4 4.9H14.6L12 10.6H1.3Z" fill="#c2c2c2"/></svg>
<div class="t" style="left:912.0px;top:753.1px;font-size:12.3px;font-weight:bold;letter-spacing:0.360px;color:#dcdcdc;">Assets</div>
<svg style="left:909.0px;top:771.5px;" width="13" height="11" viewBox="0 0 13 11"><path d="M0.5 1.2 a0.8 0.8 0 0 1 .8-.8 H5 L6.3 2 H11.8 a0.8 0.8 0 0 1 .8 .8 V10 a0.6 0.6 0 0 1 -.6 .6 H1.1 a0.6 0.6 0 0 1 -.6-.6 Z" fill="#c2c2c2"/></svg>
<div class="t" style="left:925.2px;top:769.1px;font-size:12.3px;letter-spacing:0.234px;color:#cdcdcd;">Materials</div>
<svg style="left:909.0px;top:787.5px;" width="13" height="11" viewBox="0 0 13 11"><path d="M0.5 1.2 a0.8 0.8 0 0 1 .8-.8 H5 L6.3 2 H11.8 a0.8 0.8 0 0 1 .8 .8 V10 a0.6 0.6 0 0 1 -.6 .6 H1.1 a0.6 0.6 0 0 1 -.6-.6 Z" fill="#c2c2c2"/></svg>
<div class="t" style="left:925.2px;top:785.1px;font-size:12.3px;letter-spacing:0.210px;color:#cdcdcd;">Prefab</div>
<svg style="left:909.0px;top:803.5px;" width="15" height="11" viewBox="0 0 15 11"><path d="M0.5 1.2a.8.8 0 0 1 .8-.8H5L6.3 2h5.2a.8.8 0 0 1 .8.8V4H3.6L1.2 9.5 .5 9.8Z" fill="#c2c2c2"/><path d="M4 4.9H14.6L12 10.6H1.3Z" fill="#c2c2c2"/></svg>
<svg style="left:895.5px;top:805.5px;" width="9" height="7" viewBox="0 0 9 7"><path d="M0 0H9 L4.5 7 Z" fill="#7a7a7a"/></svg>
<div class="t" style="left:925.2px;top:801.1px;font-size:12.3px;letter-spacing:0.092px;color:#cdcdcd;">Samples</div>
<svg style="left:923.0px;top:819.5px;" width="15" height="11" viewBox="0 0 15 11"><path d="M0.5 1.2a.8.8 0 0 1 .8-.8H5L6.3 2h5.2a.8.8 0 0 1 .8.8V4H3.6L1.2 9.5 .5 9.8Z" fill="#c2c2c2"/><path d="M4 4.9H14.6L12 10.6H1.3Z" fill="#c2c2c2"/></svg>
<svg style="left:909.5px;top:821.5px;" width="9" height="7" viewBox="0 0 9 7"><path d="M0 0H9 L4.5 7 Z" fill="#7a7a7a"/></svg>
<div class="t" style="left:939.2px;top:817.1px;font-size:12.3px;letter-spacing:0.107px;color:#cdcdcd;">ProBuilder</div>
<svg style="left:937.0px;top:835.5px;" width="15" height="11" viewBox="0 0 15 11"><path d="M0.5 1.2a.8.8 0 0 1 .8-.8H5L6.3 2h5.2a.8.8 0 0 1 .8.8V4H3.6L1.2 9.5 .5 9.8Z" fill="#c2c2c2"/><path d="M4 4.9H14.6L12 10.6H1.3Z" fill="#c2c2c2"/></svg>
<svg style="left:923.5px;top:837.5px;" width="9" height="7" viewBox="0 0 9 7"><path d="M0 0H9 L4.5 7 Z" fill="#7a7a7a"/></svg>
<div class="t" style="left:953.2px;top:833.1px;font-size:12.3px;letter-spacing:0.129px;color:#cdcdcd;">5.0.7</div>
<svg style="left:951.0px;top:851.5px;" width="15" height="11" viewBox="0 0 15 11"><path d="M0.5 1.2a.8.8 0 0 1 .8-.8H5L6.3 2h5.2a.8.8 0 0 1 .8.8V4H3.6L1.2 9.5 .5 9.8Z" fill="#c2c2c2"/><path d="M4 4.9H14.6L12 10.6H1.3Z" fill="#c2c2c2"/></svg>
<svg style="left:937.5px;top:853.5px;" width="9" height="7" viewBox="0 0 9 7"><path d="M0 0H9 L4.5 7 Z" fill="#7a7a7a"/></svg>
<div class="t" style="left:967.2px;top:849.1px;font-size:12.3px;letter-spacing:0.064px;color:#cdcdcd;">Universal Render Pip</div>
<svg style="left:965.0px;top:867.5px;" width="13" height="11" viewBox="0 0 13 11"><path d="M0.5 1.2 a0.8 0.8 0 0 1 .8-.8 H5 L6.3 2 H11.8 a0.8 0.8 0 0 1 .8 .8 V10 a0.6 0.6 0 0 1 -.6 .6 H1.1 a0.6 0.6 0 0 1 -.6-.6 Z" fill="#c2c2c2"/></svg>
<div class="t" style="left:981.2px;top:865.1px;font-size:12.3px;letter-spacing:0.219px;color:#cdcdcd;">Material</div>
<svg style="left:965.0px;top:883.5px;" width="13" height="11" viewBox="0 0 13 11"><path d="M0.5 1.2 a0.8 0.8 0 0 1 .8-.8 H5 L6.3 2 H11.8 a0.8 0.8 0 0 1 .8 .8 V10 a0.6 0.6 0 0 1 -.6 .6 H1.1 a0.6 0.6 0 0 1 -.6-.6 Z" fill="#c2c2c2"/></svg>
<div class="t" style="left:981.2px;top:881.1px;font-size:12.3px;letter-spacing:0.140px;color:#cdcdcd;">Shader</div>
<svg style="left:909.0px;top:899.5px;" width="13" height="11" viewBox="0 0 13 11"><path d="M0.5 1.2 a0.8 0.8 0 0 1 .8-.8 H5 L6.3 2 H11.8 a0.8 0.8 0 0 1 .8 .8 V10 a0.6 0.6 0 0 1 -.6 .6 H1.1 a0.6 0.6 0 0 1 -.6-.6 Z" fill="#c2c2c2"/></svg>
<div class="t" style="left:925.2px;top:897.1px;font-size:12.3px;letter-spacing:0.079px;color:#cdcdcd;">Scenes</div>
<svg style="left:909.0px;top:915.5px;" width="13" height="11" viewBox="0 0 13 11"><path d="M0.5 1.2 a0.8 0.8 0 0 1 .8-.8 H5 L6.3 2 H11.8 a0.8 0.8 0 0 1 .8 .8 V10 a0.6 0.6 0 0 1 -.6 .6 H1.1 a0.6 0.6 0 0 1 -.6-.6 Z" fill="#c2c2c2"/></svg>
<div class="t" style="left:925.2px;top:913.1px;font-size:12.3px;letter-spacing:0.273px;color:#cdcdcd;">Scripts</div>
<div class="a" style="left:1084px;top:848px;width:1px;height:16px;background:#383838"></div>
<svg style="left:883.0px;top:932.5px;" width="7" height="9" viewBox="0 0 7 9"><path d="M0 0V9 L7 4.5 Z" fill="#7a7a7a"/></svg>
<svg style="left:895.0px;top:931.5px;" width="13" height="11" viewBox="0 0 13 11"><path d="M0.5 1.2 a0.8 0.8 0 0 1 .8-.8 H5 L6.3 2 H11.8 a0.8 0.8 0 0 1 .8 .8 V10 a0.6 0.6 0 0 1 -.6 .6 H1.1 a0.6 0.6 0 0 1 -.6-.6 Z" fill="#c2c2c2"/></svg>
<div class="t" style="left:912.0px;top:929.1px;font-size:12.3px;font-weight:bold;letter-spacing:0.592px;color:#cfcfcf;">Packages</div>
<div class="a" style="left:877.0px;top:1018.0px;width:613.0px;height:2.0px;background:#1a1a1a;"></div>
<!-- insp -->
<div class="a" style="left:1490.0px;top:73.0px;width:430.0px;height:19.0px;background:#282828;"></div>
<div class="a" style="left:1490.0px;top:73.0px;width:95.0px;height:19.0px;background:#3c3c3c;border-radius:3px 3px 0 0"></div>
<div class="a" style="left:1490.0px;top:73.0px;width:95.0px;height:2.0px;background:#3a79bb;border-radius:3px 3px 0 0"></div>
<svg style="left:1499.0px;top:77.5px;" width="11" height="11" viewBox="0 0 11 11"><circle cx="5.500" cy="5.500" r="5.500" fill="#c4c4c4"/><rect x="4.600" y="4.600" width="1.900" height="4.200" fill="#3c3c3c"/><rect x="4.600" y="2" width="1.900" height="1.800" fill="#3c3c3c"/></svg>
<div class="t" style="left:1514.5px;top:75.6px;font-size:12.3px;letter-spacing:0.268px;color:#d2d2d2;">Inspector</div>
<svg style="left:1884.5px;top:77.0px;" width="9" height="10" viewBox="0 0 9 10"><rect x="0.6" y="5" width="7.6" height="4.2" fill="none" stroke="#c4c4c4" stroke-width="1.2"/><path d="M2.2 5V3a2.1 2.1 0 0 1 4.2 0" fill="none" stroke="#c4c4c4" stroke-width="1.2"/></svg>
<svg style="left:1905.0px;top:76.5px;" width="3" height="12" viewBox="0 0 3 12"><circle cx="1.5" cy="1.5" r="1.2" fill="#c4c4c4"/><circle cx="1.5" cy="6" r="1.2" fill="#c4c4c4"/><circle cx="1.5" cy="10.5" r="1.2" fill="#c4c4c4"/></svg>
<div class="a" style="left:1490.0px;top:92.0px;width:430.0px;height:926.0px;background:#383838;"></div>
<div class="a" style="left:1490.0px;top:92.0px;width:430.0px;height:59.0px;background:#3c3c3c;"></div>
<svg style="left:1496.5px;top:101.5px;" width="22" height="22" viewBox="0 0 16 16"><g fill="none" stroke="#c8c8c8" stroke-width="1" stroke-linejoin="round"><path d="M8 1 L14.5 4.5 V11.5 L8 15 L1.5 11.5 V4.5 Z"/><path d="M1.5 4.5 L8 8 L14.5 4.5 M8 8 V15"/></g></svg>
<svg style="left:1516.0px;top:123.0px;" width="7" height="4" viewBox="0 0 7 4"><path d="M0 0H7 L3.5 4 Z" fill="#c4c4c4"/></svg>
<div class="cb" style="left:1538.0px;top:103.0px"></div>
<svg style="left:1538.0px;top:103.0px;" width="14" height="14" viewBox="0 0 14 14"><path d="M3.2 7.2 L5.8 9.8 L11 4.2" fill="none" stroke="#e0e0e0" stroke-width="1.6"/></svg>
<div class="fld" style="left:1558px;top:101px;width:280px;height:18px;line-height:16px;border:1px solid #3a79bb;font-weight:bold;color:#e4e4e4;letter-spacing:.45px;padding-left:2px;padding-top:1px">Panel</div>
<div class="cb" style="left:1842px;top:103px"></div>
<div class="t" style="left:1861.0px;top:102.6px;font-size:12.3px;letter-spacing:0.290px;color:#c4c4c4;">Static</div>
<svg style="left:1905.5px;top:108.5px;" width="7" height="4" viewBox="0 0 7 4"><path d="M0 0H7 L3.5 4 Z" fill="#c4c4c4"/></svg>
<div class="t" style="left:1530.0px;top:126.1px;font-size:12.3px;letter-spacing:0.390px;color:#c4c4c4;">Tag</div>
<div class="dd" style="left:1557.500px;top:126px;width:159px"></div>
<div class="t" style="left:1561.5px;top:126.1px;font-size:12.3px;letter-spacing:0.207px;color:#e4e4e4;">Untagged</div>
<svg style="left:1703.5px;top:132.0px;" width="7" height="4" viewBox="0 0 7 4"><path d="M0 0H7 L3.5 4 Z" fill="#c4c4c4"/></svg>
<div class="t" style="left:1729.0px;top:126.1px;font-size:12.3px;letter-spacing:0.047px;color:#c4c4c4;">Layer</div>
<div class="dd" style="left:1768px;top:126px;width:148px"></div>
<div class="t" style="left:1771.5px;top:126.1px;font-size:12.3px;letter-spacing:-0.400px;color:#e4e4e4;">UI</div>
<svg style="left:1902.5px;top:132.0px;" width="7" height="4" viewBox="0 0 7 4"><path d="M0 0H7 L3.5 4 Z" fill="#c4c4c4"/></svg>
<div class="hdr" style="top:151px"></div>
<svg style="left:1496.0px;top:159.0px;" width="9" height="7" viewBox="0 0 9 7"><path d="M0 0H9 L4.5 7 Z" fill="#7a7a7a"/></svg>
<svg style="left:1511.0px;top:156.0px;" width="13" height="12" viewBox="0 0 13 12"><path d="M0 0L4.500 1.500 1.500 4.500ZM13 0L11.500 4.500 8.500 1.500ZM0 12L1.500 7.500 4.500 10.500ZM13 12L8.500 10.500 11.500 7.500Z" fill="#c4c4c4"/></svg>
<div class="t" style="left:1550.0px;top:155.1px;font-size:12.3px;font-weight:bold;letter-spacing:0.591px;color:#dcdcdc;">Rect Transform</div>
<svg style="left:1861.0px;top:156.5px;" width="11" height="11" viewBox="0 0 11 11"><circle cx="5.500" cy="5.500" r="5.500" fill="#c4c4c4"/><text x="5.500" y="9" font-family="Liberation Sans" font-weight="bold" font-size="9" text-anchor="middle" fill="#3e3e3e">?</text></svg>
<svg style="left:1881.0px;top:156.5px;" width="12" height="11" viewBox="0 0 12 11"><path d="M0 2.500H12M0 8.500H12" stroke="#c4c4c4" stroke-width="1.200"/><path d="M8 .3V4.700M4 6.300V10.700" stroke="#c4c4c4" stroke-width="1.600"/><path d="M6.300 2.500H9.700M2.300 8.500H5.700" stroke="#3e3e3e" stroke-width="0"/></svg>
<svg style="left:1905.0px;top:156.0px;" width="3" height="12" viewBox="0 0 3 12"><circle cx="1.5" cy="1.5" r="1.2" fill="#c4c4c4"/><circle cx="1.5" cy="6" r="1.2" fill="#c4c4c4"/><circle cx="1.5" cy="10.5" r="1.2" fill="#c4c4c4"/></svg>
<div class="t" style="left:1525.5px;top:180.6px;font-size:11.5px;letter-spacing:0.165px;color:#c4c4c4;">left</div>
<svg style="left:1496.0px;top:205.0px;" width="16" height="26" viewBox="0 0 16 26"><text transform="translate(12.5 21.5) rotate(-90)" font-family="Liberation Sans" font-size="11.5" fill="#c4c4c4" letter-spacing=".2">top</text></svg>
<div class="a" style="left:1517.500px;top:200.500px;width:35px;height:35px;border:1px solid #6a6a6a;border-top-color:#c0504d;border-left-color:#c0504d"></div>
<div class="a" style="left:1526px;top:210px;width:18px;height:18px;border:1.500px solid #c4c4c4"></div>
<div class="a" style="left:1516.0px;top:199.5px;width:3.5px;height:3.5px;background:#e0a800;"></div>
<div class="t" style="left:1661.0px;top:180.6px;font-size:12.3px;letter-spacing:0.337px;color:#c4c4c4;">Pos X</div>
<div class="fld" style="left:1660.5px;top:197.5px;width:83.0px;height:17px;line-height:15px;color:#d2d2d2;">15</div>
<div class="t" style="left:1747.0px;top:180.6px;font-size:12.3px;letter-spacing:-0.019px;color:#c4c4c4;">Pos Y</div>
<div class="fld" style="left:1746.5px;top:197.5px;width:83.0px;height:17px;line-height:15px;color:#d2d2d2;">-30</div>
<div class="t" style="left:1833.0px;top:180.6px;font-size:12.3px;letter-spacing:0.175px;color:#c4c4c4;">Pos Z</div>
<div class="fld" style="left:1832.5px;top:197.5px;width:83.0px;height:17px;line-height:15px;color:#d2d2d2;">0</div>
<div class="t" style="left:1661.0px;top:217.1px;font-size:12.3px;letter-spacing:0.512px;color:#c4c4c4;">Width</div>
<div class="fld" style="left:1660.5px;top:233.5px;width:83.0px;height:17px;line-height:15px;color:#d2d2d2;">200</div>
<div class="t" style="left:1747.0px;top:217.1px;font-size:12.3px;letter-spacing:0.408px;color:#c4c4c4;">Height</div>
<div class="fld" style="left:1746.5px;top:233.5px;width:83.0px;height:17px;line-height:15px;color:#d2d2d2;">200</div>
<div class="a" style="left:1865.0px;top:233.0px;width:25.0px;height:18.0px;background:#515151;border:1px solid #2e2e2e;border-radius:3px 0 0 3px"></div>
<div class="a" style="left:1890.0px;top:233.0px;width:25.0px;height:18.0px;background:#515151;border:1px solid #2e2e2e;border-left:none;border-radius:0 3px 3px 0"></div>
<svg style="left:1871.5px;top:236.5px;" width="12" height="11" viewBox="0 0 12 11"><rect x=".5" y=".5" width="11" height="10" fill="none" stroke="#8a8a8a" stroke-width="1" stroke-dasharray="2 1.500"/></svg>
<div class="t" style="left:1898.0px;top:234.6px;font-size:11.0px;color:#8a8a8a;">R</div>
<svg style="left:1496.5px;top:259.0px;" width="9" height="7" viewBox="0 0 9 7"><path d="M0 0H9 L4.5 7 Z" fill="#7a7a7a"/></svg>
<div class="t" style="left:1509.0px;top:254.6px;font-size:12.3px;letter-spacing:0.268px;color:#c4c4c4;">Anchors</div>
<div class="t" style="left:1524.5px;top:272.6px;font-size:12.3px;letter-spacing:0.060px;color:#c4c4c4;">Min</div>
<div class="t" style="left:1661.0px;top:272.6px;font-size:12.3px;color:#c4c4c4;">X</div>
<div class="fld" style="left:1673.5px;top:271.5px;width:70.0px;height:17px;line-height:15px;color:#d2d2d2;">0</div>
<div class="t" style="left:1747.5px;top:272.6px;font-size:12.3px;color:#c4c4c4;">Y</div>
<div class="fld" style="left:1759.5px;top:271.5px;width:70.0px;height:17px;line-height:15px;color:#d2d2d2;">1</div>
<div class="t" style="left:1524.5px;top:292.6px;font-size:12.3px;letter-spacing:0.088px;color:#c4c4c4;">Max</div>
<div class="t" style="left:1661.0px;top:292.6px;font-size:12.3px;color:#c4c4c4;">X</div>
<div class="fld" style="left:1673.5px;top:291.5px;width:70.0px;height:17px;line-height:15px;color:#d2d2d2;">0</div>
<div class="t" style="left:1747.5px;top:292.6px;font-size:12.3px;color:#c4c4c4;">Y</div>
<div class="fld" style="left:1759.5px;top:291.5px;width:70.0px;height:17px;line-height:15px;color:#d2d2d2;">1</div>
<div class="t" style="left:1509.0px;top:314.6px;font-size:12.3px;letter-spacing:0.231px;color:#c4c4c4;">Pivot</div>
<div class="t" style="left:1661.0px;top:314.6px;font-size:12.3px;color:#c4c4c4;">X</div>
<div class="fld" style="left:1673.5px;top:313.5px;width:70.0px;height:17px;line-height:15px;color:#d2d2d2;">0</div>
<div class="t" style="left:1747.5px;top:314.6px;font-size:12.3px;color:#c4c4c4;">Y</div>
<div class="fld" style="left:1759.5px;top:313.5px;width:70.0px;height:17px;line-height:15px;color:#d2d2d2;">1</div>
<div class="t" style="left:1509.0px;top:342.6px;font-size:12.3px;letter-spacing:0.211px;color:#c4c4c4;">Rotation</div>
<div class="t" style="left:1664.0px;top:342.6px;font-size:12.3px;color:#c4c4c4;">X</div>
<div class="fld" style="left:1680.5px;top:341.5px;width:63.5px;height:17px;line-height:15px;color:#d2d2d2;">0</div>
<div class="t" style="left:1750.0px;top:342.6px;font-size:12.3px;color:#c4c4c4;">Y</div>
<div class="fld" style="left:1765.5px;top:341.5px;width:63.5px;height:17px;line-height:15px;color:#d2d2d2;">0</div>
<div class="t" style="left:1835.0px;top:342.6px;font-size:12.3px;color:#c4c4c4;">Z</div>
<div class="fld" style="left:1851.5px;top:341.5px;width:64.0px;height:17px;line-height:15px;color:#d2d2d2;">0</div>
<div class="t" style="left:1509.0px;top:362.6px;font-size:12.3px;letter-spacing:0.046px;color:#c4c4c4;">Scale</div>
<div class="t" style="left:1664.0px;top:362.6px;font-size:12.3px;color:#c4c4c4;">X</div>
<div class="fld" style="left:1680.5px;top:361.5px;width:63.5px;height:17px;line-height:15px;color:#d2d2d2;">1</div>
<div class="t" style="left:1750.0px;top:362.6px;font-size:12.3px;color:#c4c4c4;">Y</div>
<div class="fld" style="left:1765.5px;top:361.5px;width:63.5px;height:17px;line-height:15px;color:#d2d2d2;">1</div>
<div class="t" style="left:1835.0px;top:362.6px;font-size:12.3px;color:#c4c4c4;">Z</div>
<div class="fld" style="left:1851.5px;top:361.5px;width:64.0px;height:17px;line-height:15px;color:#d2d2d2;">1</div>
<svg style="left:1641.5px;top:365.0px;" width="14" height="10" viewBox="0 0 14 10"><path d="M5.500 2.500H3.500a2.500 2.500 0 0 0 0 5H5.500M8.500 2.500H10.500a2.500 2.500 0 0 1 0 5H8.500" fill="none" stroke="#c4c4c4" stroke-width="1.100"/><path d="M2 9.500L12 .5" stroke="#c4c4c4" stroke-width="1.100"/></svg>
<div class="hdr" style="top:387.500px"></div>
<svg style="left:1496.0px;top:396.0px;" width="9" height="7" viewBox="0 0 9 7"><path d="M0 0H9 L4.5 7 Z" fill="#7a7a7a"/></svg>
<svg style="left:1510.0px;top:393.0px;" width="16" height="12" viewBox="0 0 16 12"><path d="M.8 6C3.500 1 12.500 1 15.200 6 12.500 11 3.500 11 .8 6Z" fill="none" stroke="#c4c4c4" stroke-width="1.200"/><circle cx="8" cy="6" r="2.600" fill="none" stroke="#c4c4c4" stroke-width="1.200"/></svg>
<div class="t" style="left:1550.0px;top:391.6px;font-size:12.3px;font-weight:bold;letter-spacing:0.588px;color:#dcdcdc;">Canvas Renderer</div>
<svg style="left:1861.0px;top:393.5px;" width="11" height="11" viewBox="0 0 11 11"><circle cx="5.500" cy="5.500" r="5.500" fill="#c4c4c4"/><text x="5.500" y="9" font-family="Liberation Sans" font-weight="bold" font-size="9" text-anchor="middle" fill="#3e3e3e">?</text></svg>
<svg style="left:1881.0px;top:393.5px;" width="12" height="11" viewBox="0 0 12 11"><path d="M0 2.500H12M0 8.500H12" stroke="#c4c4c4" stroke-width="1.200"/><path d="M8 .3V4.700M4 6.300V10.700" stroke="#c4c4c4" stroke-width="1.600"/><path d="M6.300 2.500H9.700M2.300 8.500H5.700" stroke="#3e3e3e" stroke-width="0"/></svg>
<svg style="left:1905.0px;top:393.0px;" width="3" height="12" viewBox="0 0 3 12"><circle cx="1.5" cy="1.5" r="1.2" fill="#c4c4c4"/><circle cx="1.5" cy="6" r="1.2" fill="#c4c4c4"/><circle cx="1.5" cy="10.5" r="1.2" fill="#c4c4c4"/></svg>
<div class="t" style="left:1509.0px;top:416.1px;font-size:12.3px;letter-spacing:0.227px;color:#c4c4c4;">Cull Transparent Mesh</div>
<div class="cb" style="left:1663.5px;top:416.5px"></div>
<svg style="left:1663.5px;top:416.5px;" width="14" height="14" viewBox="0 0 14 14"><path d="M3.2 7.2 L5.8 9.8 L11 4.2" fill="none" stroke="#e0e0e0" stroke-width="1.6"/></svg>
<div class="hdr" style="top:441px"></div>
<svg style="left:1496.0px;top:449.5px;" width="9" height="7" viewBox="0 0 9 7"><path d="M0 0H9 L4.5 7 Z" fill="#7a7a7a"/></svg>
<svg style="left:1510.5px;top:446.0px;" width="14" height="12" viewBox="0 0 14 12"><rect x="2.500" y="2" width="9" height="8" fill="none" stroke="#c4c4c4" stroke-width="1.200"/><path d="M3.500 9L6 6 7.500 7.500 9 6.500 10.500 9Z" fill="#c4c4c4"/><circle cx="9" cy="4.500" r=".9" fill="#c4c4c4"/><path d="M0 0H2.500V2.500H0ZM11.500 0H14V2.500H11.500ZM0 9.500H2.500V12H0ZM11.500 9.500H14V12H11.500Z" fill="#c4c4c4"/></svg>
<div class="cb" style="left:1530.0px;top:445.5px"></div>
<svg style="left:1530.0px;top:445.5px;" width="14" height="14" viewBox="0 0 14 14"><path d="M3.2 7.2 L5.8 9.8 L11 4.2" fill="none" stroke="#e0e0e0" stroke-width="1.6"/></svg>
<div class="t" style="left:1550.0px;top:445.1px;font-size:12.3px;font-weight:bold;letter-spacing:0.591px;color:#dcdcdc;">Image</div>
<svg style="left:1861.0px;top:447.0px;" width="11" height="11" viewBox="0 0 11 11"><circle cx="5.500" cy="5.500" r="5.500" fill="#c4c4c4"/><text x="5.500" y="9" font-family="Liberation Sans" font-weight="bold" font-size="9" text-anchor="middle" fill="#3e3e3e">?</text></svg>
<svg style="left:1881.0px;top:447.0px;" width="12" height="11" viewBox="0 0 12 11"><path d="M0 2.500H12M0 8.500H12" stroke="#c4c4c4" stroke-width="1.200"/><path d="M8 .3V4.700M4 6.300V10.700" stroke="#c4c4c4" stroke-width="1.600"/><path d="M6.300 2.500H9.700M2.300 8.500H5.700" stroke="#3e3e3e" stroke-width="0"/></svg>
<svg style="left:1905.0px;top:446.5px;" width="3" height="12" viewBox="0 0 3 12"><circle cx="1.5" cy="1.5" r="1.2" fill="#c4c4c4"/><circle cx="1.5" cy="6" r="1.2" fill="#c4c4c4"/><circle cx="1.5" cy="10.5" r="1.2" fill="#c4c4c4"/></svg>
<div class="t" style="left:1509.0px;top:469.1px;font-size:12.3px;letter-spacing:0.119px;color:#c4c4c4;">Source Image</div>
<div class="fld" style="left:1663.5px;top:468.0px;width:250.5px;height:17px;line-height:15px;color:#d2d2d2;">None (Sprite)</div>
<div class="a" style="left:1896.0px;top:469.0px;width:17.0px;height:15.0px;background:#373737;border-radius:0 2px 2px 0"></div>
<svg style="left:1899.5px;top:471.0px;" width="11" height="11" viewBox="0 0 11 11"><circle cx="5.500" cy="5.500" r="4.700" fill="none" stroke="#c4c4c4" stroke-width="1.100"/><circle cx="5.500" cy="5.500" r="1.600" fill="#c4c4c4"/></svg>
<div class="t" style="left:1509.0px;top:489.1px;font-size:12.3px;letter-spacing:0.121px;color:#c4c4c4;">Color</div>
<div class="a" style="left:1663.5px;top:488.5px;width:233.0px;height:12.5px;background:#4a4a4a;border-radius:2px 0 0 0"></div>
<div class="a" style="left:1663.5px;top:500.5px;width:132.5px;height:3.5px;background:#ffffff;"></div>
<div class="a" style="left:1796.0px;top:500.5px;width:100.5px;height:3.5px;background:#000000;"></div>
<div class="a" style="left:1896.5px;top:488.5px;width:17.5px;height:15.5px;background:#3a3a3a;border-radius:0 2px 2px 0"></div>
<svg style="left:1900.0px;top:490.5px;" width="11" height="12" viewBox="0 0 11 12"><path d="M9.800 1.200a1.700 1.700 0 0 0-2.500 0L5.800 2.700 5 2 4 3 9 8 10 7 9.300 6.200 10.800 4.700a1.700 1.700 0 0 0-1-3.500ZM4.600 4.600L1 8.200V10L0 11.500 .5 12 2 11H3.800L7.400 7.400Z" fill="#c4c4c4"/></svg>
<div class="t" style="left:1509.0px;top:509.1px;font-size:12.3px;letter-spacing:0.157px;color:#c4c4c4;">Material</div>
<div class="fld" style="left:1663.5px;top:508.0px;width:250.5px;height:17px;line-height:15px;color:#d2d2d2;">None (Material)</div>
<div class="a" style="left:1896.0px;top:509.0px;width:17.0px;height:15.0px;background:#373737;border-radius:0 2px 2px 0"></div>
<svg style="left:1899.5px;top:511.0px;" width="11" height="11" viewBox="0 0 11 11"><circle cx="5.500" cy="5.500" r="4.700" fill="none" stroke="#c4c4c4" stroke-width="1.100"/><circle cx="5.500" cy="5.500" r="1.600" fill="#c4c4c4"/></svg>
<div class="t" style="left:1509.0px;top:529.1px;font-size:12.3px;letter-spacing:0.300px;color:#c4c4c4;">Raycast Target</div>
<div class="cb" style="left:1663.5px;top:529.5px"></div>
<svg style="left:1663.5px;top:529.5px;" width="14" height="14" viewBox="0 0 14 14"><path d="M3.2 7.2 L5.8 9.8 L11 4.2" fill="none" stroke="#e0e0e0" stroke-width="1.6"/></svg>
<svg style="left:1497.5px;top:552.5px;" width="7" height="9" viewBox="0 0 7 9"><path d="M0 0V9 L7 4.5 Z" fill="#7a7a7a"/></svg>
<div class="t" style="left:1509.0px;top:549.1px;font-size:12.3px;letter-spacing:0.134px;color:#c4c4c4;">Raycast Padding</div>
<div class="t" style="left:1509.0px;top:571.1px;font-size:12.3px;letter-spacing:0.170px;color:#c4c4c4;">Maskable</div>
<div class="cb" style="left:1663.5px;top:571.5px"></div>
<svg style="left:1663.5px;top:571.5px;" width="14" height="14" viewBox="0 0 14 14"><path d="M3.2 7.2 L5.8 9.8 L11 4.2" fill="none" stroke="#e0e0e0" stroke-width="1.6"/></svg>
<div class="sep" style="top:595px"></div>
<div class="a" style="left:1490.0px;top:596.0px;width:430.0px;height:54.0px;background:#3c3c3c;"></div>
<div class="a" style="left:1510.0px;top:606.0px;width:24.5px;height:24.5px;background:#ffffff;"></div>
<div class="t" style="left:1546.0px;top:601.6px;font-size:12.8px;letter-spacing:0.430px;color:#8f8f8f;">Default UI Material (Material)</div>
<svg style="left:1890.0px;top:603.5px;" width="11" height="11" viewBox="0 0 11 11"><circle cx="5.500" cy="5.500" r="5.500" fill="#c4c4c4"/><text x="5.500" y="9" font-family="Liberation Sans" font-weight="bold" font-size="9" text-anchor="middle" fill="#3c3c3c">?</text></svg>
<svg style="left:1910.0px;top:603.0px;" width="3" height="12" viewBox="0 0 3 12"><circle cx="1.5" cy="1.5" r="1.2" fill="#c4c4c4"/><circle cx="1.5" cy="6" r="1.2" fill="#c4c4c4"/><circle cx="1.5" cy="10.5" r="1.2" fill="#c4c4c4"/></svg>
<div class="t" style="left:1543.0px;top:625.6px;font-size:12.3px;letter-spacing:0.056px;color:#7c7c7c;">Shader</div>
<div class="dd" style="left:1595px;top:625px;width:224px;background:#444;border-color:#363636"></div>
<div class="t" style="left:1598.5px;top:625.6px;font-size:12.3px;letter-spacing:0.281px;color:#7c7c7c;">UI/Default</div>
<svg style="left:1806.5px;top:632.0px;" width="7" height="4" viewBox="0 0 7 4"><path d="M0 0H7 L3.5 4 Z" fill="#7a7a7a"/></svg>
<div class="dd" style="left:1824px;top:625px;width:45px;background:#585858"></div>
<div class="t" style="left:1830.0px;top:625.6px;font-size:12.3px;letter-spacing:0.079px;color:#e4e4e4;">Edit...</div>
<div class="dd" style="left:1873px;top:625px;width:42.500px;background:#585858"></div>
<svg style="left:1881.5px;top:628.5px;" width="11" height="9" viewBox="0 0 11 9"><path d="M3.500 1H11M3.500 4.500H11M3.500 8H11" stroke="#c4c4c4" stroke-width="1.200"/><path d="M0 1H2M1 0V2M.3 4.500H1.700M.3 8H1.700" stroke="#c4c4c4" stroke-width="1"/></svg>
<svg style="left:1902.5px;top:632.0px;" width="7" height="4" viewBox="0 0 7 4"><path d="M0 0H7 L3.5 4 Z" fill="#c4c4c4"/></svg>
<svg style="left:1497.0px;top:635.0px;" width="7" height="9" viewBox="0 0 7 9"><path d="M0 0V9 L7 4.5 Z" fill="#7a7a7a"/></svg>
<div class="sep" style="top:650px"></div>
<div class="sep" style="top:661px"></div>
<div class="a" style="left:1591.0px;top:671.0px;width:228.0px;height:22.5px;background:#585858;border:1px solid #303030;border-radius:3px"></div>
<div class="t" style="left:1658.5px;top:674.6px;font-size:12.3px;letter-spacing:0.316px;color:#e4e4e4;">Add Component</div>
<div class="a" style="left:1490.0px;top:836.0px;width:430.0px;height:1.0px;background:#232323;"></div>
<div class="a" style="left:1490.0px;top:837.0px;width:430.0px;height:20.5px;background:#3c3c3c;"></div>
<div class="a" style="left:1490.0px;top:857.0px;width:430.0px;height:1.0px;background:#232323;"></div>
<div class="a" style="left:1490.0px;top:858.0px;width:430.0px;height:153.5px;background:#313131;"></div>
<div class="a" style="left:1494.0px;top:837.0px;width:1.0px;height:20.0px;background:#2e2e2e;"></div>
<div class="a" style="left:1548.5px;top:837.0px;width:1.0px;height:20.0px;background:#2e2e2e;"></div>
<div class="a" style="left:1903.0px;top:837.0px;width:1.0px;height:20.0px;background:#2e2e2e;"></div>
<div class="t" style="left:1497.5px;top:839.6px;font-size:12.3px;font-weight:bold;letter-spacing:0.137px;color:#c8c8c8;">Panel</div>
<svg style="left:1536.0px;top:845.5px;" width="7" height="4" viewBox="0 0 7 4"><path d="M0 0H7 L3.5 4 Z" fill="#c4c4c4"/></svg>
<div class="a" style="left:1552.0px;top:846.0px;width:349.0px;height:1.0px;background:#555;"></div>
<div class="a" style="left:1552.0px;top:848.0px;width:349.0px;height:1.0px;background:#555;"></div>
<svg style="left:1910.0px;top:841.0px;" width="3" height="12" viewBox="0 0 3 12"><circle cx="1.5" cy="1.5" r="1.2" fill="#c4c4c4"/><circle cx="1.5" cy="6" r="1.2" fill="#c4c4c4"/><circle cx="1.5" cy="10.5" r="1.2" fill="#c4c4c4"/></svg>
<div class="t" style="left:1687.5px;top:978.1px;font-size:12.3px;font-weight:bold;letter-spacing:0.437px;color:#c8c8c8;text-shadow:0 1px 1px #000;">Panel</div>
<div class="t" style="left:1654.0px;top:992.6px;font-size:12.3px;font-weight:bold;letter-spacing:0.726px;color:#c8c8c8;text-shadow:0 1px 1px #000;">Image Size: 0x0</div>
<div class="a" style="left:1490.0px;top:1011.0px;width:430.0px;height:1.0px;background:#232323;"></div>
<div class="a" style="left:1490.0px;top:1012.0px;width:430.0px;height:6.0px;background:#3c3c3c;"></div>
<div class="a" style="left:1488.0px;top:1018.0px;width:432.0px;height:2.0px;background:#1a1a1a;"></div>
<!-- taskbar -->
<div class="a" style="left:0.0px;top:1020.0px;width:1920.0px;height:20.0px;background:#191919;"></div>
<div class="a" style="left:1814.5px;top:1020.0px;width:1.0px;height:20.0px;background:#232323;"></div>
<div class="a" style="left:1840.0px;top:1020.0px;width:1.0px;height:20.0px;background:#232323;"></div>
<div class="a" style="left:1867.0px;top:1020.0px;width:1.0px;height:20.0px;background:#232323;"></div>
<div class="a" style="left:1894.0px;top:1020.0px;width:1.0px;height:20.0px;background:#232323;"></div>
<svg style="left:1820.0px;top:1023.0px;" width="14" height="14" viewBox="0 0 14 14"><ellipse cx="7" cy="8" rx="3.400" ry="4.400" fill="#b8b8b8"/><circle cx="7" cy="3.200" r="1.900" fill="#b8b8b8"/><path d="M1 4L4 6M13 4L10 6M.5 8.500H3.500M13.500 8.500H10.500M1.500 13L4 10.500M12.500 13L10 10.500" stroke="#b8b8b8" stroke-width="1.100"/><path d="M1 1L13 13.500" stroke="#191919" stroke-width="2.200"/><path d="M1.500 .5L13.500 13" stroke="#b8b8b8" stroke-width="1.100"/></svg>
<svg style="left:1846.5px;top:1023.0px;" width="14" height="14" viewBox="0 0 14 14"><ellipse cx="7" cy="3" rx="5.500" ry="2.300" fill="#b8b8b8"/><path d="M1.500 5C3 7 11 7 12.500 5V7.500C11 9.500 3 9.500 1.500 7.500ZM1.500 9C3 11 11 11 12.500 9V11.500C11 13.500 3 13.500 1.500 11.500Z" fill="#b8b8b8"/><path d="M1 1L13 13.500" stroke="#191919" stroke-width="2.200"/><path d="M1.500 .5L13.500 13" stroke="#b8b8b8" stroke-width="1.100"/></svg>
<svg style="left:1873.0px;top:1023.0px;" width="14" height="14" viewBox="0 0 14 14"><path d="M2 7A5 5 0 0 1 11 4M12 7A5 5 0 0 1 3 10" fill="none" stroke="#b8b8b8" stroke-width="1.400"/><path d="M11.800 1V4.800H8M2.200 13V9.200H6" fill="none" stroke="#b8b8b8" stroke-width="1.300"/><circle cx="7" cy="7" r="1.300" fill="#b8b8b8"/><path d="M1 1L13 13.500" stroke="#191919" stroke-width="2.200"/><path d="M1.500 .5L13.500 13" stroke="#b8b8b8" stroke-width="1.100"/></svg>
<svg style="left:1899.0px;top:1023.0px;" width="14" height="14" viewBox="0 0 14 14"><circle cx="7" cy="7" r="6.200" fill="none" stroke="#b8b8b8" stroke-width="1.100"/><path d="M4 7.300L6.200 9.300 10 5" fill="none" stroke="#b8b8b8" stroke-width="1.400"/></svg>
<div class="a" style="left:0.0px;top:1040.0px;width:1920.0px;height:40.0px;background:#1c1c1c;"></div>
<svg style="left:16.0px;top:1052.0px;" width="16" height="16" viewBox="0 0 16 16"><path d="M0 2.300L6.500 1.400V7.600H0ZM7.300 1.300L16 0V7.600H7.300ZM0 8.400H6.500V14.600L0 13.700ZM7.300 8.400H16V16L7.300 14.700Z" fill="#fff"/></svg>
<div class="a" style="left:48.5px;top:1040.0px;width:287.5px;height:40.0px;background:#333333;border:1px solid #5a5a5a;border-bottom:none"></div>
<svg style="left:60.0px;top:1052.0px;" width="16" height="16" viewBox="0 0 16 16"><circle cx="10" cy="6" r="5.200" fill="none" stroke="#f0f0f0" stroke-width="1.400"/><path d="M6.300 9.700L.7 15.300" stroke="#f0f0f0" stroke-width="1.500"/></svg>
<div class="t" style="left:88.3px;top:1053.1px;font-size:14.8px;letter-spacing:-0.194px;color:#ededed;height:20px;line-height:20px;margin-top:-2px">Escriu aquí per cercar</div>
<svg style="left:257.0px;top:1043.0px;" width="79" height="37" viewBox="0 0 79 37"><path d="M12 22H79V37H0Z" fill="#d9b78a"/><path d="M12 22H79V24H10Z" fill="#e8cda6"/><g transform="translate(12 6) rotate(-8 14 12)"><path d="M0 5L13 8 27 4 28 19 14 24 1 20Z" fill="#3a9a4c"/><path d="M1.500 4L13 7V22L2 18.500Z" fill="#f4f4f0"/><path d="M13 7L26 3 26.500 17.500 13 22Z" fill="#fafaf6"/><path d="M3.500 8L11 10M3.700 11L11 13M4 14L11 16M15 9L24 6.500M15 12L24 9.500M15 15L24 12.500" stroke="#b9b9b0" stroke-width=".8"/></g><path d="M31 11L37 4 40 6.500 34 13.500 30.500 14.500Z" fill="#f0a23a"/><path d="M37 4L38.500 2.300 41.500 4.800 40 6.500Z" fill="#e8524a"/><g transform="translate(48 0)"><path d="M7 4a4 4 0 0 1 8 0" fill="none" stroke="#2a6fdb" stroke-width="2"/><rect x="1" y="4" width="20" height="26" rx="8" fill="#2f80ed"/><rect x="3.500" y="15" width="15" height="13" rx="5" fill="#1d5fc4"/><path d="M3.500 23h15" stroke="#b36fe8" stroke-width="1.500"/><rect x="0" y="12" width="3" height="12" rx="1.500" fill="#1d5fc4"/><rect x="19" y="12" width="3" height="12" rx="1.500" fill="#1d5fc4"/></g></svg>
<div class="a" style="left:352.500px;top:1052.500px;width:15px;height:15px;border-radius:8px;border:2.200px solid #fff"></div>
<svg style="left:399.5px;top:1052.5px;" width="16" height="15" viewBox="0 0 16 15"><rect x="1.500" y="4" width="9" height="7" fill="none" stroke="#fff" stroke-width="1.300"/><path d="M1 1H11M1 14H11" stroke="#fff" stroke-width="1.300"/><path d="M14 0V3M14 5V15" stroke="#fff" stroke-width="1.600"/><path d="M12 6H13.500" stroke="#fff" stroke-width="1.300"/></svg>
<svg style="left:447.0px;top:1048.0px;" width="24" height="24" viewBox="0 0 24 24"><rect width="24" height="24" rx="3.500" fill="#f37a20"/><path d="M6.500 6.500C9 5.500 10.500 7.500 12 9.500 13.500 7.500 15 5.500 17.500 6.500 20 8 19 11 17 12 19 13 20 16 17.500 17.500 15 18.500 13.500 16.500 12 14.500 10.500 16.500 9 18.500 6.500 17.500 4 16 5 13 7 12 5 11 4 8 6.500 6.500Z" fill="#fff"/><path d="M8 9.200C9 9 9.500 9.800 10 10.500H8.500C7.500 10.500 7.300 9.500 8 9.200ZM16 9.200C15 9 14.500 9.800 14 10.500H15.500C16.500 10.500 16.700 9.500 16 9.200ZM8 14.800C9 15 9.500 14.200 10 13.500H8.500C7.500 13.500 7.300 14.500 8 14.800ZM16 14.800C15 15 14.500 14.200 14 13.500H15.500C16.500 13.500 16.700 14.500 16 14.800Z" fill="#f37a20"/></svg>
<svg style="left:497.0px;top:1050.0px;" width="22" height="19" viewBox="0 0 22 19"><path d="M0 2.500A1.500 1.500 0 0 1 1.500 1H7L9 3H20.500A1.500 1.500 0 0 1 22 4.500V6H0Z" fill="#e0a42c"/><rect y="4.500" width="22" height="13" rx="1" fill="#fbd464"/><path d="M0 9H22V16.500A1 1 0 0 1 21 17.500H1A1 1 0 0 1 0 16.500Z" fill="#f5c13d"/><path d="M5 12H17V19H13.500V15.500H8.500V19H5Z" fill="#3f8fe0"/></svg>
<svg style="left:545.0px;top:1048.0px;" width="24" height="24" viewBox="0 0 24 24"><circle cx="12" cy="12" r="12" fill="#db4437"/><path d="M12 12L1.600 6A12 12 0 0 0 7 22.900Z" fill="#0f9d58"/><path d="M12 12L7 22.900A12 12 0 0 0 23.300 8Z" fill="#ffcd40"/><path d="M12 12L23.300 8A12 12 0 0 0 1.600 6L6.800 9Z" fill="#db4437"/><circle cx="12" cy="12" r="5.600" fill="#fff"/><circle cx="12" cy="12" r="4.400" fill="#4285f4"/></svg>
<svg style="left:594.0px;top:1048.0px;" width="24" height="24" viewBox="0 0 24 24"><path d="M17.500 0L24 3V21L17.500 24 5.500 13.500 2 16.300 0 15V9L2 7.700 5.500 10.500Z" fill="#2489ca"/><path d="M17.500 0L24 3V21L17.500 24Z" fill="#1070b3"/><path d="M17.500 6.800L10.500 12 17.500 17.200Z" fill="#1c1c1c"/><path d="M0 9L2 7.700 8 13 2 16.300 0 15 3.500 12Z" fill="#3c99d4"/></svg>
<svg style="left:642.5px;top:1048.0px;" width="24" height="24" viewBox="0 0 24 24"><circle cx="12" cy="12" r="12" fill="#db4437"/><path d="M12 12L1.600 6A12 12 0 0 0 7 22.900Z" fill="#0f9d58"/><path d="M12 12L7 22.900A12 12 0 0 0 23.300 8Z" fill="#ffcd40"/><path d="M12 12L23.300 8A12 12 0 0 0 1.600 6L6.800 9Z" fill="#db4437"/><circle cx="12" cy="12" r="5.600" fill="#fff"/><circle cx="12" cy="12" r="4.400" fill="#4285f4"/></svg>
<svg style="left:655.0px;top:1058.5px;" width="15" height="14" viewBox="0 0 15 14"><ellipse cx="7.500" cy="7" rx="7.500" ry="6.800" fill="#15110f"/><ellipse cx="6.500" cy="8" rx="3.300" ry="3.800" fill="#e9c3a8"/><path d="M2 6C4 2 11 2 13.500 7 11 5.500 6 5 2 6Z" fill="#15110f"/></svg>
<div class="a" style="left:680.0px;top:1040.0px;width:44.0px;height:40.0px;background:#3f3f3f;"></div>
<div class="a" style="left:724.5px;top:1040.0px;width:3.0px;height:40.0px;background:#363636;"></div>
<svg style="left:694.0px;top:1049.0px;" width="22" height="23" viewBox="0 0 22 23"><path d="M11 0L21 5.500V17.500L11 23 1 17.500V5.500Z" fill="#3a3a3a"/><path d="M11 1.500L20 6.300V16.700L11 21.500 2 16.700V6.300Z" fill="#dcdcdc"/><path d="M11 11.500V19M11 11.500L4.500 7.800M11 11.500L17.500 7.800" stroke="#2a2a2a" stroke-width="2.400"/><path d="M7 4.800L11 7 15 4.800M3.800 11.500V15.500L7.300 17.500M18.200 11.500V15.500L14.700 17.500" fill="none" stroke="#2a2a2a" stroke-width="1.900"/></svg>
<svg style="left:742.0px;top:1048.5px;" width="23" height="22" viewBox="0 0 23 22"><rect x=".75" y=".75" width="21.500" height="20.500" fill="#0c1140" stroke="#8fb8fb" stroke-width="1.500"/><text x="4" y="15.500" font-family="Liberation Sans" font-weight="bold" font-size="12" fill="#8fb8fb">Ps</text></svg>
<svg style="left:791.0px;top:1049.0px;" width="22" height="22" viewBox="0 0 22 22"><defs><linearGradient id="phg" x1="0" y1="0" x2="1" y2="1"><stop offset="0" stop-color="#2a74e0"/><stop offset="1" stop-color="#3fc0f5"/></linearGradient></defs><rect width="22" height="22" rx="3" fill="url(#phg)"/><path d="M0 19L9 8 17 17.500 22 13V19A3 3 0 0 1 19 22H3A3 3 0 0 1 0 19Z" fill="#1a56c4"/><path d="M4 22L13 13 22 20A3 3 0 0 1 19 22Z" fill="#57d0fa"/><circle cx="16.500" cy="4.800" r="1.900" fill="#fff"/></svg>
<svg style="left:839.0px;top:1048.0px;" width="24" height="24" viewBox="0 0 24 24"><path d="M17.500 0L24 2.800V21.200L17.500 24 6 13.800 2 17 0 16V8L2 7 6 10.200Z" fill="#9b6fd8"/><path d="M17.500 0L24 2.800V21.200L17.500 24Z" fill="#7a4fc0"/><path d="M17.500 6.500L10.800 12 17.500 17.500Z" fill="#1c1c1c"/><path d="M0 8L2 7 8.500 12.500 2 17 0 16 4 12Z" fill="#b58ee8"/></svg>
<div class="a" style="left:488.0px;top:1078.0px;width:31.5px;height:2.0px;background:#76b9ed;"></div>
<div class="a" style="left:635.0px;top:1078.0px;width:40.0px;height:2.0px;background:#76b9ed;"></div>
<div class="a" style="left:680.0px;top:1078.0px;width:44.0px;height:2.0px;background:#76b9ed;"></div>
<div class="a" style="left:733.0px;top:1078.0px;width:40.0px;height:2.0px;background:#76b9ed;"></div>
<div class="a" style="left:782.0px;top:1078.0px;width:40.0px;height:2.0px;background:#76b9ed;"></div>
<div class="a" style="left:831.0px;top:1078.0px;width:40.0px;height:2.0px;background:#76b9ed;"></div>
<div class="a" style="left:520.0px;top:1078.0px;width:7.5px;height:2.0px;background:#5d92bd;"></div>
<div class="a" style="left:724.5px;top:1078.0px;width:3.0px;height:2.0px;background:#5d92bd;"></div>
<div class="a" style="left:1534.500px;top:1049.500px;width:21px;height:21px;border-radius:11px;background:linear-gradient(135deg,#fcc13a 10%,#f48a1e 55%,#e6541b 100%)"></div>
<div class="t" style="left:1565.5px;top:1053.1px;font-size:14.8px;letter-spacing:-1.142px;color:#fff;height:20px;line-height:20px;margin-top:-2px">14°C</div>
<div class="t" style="left:1603.3px;top:1053.1px;font-size:14.8px;letter-spacing:-0.688px;color:#fff;height:20px;line-height:20px;margin-top:-2px">Soleado</div>
<svg style="left:1677.0px;top:1056.0px;" width="12" height="7" viewBox="0 0 12 7"><path d="M.5 6.500L6 1 11.500 6.500" fill="none" stroke="#fff" stroke-width="1.300"/></svg>
<svg style="left:1699.0px;top:1054.0px;" width="17" height="11" viewBox="0 0 17 11"><rect x="3.500" y="2.500" width="12" height="7" fill="none" stroke="#fff" stroke-width="1.100"/><rect x="5" y="4" width="9" height="4" fill="#fff"/><rect x="15.800" y="4.500" width="1.200" height="3" fill="#fff"/><path d="M1 0V2.500M3 0V2.500M0 2.500H4V4.500A2 2 0 0 1 0 4.500ZM2 6V8H4" fill="none" stroke="#fff" stroke-width="1"/></svg>
<svg style="left:1726.0px;top:1053.0px;" width="13" height="13" viewBox="0 0 13 13"><path d="M1 8A11 11 0 0 1 12 1.500" fill="none" stroke="#9a9a9a" stroke-width="1.200"/><path d="M3 10A8 8 0 0 1 12 5" fill="none" stroke="#fff" stroke-width="1.200"/><path d="M5.500 12A5 5 0 0 1 12 8.500" fill="none" stroke="#fff" stroke-width="1.200"/><circle cx="11" cy="11.500" r="1.500" fill="#fff"/></svg>
<svg style="left:1747.0px;top:1053.0px;" width="16" height="14" viewBox="0 0 16 14"><path d="M.6 4.500H3.500L7 1.200V12.800L3.500 9.500H.6Z" fill="none" stroke="#fff" stroke-width="1.100"/><path d="M9 4.800a3 3 0 0 1 0 4.400M10.800 3a5.500 5.500 0 0 1 0 8" fill="none" stroke="#fff" stroke-width="1"/><path d="M12.800 1.200a8 8 0 0 1 0 11.600" fill="none" stroke="#8a8a8a" stroke-width="1"/></svg>
<div class="t" style="left:1774.5px;top:1052.6px;font-size:11.8px;letter-spacing:-0.740px;color:#fff;">CAT</div>
<div class="t" style="left:1821.6px;top:1043.1px;font-size:11.8px;letter-spacing:-0.431px;color:#fff;">11:23</div>
<div class="t" style="left:1809.0px;top:1061.1px;font-size:11.8px;letter-spacing:-0.056px;color:#fff;">20/2/2024</div>
<svg style="left:1879.0px;top:1052.0px;" width="17" height="16" viewBox="0 0 17 16"><path d="M0 0H17V12.500H10.500L8.500 15 6.500 12.500H0Z" fill="#fff"/><path d="M3.500 3.500H13.500M3.500 6H13.500M3.500 8.500H10" stroke="#1c1c1c" stroke-width="1.100"/></svg>
<div class="a" style="left:1915.5px;top:1040.0px;width:1.0px;height:40.0px;background:#8a8a8a;"></div>
<!-- arrows -->
<svg style="left:1590.0px;top:114.5px;" width="49" height="51.5" viewBox="0 0 49 51.5"><path d="M46.0 48.5L13.7 14.3" stroke="#fff" stroke-width="2.2" stroke-linecap="butt"/><path d="M3.0 3.0 L20.4 12.7 L13.7 14.3 L11.7 20.9Z" fill="#fff"/></svg>
<svg style="left:1673.1px;top:141.0px;" width="17.8743" height="49.5" viewBox="0 0 17.8743 49.5"><path d="M14.9 3.0L8.0 31.4" stroke="#fff" stroke-width="2.2" stroke-linecap="butt"/><path d="M4.4 46.5 L3.0 26.6 L8.0 31.4 L14.7 29.4Z" fill="#fff"/></svg>
<svg style="left:1761.1px;top:143.5px;" width="17.8935" height="47" viewBox="0 0 17.8935 47"><path d="M11.9 3.0L8.5 28.6" stroke="#fff" stroke-width="2.2" stroke-linecap="butt"/><path d="M6.4 44.0 L3.0 24.4 L8.5 28.6 L14.9 26.0Z" fill="#fff"/></svg>
<svg style="left:1489.5px;top:148.0px;" width="47.5" height="64" viewBox="0 0 47.5 64"><path d="M3.0 3.0L35.4 48.3" stroke="#fff" stroke-width="2.2" stroke-linecap="butt"/><path d="M44.5 61.0 L28.6 49.0 L35.4 48.3 L38.3 42.1Z" fill="#fff"/></svg>
<svg style="left:1605.0px;top:251.0px;" width="47" height="44.5" viewBox="0 0 47 44.5"><path d="M3.0 41.5L32.6 13.7" stroke="#fff" stroke-width="2.2" stroke-linecap="butt"/><path d="M44.0 3.0 L34.3 20.4 L32.6 13.7 L26.0 11.6Z" fill="#fff"/></svg>
<svg style="left:1757.0px;top:256.0px;" width="42" height="54.5" viewBox="0 0 42 54.5"><path d="M39.0 51.5L12.3 15.5" stroke="#fff" stroke-width="2.2" stroke-linecap="butt"/><path d="M3.0 3.0 L19.1 14.7 L12.3 15.5 L9.5 21.8Z" fill="#fff"/></svg>
<svg style="left:1625.5px;top:504.0px;" width="82.5" height="216" viewBox="0 0 82.5 216"><path d="M3.0 213.0L74.2 17.6" stroke="#fff" stroke-width="2.2" stroke-linecap="butt"/><path d="M79.5 3.0 L78.6 22.9 L74.2 17.6 L67.4 18.8Z" fill="#fff"/></svg>
<svg style="left:1001.5px;top:258.5px;" width="48.3205" height="151.5" viewBox="0 0 48.3205 151.5"><path d="M45.3 148.5L7.8 18.0" stroke="#fff" stroke-width="2.2" stroke-linecap="butt"/><path d="M3.5 3.0 L14.5 19.6 L7.8 18.0 L3.0 22.9Z" fill="#fff"/></svg>
<svg style="left:141.5px;top:813.5px;" width="389" height="155" viewBox="0 0 389 155"><path d="M386.0 152.0L17.5 8.6" stroke="#fff" stroke-width="2.2" stroke-linecap="butt"/><path d="M3.0 3.0 L22.9 4.3 L17.5 8.6 L18.5 15.5Z" fill="#fff"/></svg>
</body></html>
